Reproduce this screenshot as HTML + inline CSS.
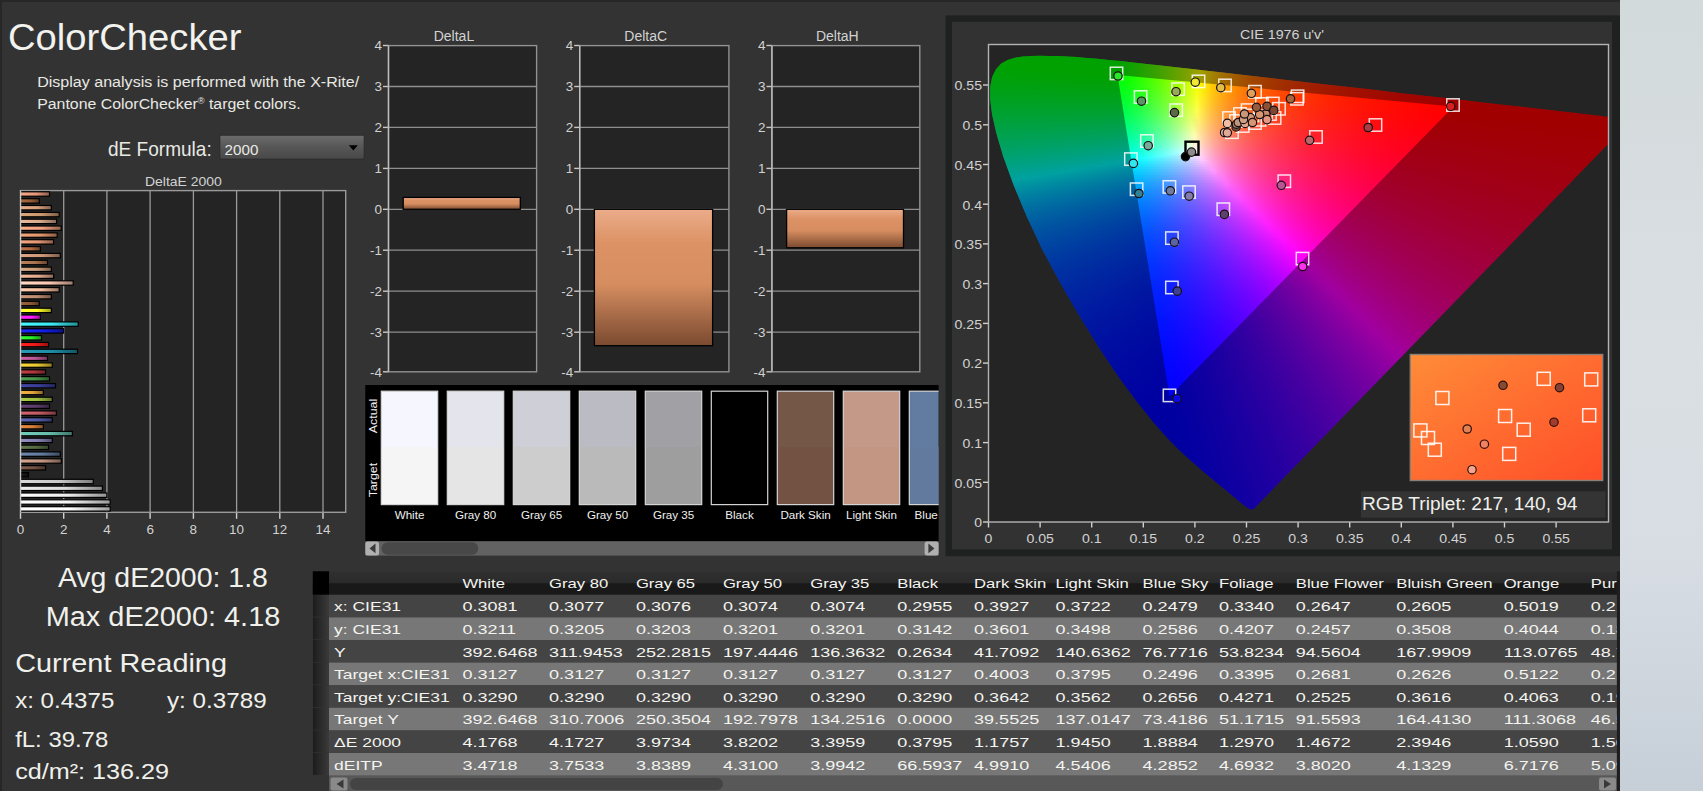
<!DOCTYPE html>
<html><head><meta charset="utf-8"><title>ColorChecker</title>
<style>
html,body{margin:0;padding:0;background:#333;overflow:hidden}
body{width:1703px;height:791px;position:relative;font-family:"Liberation Sans",sans-serif}
svg{position:absolute;left:0;top:0;font-family:"Liberation Sans",sans-serif}
#side{position:absolute;left:1620px;top:0;width:83px;height:791px;background:linear-gradient(180deg,#d3dadb,#dadfe3 45%,#d8dde4 70%,#c6cfd8)}
#topl{position:absolute;left:0;top:0;width:1620px;height:1.5px;background:#272727}#leftl{position:absolute;left:0;top:0;width:1.5px;height:791px;background:#272727}
#cie{position:absolute;left:988.5px;top:44.5px;width:620.0px;height:477.5px;clip-path:polygon(265.1px 464.4px,265.0px 464.4px,264.8px 464.4px,264.7px 464.5px,264.4px 464.5px,264.2px 464.5px,264.1px 464.7px,263.9px 464.9px,263.6px 464.9px,263.1px 464.9px,262.6px 464.8px,262.2px 464.8px,261.6px 464.7px,260.7px 464.3px,259.3px 463.5px,257.6px 462.3px,255.6px 460.8px,253.0px 458.8px,250.0px 456.3px,246.4px 453.3px,242.3px 449.8px,237.5px 445.8px,231.9px 441.2px,225.4px 435.8px,218.0px 429.7px,209.8px 422.8px,200.5px 414.6px,190.1px 404.9px,178.6px 393.2px,164.9px 377.7px,148.7px 357.5px,130.9px 333.4px,111.9px 305.2px,92.1px 273.4px,72.4px 239.7px,53.8px 205.2px,38.0px 171.6px,25.0px 140.3px,14.9px 112.5px,7.9px 89.1px,3.6px 69.9px,1.6px 54.4px,1.7px 42.2px,3.7px 32.3px,7.5px 24.7px,12.7px 19.1px,19.1px 15.4px,26.4px 13.2px,34.4px 12.0px,42.9px 11.5px,51.7px 11.3px,60.5px 11.4px,69.4px 11.6px,78.6px 12.0px,88.2px 12.6px,98.3px 13.4px,108.9px 14.3px,120.1px 15.4px,132.0px 16.6px,144.6px 17.9px,158.0px 19.4px,172.3px 21.0px,187.4px 22.7px,203.5px 24.5px,220.5px 26.5px,238.6px 28.5px,257.6px 30.7px,277.5px 33.0px,298.3px 35.4px,319.9px 37.9px,342.1px 40.4px,364.8px 43.0px,387.3px 45.6px,409.2px 48.2px,430.9px 50.7px,452.0px 53.1px,471.7px 55.3px,490.1px 57.5px,507.2px 59.4px,522.8px 61.2px,536.9px 62.8px,549.5px 64.3px,560.9px 65.6px,571.1px 66.8px,580.5px 67.8px,589.1px 68.8px,596.9px 69.7px,603.9px 70.5px,610.1px 71.3px,615.3px 71.9px,619.7px 72.4px,623.5px 72.8px,626.8px 73.2px,629.6px 73.5px,631.7px 73.8px,633.4px 73.9px,634.9px 74.1px,636.3px 74.3px,637.5px 74.4px,638.6px 74.5px,639.8px 74.7px,640.9px 74.8px,641.8px 74.9px,642.3px 75.0px,642.7px 75.0px,643.0px 75.1px,643.3px 75.1px);overflow:hidden}
#cie i{position:absolute;display:block;height:2.5px}
</style></head><body>
<div id="side"></div><div id="topl"></div><div id="leftl"></div>
<svg width="1703" height="791" viewBox="0 0 1703 791"><defs><linearGradient id="dd" x1="0" y1="0" x2="0" y2="1"><stop offset="0" stop-color="#6c6c6c"/><stop offset=".5" stop-color="#565656"/><stop offset="1" stop-color="#484848"/></linearGradient><linearGradient id="b0"><stop offset="0" stop-color="#f7a888"/><stop offset=".55" stop-color="#e4987a"/><stop offset="1" stop-color="#8d5e4c"/></linearGradient><linearGradient id="b1"><stop offset="0" stop-color="#a66c42"/><stop offset=".55" stop-color="#965f37"/><stop offset="1" stop-color="#5d3b22"/></linearGradient><linearGradient id="b2"><stop offset="0" stop-color="#eab08b"/><stop offset=".55" stop-color="#d7a07d"/><stop offset="1" stop-color="#85634e"/></linearGradient><linearGradient id="b3"><stop offset="0" stop-color="#daa67c"/><stop offset=".55" stop-color="#c8966e"/><stop offset="1" stop-color="#7c5d44"/></linearGradient><linearGradient id="b4"><stop offset="0" stop-color="#eaba9b"/><stop offset=".55" stop-color="#d7aa8c"/><stop offset="1" stop-color="#856957"/></linearGradient><linearGradient id="b5"><stop offset="0" stop-color="#ffb08b"/><stop offset=".55" stop-color="#f0a07d"/><stop offset="1" stop-color="#95634e"/></linearGradient><linearGradient id="b6"><stop offset="0" stop-color="#f4a67c"/><stop offset=".55" stop-color="#e1966e"/><stop offset="1" stop-color="#8c5d44"/></linearGradient><linearGradient id="b7"><stop offset="0" stop-color="#f4a681"/><stop offset=".55" stop-color="#e19673"/><stop offset="1" stop-color="#8c5d47"/></linearGradient><linearGradient id="b8"><stop offset="0" stop-color="#c0764c"/><stop offset=".55" stop-color="#af6941"/><stop offset="1" stop-color="#6c4128"/></linearGradient><linearGradient id="b9"><stop offset="0" stop-color="#dfa686"/><stop offset=".55" stop-color="#cd9678"/><stop offset="1" stop-color="#7f5d4a"/></linearGradient><linearGradient id="b10"><stop offset="0" stop-color="#ba815c"/><stop offset=".55" stop-color="#aa7350"/><stop offset="1" stop-color="#694732"/></linearGradient><linearGradient id="b11"><stop offset="0" stop-color="#daab86"/><stop offset=".55" stop-color="#c89b78"/><stop offset="1" stop-color="#7c604a"/></linearGradient><linearGradient id="b12"><stop offset="0" stop-color="#f4ba9b"/><stop offset=".55" stop-color="#e1aa8c"/><stop offset="1" stop-color="#8c6957"/></linearGradient><linearGradient id="b13"><stop offset="0" stop-color="#ffdac5"/><stop offset=".55" stop-color="#fac8b4"/><stop offset="1" stop-color="#9b7c70"/></linearGradient><linearGradient id="b14"><stop offset="0" stop-color="#ffd0b0"/><stop offset=".55" stop-color="#f5bea0"/><stop offset="1" stop-color="#987663"/></linearGradient><linearGradient id="b15"><stop offset="0" stop-color="#d09b7c"/><stop offset=".55" stop-color="#be8c6e"/><stop offset="1" stop-color="#765744"/></linearGradient><linearGradient id="b16"><stop offset="0" stop-color="#9b6642"/><stop offset=".55" stop-color="#8c5a37"/><stop offset="1" stop-color="#573822"/></linearGradient><linearGradient id="b17"><stop offset="0" stop-color="#ffff32"/><stop offset=".55" stop-color="#ffff28"/><stop offset="1" stop-color="#9e9e19"/></linearGradient><linearGradient id="b18"><stop offset="0" stop-color="#ff28ff"/><stop offset=".55" stop-color="#ff1eff"/><stop offset="1" stop-color="#9e139e"/></linearGradient><linearGradient id="b19"><stop offset="0" stop-color="#47faff"/><stop offset=".55" stop-color="#3ce6f0"/><stop offset="1" stop-color="#258f95"/></linearGradient><linearGradient id="b20"><stop offset="0" stop-color="#1d28fa"/><stop offset=".55" stop-color="#141ee6"/><stop offset="1" stop-color="#0c138f"/></linearGradient><linearGradient id="b21"><stop offset="0" stop-color="#32ff32"/><stop offset=".55" stop-color="#28f028"/><stop offset="1" stop-color="#199519"/></linearGradient><linearGradient id="b22"><stop offset="0" stop-color="#ff2222"/><stop offset=".55" stop-color="#f01919"/><stop offset="1" stop-color="#951010"/></linearGradient><linearGradient id="b23"><stop offset="0" stop-color="#289bb5"/><stop offset=".55" stop-color="#1e8ca5"/><stop offset="1" stop-color="#135766"/></linearGradient><linearGradient id="b24"><stop offset="0" stop-color="#cc62a4"/><stop offset=".55" stop-color="#bb5695"/><stop offset="1" stop-color="#74355c"/></linearGradient><linearGradient id="b25"><stop offset="0" stop-color="#fbd93c"/><stop offset=".55" stop-color="#e7c732"/><stop offset="1" stop-color="#8f7b1f"/></linearGradient><linearGradient id="b26"><stop offset="0" stop-color="#c04147"/><stop offset=".55" stop-color="#af363c"/><stop offset="1" stop-color="#6c2125"/></linearGradient><linearGradient id="b27"><stop offset="0" stop-color="#52a355"/><stop offset=".55" stop-color="#469449"/><stop offset="1" stop-color="#2b5c2d"/></linearGradient><linearGradient id="b28"><stop offset="0" stop-color="#4348a6"/><stop offset=".55" stop-color="#383d96"/><stop offset="1" stop-color="#23265d"/></linearGradient><linearGradient id="b29"><stop offset="0" stop-color="#f3b347"/><stop offset=".55" stop-color="#e0a33c"/><stop offset="1" stop-color="#8b6525"/></linearGradient><linearGradient id="b30"><stop offset="0" stop-color="#adcd4b"/><stop offset=".55" stop-color="#9dbc40"/><stop offset="1" stop-color="#617528"/></linearGradient><linearGradient id="b31"><stop offset="0" stop-color="#6b4779"/><stop offset=".55" stop-color="#5e3c6c"/><stop offset="1" stop-color="#3a2543"/></linearGradient><linearGradient id="b32"><stop offset="0" stop-color="#d36670"/><stop offset=".55" stop-color="#c15a63"/><stop offset="1" stop-color="#78383d"/></linearGradient><linearGradient id="b33"><stop offset="0" stop-color="#5c68b6"/><stop offset=".55" stop-color="#505ba6"/><stop offset="1" stop-color="#323867"/></linearGradient><linearGradient id="b34"><stop offset="0" stop-color="#e98c42"/><stop offset=".55" stop-color="#d67e37"/><stop offset="1" stop-color="#854e22"/></linearGradient><linearGradient id="b35"><stop offset="0" stop-color="#74ceba"/><stop offset=".55" stop-color="#67bdaa"/><stop offset="1" stop-color="#407569"/></linearGradient><linearGradient id="b36"><stop offset="0" stop-color="#948ec2"/><stop offset=".55" stop-color="#8580b1"/><stop offset="1" stop-color="#524f6e"/></linearGradient><linearGradient id="b37"><stop offset="0" stop-color="#63794e"/><stop offset=".55" stop-color="#576c43"/><stop offset="1" stop-color="#36432a"/></linearGradient><linearGradient id="b38"><stop offset="0" stop-color="#6f88ad"/><stop offset=".55" stop-color="#627a9d"/><stop offset="1" stop-color="#3d4c61"/></linearGradient><linearGradient id="b39"><stop offset="0" stop-color="#d4a690"/><stop offset=".55" stop-color="#c29682"/><stop offset="1" stop-color="#785d51"/></linearGradient><linearGradient id="b40"><stop offset="0" stop-color="#815e4f"/><stop offset=".55" stop-color="#735244"/><stop offset="1" stop-color="#47332a"/></linearGradient><linearGradient id="b41"><stop offset="0" stop-color="#1d1d1d"/><stop offset=".55" stop-color="#141414"/><stop offset="1" stop-color="#0c0c0c"/></linearGradient><linearGradient id="b42"><stop offset="0" stop-color="#dadada"/><stop offset=".55" stop-color="#c8c8c8"/><stop offset="1" stop-color="#7c7c7c"/></linearGradient><linearGradient id="b43"><stop offset="0" stop-color="#efefef"/><stop offset=".55" stop-color="#dcdcdc"/><stop offset="1" stop-color="#888888"/></linearGradient><linearGradient id="b44"><stop offset="0" stop-color="#ffffff"/><stop offset=".55" stop-color="#ebebeb"/><stop offset="1" stop-color="#929292"/></linearGradient><linearGradient id="b45"><stop offset="0" stop-color="#ffffff"/><stop offset=".55" stop-color="#f5f5f5"/><stop offset="1" stop-color="#989898"/></linearGradient><linearGradient id="b46"><stop offset="0" stop-color="#ffffff"/><stop offset=".55" stop-color="#ffffff"/><stop offset="1" stop-color="#9e9e9e"/></linearGradient><linearGradient id="sk" x1="0" y1="0" x2="0" y2="1"><stop offset="0" stop-color="#ebac8a"/><stop offset=".25" stop-color="#dc9264"/><stop offset=".55" stop-color="#d68d60"/><stop offset="1" stop-color="#7a4a30"/></linearGradient><linearGradient id="hd" x1="0" y1="0" x2="0" y2="1"><stop offset="0" stop-color="#303030"/><stop offset="1" stop-color="#2a2a2a"/></linearGradient><linearGradient id="rh"><stop offset="0" stop-color="#1c1c1c"/><stop offset="1" stop-color="#3a3a3a"/></linearGradient></defs>
<text x="8.0" y="49.7" font-size="36.6" textLength="233.5" lengthAdjust="spacingAndGlyphs" fill="#f2f2ee">ColorChecker</text>
<text x="37.2" y="86.7" font-size="15.5" textLength="322.0" lengthAdjust="spacingAndGlyphs" fill="#e9e9e4">Display analysis is performed with the X-Rite/</text>
<text x="37.2" y="108.7" font-size="15.5" textLength="263.5" lengthAdjust="spacingAndGlyphs" fill="#e9e9e4">Pantone ColorChecker<tspan font-size="9" dy="-5">®</tspan><tspan dy="5"> target colors.</tspan></text>
<text x="108.0" y="155.8" font-size="21" textLength="103.7" lengthAdjust="spacingAndGlyphs" fill="#e9e9e4">dE Formula:</text>
<rect x="219.8" y="135.2" width="144.4" height="24.0" fill="url(#dd)" stroke="#2a2a2a" stroke-width="1" rx="1.5"/>
<text x="224.6" y="154.7" font-size="14" textLength="33.8" lengthAdjust="spacingAndGlyphs" fill="#e9e9e4">2000</text>
<path d="M348.8 145.2h9l-4.5 5.2z" fill="#000"/>
<rect x="20.5" y="190.6" width="325.2" height="321.7" fill="#242424"/>
<text x="144.9" y="185.8" font-size="13.6" textLength="77.0" lengthAdjust="spacingAndGlyphs" fill="#d2d2d2">DeltaE 2000</text>
<line x1="20.5" y1="512.3" x2="20.5" y2="518.8" stroke="#d0d0d0" stroke-width="1.4"/>
<text x="16.8" y="533.8" font-size="13.4" textLength="7.5" lengthAdjust="spacingAndGlyphs" fill="#d2d2d2">0</text>
<line x1="63.7" y1="190.6" x2="63.7" y2="512.3" stroke="#9a9a9a" stroke-width="1.3"/>
<line x1="63.7" y1="512.3" x2="63.7" y2="518.8" stroke="#d0d0d0" stroke-width="1.4"/>
<text x="60.0" y="533.8" font-size="13.4" textLength="7.5" lengthAdjust="spacingAndGlyphs" fill="#d2d2d2">2</text>
<line x1="106.9" y1="190.6" x2="106.9" y2="512.3" stroke="#9a9a9a" stroke-width="1.3"/>
<line x1="106.9" y1="512.3" x2="106.9" y2="518.8" stroke="#d0d0d0" stroke-width="1.4"/>
<text x="103.2" y="533.8" font-size="13.4" textLength="7.5" lengthAdjust="spacingAndGlyphs" fill="#d2d2d2">4</text>
<line x1="150.1" y1="190.6" x2="150.1" y2="512.3" stroke="#9a9a9a" stroke-width="1.3"/>
<line x1="150.1" y1="512.3" x2="150.1" y2="518.8" stroke="#d0d0d0" stroke-width="1.4"/>
<text x="146.4" y="533.8" font-size="13.4" textLength="7.5" lengthAdjust="spacingAndGlyphs" fill="#d2d2d2">6</text>
<line x1="193.4" y1="190.6" x2="193.4" y2="512.3" stroke="#9a9a9a" stroke-width="1.3"/>
<line x1="193.4" y1="512.3" x2="193.4" y2="518.8" stroke="#d0d0d0" stroke-width="1.4"/>
<text x="189.6" y="533.8" font-size="13.4" textLength="7.5" lengthAdjust="spacingAndGlyphs" fill="#d2d2d2">8</text>
<line x1="236.6" y1="190.6" x2="236.6" y2="512.3" stroke="#9a9a9a" stroke-width="1.3"/>
<line x1="236.6" y1="512.3" x2="236.6" y2="518.8" stroke="#d0d0d0" stroke-width="1.4"/>
<text x="229.1" y="533.8" font-size="13.4" textLength="14.9" lengthAdjust="spacingAndGlyphs" fill="#d2d2d2">10</text>
<line x1="279.8" y1="190.6" x2="279.8" y2="512.3" stroke="#9a9a9a" stroke-width="1.3"/>
<line x1="279.8" y1="512.3" x2="279.8" y2="518.8" stroke="#d0d0d0" stroke-width="1.4"/>
<text x="272.3" y="533.8" font-size="13.4" textLength="14.9" lengthAdjust="spacingAndGlyphs" fill="#d2d2d2">12</text>
<line x1="323.0" y1="190.6" x2="323.0" y2="512.3" stroke="#9a9a9a" stroke-width="1.3"/>
<line x1="323.0" y1="512.3" x2="323.0" y2="518.8" stroke="#d0d0d0" stroke-width="1.4"/>
<text x="315.5" y="533.8" font-size="13.4" textLength="14.9" lengthAdjust="spacingAndGlyphs" fill="#d2d2d2">14</text>
<rect x="20.5" y="190.6" width="325.2" height="321.69999999999993" fill="none" stroke="#9a9a9a" stroke-width="1.4"/>
<rect x="19.5" y="191.8" width="30.0" height="4.4" fill="url(#b0)" stroke="#000" stroke-width="1.2"/>
<rect x="19.5" y="198.7" width="19.8" height="4.4" fill="url(#b1)" stroke="#000" stroke-width="1.2"/>
<rect x="19.5" y="205.5" width="31.9" height="4.4" fill="url(#b2)" stroke="#000" stroke-width="1.2"/>
<rect x="19.5" y="212.4" width="39.7" height="4.4" fill="url(#b3)" stroke="#000" stroke-width="1.2"/>
<rect x="19.5" y="219.2" width="37.1" height="4.4" fill="url(#b4)" stroke="#000" stroke-width="1.2"/>
<rect x="19.5" y="226.0" width="41.6" height="4.4" fill="url(#b5)" stroke="#000" stroke-width="1.2"/>
<rect x="19.5" y="232.9" width="37.7" height="4.4" fill="url(#b6)" stroke="#000" stroke-width="1.2"/>
<rect x="19.5" y="239.7" width="34.1" height="4.4" fill="url(#b7)" stroke="#000" stroke-width="1.2"/>
<rect x="19.5" y="246.6" width="20.9" height="4.4" fill="url(#b8)" stroke="#000" stroke-width="1.2"/>
<rect x="19.5" y="253.4" width="40.8" height="4.4" fill="url(#b9)" stroke="#000" stroke-width="1.2"/>
<rect x="19.5" y="260.3" width="28.0" height="4.4" fill="url(#b10)" stroke="#000" stroke-width="1.2"/>
<rect x="19.5" y="267.1" width="31.9" height="4.4" fill="url(#b11)" stroke="#000" stroke-width="1.2"/>
<rect x="19.5" y="274.0" width="34.1" height="4.4" fill="url(#b12)" stroke="#000" stroke-width="1.2"/>
<rect x="19.5" y="280.8" width="53.7" height="4.4" fill="url(#b13)" stroke="#000" stroke-width="1.2"/>
<rect x="19.5" y="287.6" width="39.7" height="4.4" fill="url(#b14)" stroke="#000" stroke-width="1.2"/>
<rect x="19.5" y="294.5" width="31.9" height="4.4" fill="url(#b15)" stroke="#000" stroke-width="1.2"/>
<rect x="19.5" y="301.3" width="19.8" height="4.4" fill="url(#b16)" stroke="#000" stroke-width="1.2"/>
<rect x="19.5" y="308.2" width="31.9" height="4.4" fill="url(#b17)" stroke="#000" stroke-width="1.2"/>
<rect x="19.5" y="315.0" width="20.9" height="4.4" fill="url(#b18)" stroke="#000" stroke-width="1.2"/>
<rect x="19.5" y="321.9" width="58.7" height="4.4" fill="url(#b19)" stroke="#000" stroke-width="1.2"/>
<rect x="19.5" y="328.7" width="44.0" height="4.4" fill="url(#b20)" stroke="#000" stroke-width="1.2"/>
<rect x="19.5" y="335.6" width="22.0" height="4.4" fill="url(#b21)" stroke="#000" stroke-width="1.2"/>
<rect x="19.5" y="342.4" width="29.1" height="4.4" fill="url(#b22)" stroke="#000" stroke-width="1.2"/>
<rect x="19.5" y="349.2" width="58.0" height="4.4" fill="url(#b23)" stroke="#000" stroke-width="1.2"/>
<rect x="19.5" y="356.1" width="28.0" height="4.4" fill="url(#b24)" stroke="#000" stroke-width="1.2"/>
<rect x="19.5" y="362.9" width="32.8" height="4.4" fill="url(#b25)" stroke="#000" stroke-width="1.2"/>
<rect x="19.5" y="369.8" width="26.1" height="4.4" fill="url(#b26)" stroke="#000" stroke-width="1.2"/>
<rect x="19.5" y="376.6" width="30.0" height="4.4" fill="url(#b27)" stroke="#000" stroke-width="1.2"/>
<rect x="19.5" y="383.5" width="36.0" height="4.4" fill="url(#b28)" stroke="#000" stroke-width="1.2"/>
<rect x="19.5" y="390.3" width="23.9" height="4.4" fill="url(#b29)" stroke="#000" stroke-width="1.2"/>
<rect x="19.5" y="397.2" width="32.8" height="4.4" fill="url(#b30)" stroke="#000" stroke-width="1.2"/>
<rect x="19.5" y="404.0" width="30.0" height="4.4" fill="url(#b31)" stroke="#000" stroke-width="1.2"/>
<rect x="19.5" y="410.9" width="36.9" height="4.4" fill="url(#b32)" stroke="#000" stroke-width="1.2"/>
<rect x="19.5" y="417.7" width="32.8" height="4.4" fill="url(#b33)" stroke="#000" stroke-width="1.2"/>
<rect x="19.5" y="424.5" width="23.9" height="4.4" fill="url(#b34)" stroke="#000" stroke-width="1.2"/>
<rect x="19.5" y="431.4" width="52.9" height="4.4" fill="url(#b35)" stroke="#000" stroke-width="1.2"/>
<rect x="19.5" y="438.2" width="32.8" height="4.4" fill="url(#b36)" stroke="#000" stroke-width="1.2"/>
<rect x="19.5" y="445.1" width="29.1" height="4.4" fill="url(#b37)" stroke="#000" stroke-width="1.2"/>
<rect x="19.5" y="451.9" width="40.8" height="4.4" fill="url(#b38)" stroke="#000" stroke-width="1.2"/>
<rect x="19.5" y="458.8" width="41.8" height="4.4" fill="url(#b39)" stroke="#000" stroke-width="1.2"/>
<rect x="19.5" y="465.6" width="26.1" height="4.4" fill="url(#b40)" stroke="#000" stroke-width="1.2"/>
<rect x="19.5" y="472.5" width="9.0" height="4.4" fill="url(#b41)" stroke="#000" stroke-width="1.2"/>
<rect x="19.5" y="479.3" width="73.8" height="4.4" fill="url(#b42)" stroke="#000" stroke-width="1.2"/>
<rect x="19.5" y="486.1" width="82.9" height="4.4" fill="url(#b43)" stroke="#000" stroke-width="1.2"/>
<rect x="19.5" y="493.0" width="87.4" height="4.4" fill="url(#b44)" stroke="#000" stroke-width="1.2"/>
<rect x="19.5" y="499.8" width="90.7" height="4.4" fill="url(#b45)" stroke="#000" stroke-width="1.2"/>
<rect x="19.5" y="506.7" width="90.7" height="4.4" fill="url(#b46)" stroke="#000" stroke-width="1.2"/>
<rect x="17.5" y="190.6" width="2.3" height="321.7" fill="#333"/>
<line x1="20.5" y1="190.6" x2="20.5" y2="512.3" stroke="#c8c8c8" stroke-width="1.4"/>
<rect x="388.5" y="45.6" width="148.1" height="326.2" fill="#242424"/>
<line x1="383.0" y1="371.8" x2="388.5" y2="371.8" stroke="#c8c8c8" stroke-width="1.4"/>
<text x="370.1" y="376.7" font-size="13.4" textLength="11.9" lengthAdjust="spacingAndGlyphs" fill="#d2d2d2">-4</text>
<line x1="388.5" y1="332.2" x2="536.6" y2="332.2" stroke="#8e8e8e" stroke-width="1.3"/>
<line x1="383.0" y1="332.2" x2="388.5" y2="332.2" stroke="#c8c8c8" stroke-width="1.4"/>
<text x="370.1" y="337.1" font-size="13.4" textLength="11.9" lengthAdjust="spacingAndGlyphs" fill="#d2d2d2">-3</text>
<line x1="388.5" y1="291.2" x2="536.6" y2="291.2" stroke="#8e8e8e" stroke-width="1.3"/>
<line x1="383.0" y1="291.2" x2="388.5" y2="291.2" stroke="#c8c8c8" stroke-width="1.4"/>
<text x="370.1" y="296.1" font-size="13.4" textLength="11.9" lengthAdjust="spacingAndGlyphs" fill="#d2d2d2">-2</text>
<line x1="388.5" y1="250.2" x2="536.6" y2="250.2" stroke="#8e8e8e" stroke-width="1.3"/>
<line x1="383.0" y1="250.2" x2="388.5" y2="250.2" stroke="#c8c8c8" stroke-width="1.4"/>
<text x="370.1" y="255.2" font-size="13.4" textLength="11.9" lengthAdjust="spacingAndGlyphs" fill="#d2d2d2">-1</text>
<line x1="388.5" y1="209.3" x2="536.6" y2="209.3" stroke="#8e8e8e" stroke-width="1.3"/>
<line x1="383.0" y1="209.3" x2="388.5" y2="209.3" stroke="#c8c8c8" stroke-width="1.4"/>
<text x="374.5" y="214.2" font-size="13.4" textLength="7.5" lengthAdjust="spacingAndGlyphs" fill="#d2d2d2">0</text>
<line x1="388.5" y1="168.4" x2="536.6" y2="168.4" stroke="#8e8e8e" stroke-width="1.3"/>
<line x1="383.0" y1="168.4" x2="388.5" y2="168.4" stroke="#c8c8c8" stroke-width="1.4"/>
<text x="374.5" y="173.3" font-size="13.4" textLength="7.5" lengthAdjust="spacingAndGlyphs" fill="#d2d2d2">1</text>
<line x1="388.5" y1="127.4" x2="536.6" y2="127.4" stroke="#8e8e8e" stroke-width="1.3"/>
<line x1="383.0" y1="127.4" x2="388.5" y2="127.4" stroke="#c8c8c8" stroke-width="1.4"/>
<text x="374.5" y="132.3" font-size="13.4" textLength="7.5" lengthAdjust="spacingAndGlyphs" fill="#d2d2d2">2</text>
<line x1="388.5" y1="86.5" x2="536.6" y2="86.5" stroke="#8e8e8e" stroke-width="1.3"/>
<line x1="383.0" y1="86.5" x2="388.5" y2="86.5" stroke="#c8c8c8" stroke-width="1.4"/>
<text x="374.5" y="91.4" font-size="13.4" textLength="7.5" lengthAdjust="spacingAndGlyphs" fill="#d2d2d2">3</text>
<line x1="383.0" y1="45.5" x2="388.5" y2="45.5" stroke="#c8c8c8" stroke-width="1.4"/>
<text x="374.5" y="50.4" font-size="13.4" textLength="7.5" lengthAdjust="spacingAndGlyphs" fill="#d2d2d2">4</text>
<rect x="388.5" y="45.6" width="148.1" height="326.2" fill="none" stroke="#929292" stroke-width="1.4"/>
<line x1="388.5" y1="45.6" x2="388.5" y2="371.8" stroke="#bdbdbd" stroke-width="1.4"/>
<text x="433.7" y="41.3" font-size="14" textLength="40.5" lengthAdjust="spacingAndGlyphs" fill="#d2d2d2">DeltaL</text>
<rect x="403.2" y="197.4" width="117.1" height="11.9" fill="url(#sk)" stroke="#000" stroke-width="1.3"/>
<rect x="579.7" y="45.6" width="149.2" height="326.2" fill="#242424"/>
<line x1="574.2" y1="371.8" x2="579.7" y2="371.8" stroke="#c8c8c8" stroke-width="1.4"/>
<text x="561.3" y="376.7" font-size="13.4" textLength="11.9" lengthAdjust="spacingAndGlyphs" fill="#d2d2d2">-4</text>
<line x1="579.7" y1="332.2" x2="728.9" y2="332.2" stroke="#8e8e8e" stroke-width="1.3"/>
<line x1="574.2" y1="332.2" x2="579.7" y2="332.2" stroke="#c8c8c8" stroke-width="1.4"/>
<text x="561.3" y="337.1" font-size="13.4" textLength="11.9" lengthAdjust="spacingAndGlyphs" fill="#d2d2d2">-3</text>
<line x1="579.7" y1="291.2" x2="728.9" y2="291.2" stroke="#8e8e8e" stroke-width="1.3"/>
<line x1="574.2" y1="291.2" x2="579.7" y2="291.2" stroke="#c8c8c8" stroke-width="1.4"/>
<text x="561.3" y="296.1" font-size="13.4" textLength="11.9" lengthAdjust="spacingAndGlyphs" fill="#d2d2d2">-2</text>
<line x1="579.7" y1="250.2" x2="728.9" y2="250.2" stroke="#8e8e8e" stroke-width="1.3"/>
<line x1="574.2" y1="250.2" x2="579.7" y2="250.2" stroke="#c8c8c8" stroke-width="1.4"/>
<text x="561.3" y="255.2" font-size="13.4" textLength="11.9" lengthAdjust="spacingAndGlyphs" fill="#d2d2d2">-1</text>
<line x1="579.7" y1="209.3" x2="728.9" y2="209.3" stroke="#8e8e8e" stroke-width="1.3"/>
<line x1="574.2" y1="209.3" x2="579.7" y2="209.3" stroke="#c8c8c8" stroke-width="1.4"/>
<text x="565.7" y="214.2" font-size="13.4" textLength="7.5" lengthAdjust="spacingAndGlyphs" fill="#d2d2d2">0</text>
<line x1="579.7" y1="168.4" x2="728.9" y2="168.4" stroke="#8e8e8e" stroke-width="1.3"/>
<line x1="574.2" y1="168.4" x2="579.7" y2="168.4" stroke="#c8c8c8" stroke-width="1.4"/>
<text x="565.7" y="173.3" font-size="13.4" textLength="7.5" lengthAdjust="spacingAndGlyphs" fill="#d2d2d2">1</text>
<line x1="579.7" y1="127.4" x2="728.9" y2="127.4" stroke="#8e8e8e" stroke-width="1.3"/>
<line x1="574.2" y1="127.4" x2="579.7" y2="127.4" stroke="#c8c8c8" stroke-width="1.4"/>
<text x="565.7" y="132.3" font-size="13.4" textLength="7.5" lengthAdjust="spacingAndGlyphs" fill="#d2d2d2">2</text>
<line x1="579.7" y1="86.5" x2="728.9" y2="86.5" stroke="#8e8e8e" stroke-width="1.3"/>
<line x1="574.2" y1="86.5" x2="579.7" y2="86.5" stroke="#c8c8c8" stroke-width="1.4"/>
<text x="565.7" y="91.4" font-size="13.4" textLength="7.5" lengthAdjust="spacingAndGlyphs" fill="#d2d2d2">3</text>
<line x1="574.2" y1="45.5" x2="579.7" y2="45.5" stroke="#c8c8c8" stroke-width="1.4"/>
<text x="565.7" y="50.4" font-size="13.4" textLength="7.5" lengthAdjust="spacingAndGlyphs" fill="#d2d2d2">4</text>
<rect x="579.7" y="45.6" width="149.2" height="326.2" fill="none" stroke="#929292" stroke-width="1.4"/>
<line x1="579.7" y1="45.6" x2="579.7" y2="371.8" stroke="#bdbdbd" stroke-width="1.4"/>
<text x="624.3" y="41.3" font-size="14" textLength="42.8" lengthAdjust="spacingAndGlyphs" fill="#d2d2d2">DeltaC</text>
<rect x="594.4" y="209.3" width="118.2" height="136.4" fill="url(#sk)" stroke="#000" stroke-width="1.3"/>
<rect x="771.9" y="45.6" width="147.9" height="326.2" fill="#242424"/>
<line x1="766.4" y1="371.8" x2="771.9" y2="371.8" stroke="#c8c8c8" stroke-width="1.4"/>
<text x="753.5" y="376.7" font-size="13.4" textLength="11.9" lengthAdjust="spacingAndGlyphs" fill="#d2d2d2">-4</text>
<line x1="771.9" y1="332.2" x2="919.8" y2="332.2" stroke="#8e8e8e" stroke-width="1.3"/>
<line x1="766.4" y1="332.2" x2="771.9" y2="332.2" stroke="#c8c8c8" stroke-width="1.4"/>
<text x="753.5" y="337.1" font-size="13.4" textLength="11.9" lengthAdjust="spacingAndGlyphs" fill="#d2d2d2">-3</text>
<line x1="771.9" y1="291.2" x2="919.8" y2="291.2" stroke="#8e8e8e" stroke-width="1.3"/>
<line x1="766.4" y1="291.2" x2="771.9" y2="291.2" stroke="#c8c8c8" stroke-width="1.4"/>
<text x="753.5" y="296.1" font-size="13.4" textLength="11.9" lengthAdjust="spacingAndGlyphs" fill="#d2d2d2">-2</text>
<line x1="771.9" y1="250.2" x2="919.8" y2="250.2" stroke="#8e8e8e" stroke-width="1.3"/>
<line x1="766.4" y1="250.2" x2="771.9" y2="250.2" stroke="#c8c8c8" stroke-width="1.4"/>
<text x="753.5" y="255.2" font-size="13.4" textLength="11.9" lengthAdjust="spacingAndGlyphs" fill="#d2d2d2">-1</text>
<line x1="771.9" y1="209.3" x2="919.8" y2="209.3" stroke="#8e8e8e" stroke-width="1.3"/>
<line x1="766.4" y1="209.3" x2="771.9" y2="209.3" stroke="#c8c8c8" stroke-width="1.4"/>
<text x="757.9" y="214.2" font-size="13.4" textLength="7.5" lengthAdjust="spacingAndGlyphs" fill="#d2d2d2">0</text>
<line x1="771.9" y1="168.4" x2="919.8" y2="168.4" stroke="#8e8e8e" stroke-width="1.3"/>
<line x1="766.4" y1="168.4" x2="771.9" y2="168.4" stroke="#c8c8c8" stroke-width="1.4"/>
<text x="757.9" y="173.3" font-size="13.4" textLength="7.5" lengthAdjust="spacingAndGlyphs" fill="#d2d2d2">1</text>
<line x1="771.9" y1="127.4" x2="919.8" y2="127.4" stroke="#8e8e8e" stroke-width="1.3"/>
<line x1="766.4" y1="127.4" x2="771.9" y2="127.4" stroke="#c8c8c8" stroke-width="1.4"/>
<text x="757.9" y="132.3" font-size="13.4" textLength="7.5" lengthAdjust="spacingAndGlyphs" fill="#d2d2d2">2</text>
<line x1="771.9" y1="86.5" x2="919.8" y2="86.5" stroke="#8e8e8e" stroke-width="1.3"/>
<line x1="766.4" y1="86.5" x2="771.9" y2="86.5" stroke="#c8c8c8" stroke-width="1.4"/>
<text x="757.9" y="91.4" font-size="13.4" textLength="7.5" lengthAdjust="spacingAndGlyphs" fill="#d2d2d2">3</text>
<line x1="766.4" y1="45.5" x2="771.9" y2="45.5" stroke="#c8c8c8" stroke-width="1.4"/>
<text x="757.9" y="50.4" font-size="13.4" textLength="7.5" lengthAdjust="spacingAndGlyphs" fill="#d2d2d2">4</text>
<rect x="771.9" y="45.6" width="147.9" height="326.2" fill="none" stroke="#929292" stroke-width="1.4"/>
<line x1="771.9" y1="45.6" x2="771.9" y2="371.8" stroke="#bdbdbd" stroke-width="1.4"/>
<text x="815.9" y="41.3" font-size="14" textLength="42.8" lengthAdjust="spacingAndGlyphs" fill="#d2d2d2">DeltaH</text>
<rect x="786.6" y="209.3" width="116.9" height="38.5" fill="url(#sk)" stroke="#000" stroke-width="1.3"/>
<rect x="365.3" y="385.0" width="573.3" height="156.5" fill="#000"/>
<rect x="365.3" y="541.2" width="573.3" height="14.4" fill="#626262"/>
<rect x="365.3" y="541.4" width="13.8" height="14.2" fill="#b0b0b0" rx="2.5"/>
<path d="M375.5 543.6v9.6l-6-4.8z" fill="#3a3a3a"/>
<rect x="924.6" y="541.4" width="14.0" height="14.2" fill="#b0b0b0" rx="2.5"/>
<path d="M928.4 543.6v9.6l6-4.8z" fill="#3a3a3a"/>
<rect x="381.6" y="542.3" width="96.6" height="12.4" fill="#484848" rx="6"/>
<clipPath id="pc"><rect x="365.3" y="385" width="573.3" height="156"/></clipPath><g clip-path="url(#pc)">
<rect x="381.3" y="391.2" width="56.4" height="113.4" fill="#f6f6fe"/>
<rect x="381.3" y="447.0" width="56.4" height="57.6" fill="#f5f5f5"/>
<rect x="381.3" y="391.2" width="56.4" height="113.4" fill="none" stroke="#d4d4d4" stroke-width="1.2"/>
<text x="394.7" y="519.0" font-size="11.6" textLength="29.7" lengthAdjust="spacingAndGlyphs" fill="#f0f0f0">White</text>
<rect x="447.3" y="391.2" width="56.4" height="113.4" fill="#e4e4ec"/>
<rect x="447.3" y="447.0" width="56.4" height="57.6" fill="#e5e5e5"/>
<rect x="447.3" y="391.2" width="56.4" height="113.4" fill="none" stroke="#d4d4d4" stroke-width="1.2"/>
<text x="454.9" y="519.0" font-size="11.6" textLength="41.3" lengthAdjust="spacingAndGlyphs" fill="#f0f0f0">Gray 80</text>
<rect x="513.3" y="391.2" width="56.4" height="113.4" fill="#cfcfd7"/>
<rect x="513.3" y="447.0" width="56.4" height="57.6" fill="#cdcdcd"/>
<rect x="513.3" y="391.2" width="56.4" height="113.4" fill="none" stroke="#d4d4d4" stroke-width="1.2"/>
<text x="520.9" y="519.0" font-size="11.6" textLength="41.3" lengthAdjust="spacingAndGlyphs" fill="#f0f0f0">Gray 65</text>
<rect x="579.3" y="391.2" width="56.4" height="113.4" fill="#bbbbc3"/>
<rect x="579.3" y="447.0" width="56.4" height="57.6" fill="#bababa"/>
<rect x="579.3" y="391.2" width="56.4" height="113.4" fill="none" stroke="#d4d4d4" stroke-width="1.2"/>
<text x="586.9" y="519.0" font-size="11.6" textLength="41.3" lengthAdjust="spacingAndGlyphs" fill="#f0f0f0">Gray 50</text>
<rect x="645.3" y="391.2" width="56.4" height="113.4" fill="#a0a0a5"/>
<rect x="645.3" y="447.0" width="56.4" height="57.6" fill="#9e9e9e"/>
<rect x="645.3" y="391.2" width="56.4" height="113.4" fill="none" stroke="#d4d4d4" stroke-width="1.2"/>
<text x="652.9" y="519.0" font-size="11.6" textLength="41.3" lengthAdjust="spacingAndGlyphs" fill="#f0f0f0">Gray 35</text>
<rect x="711.3" y="391.2" width="56.4" height="113.4" fill="#000000"/>
<rect x="711.3" y="447.0" width="56.4" height="57.6" fill="#000000"/>
<rect x="711.3" y="391.2" width="56.4" height="113.4" fill="none" stroke="#d4d4d4" stroke-width="1.2"/>
<text x="725.3" y="519.0" font-size="11.6" textLength="28.4" lengthAdjust="spacingAndGlyphs" fill="#f0f0f0">Black</text>
<rect x="777.3" y="391.2" width="56.4" height="113.4" fill="#755748"/>
<rect x="777.3" y="447.0" width="56.4" height="57.6" fill="#735244"/>
<rect x="777.3" y="391.2" width="56.4" height="113.4" fill="none" stroke="#d4d4d4" stroke-width="1.2"/>
<text x="780.4" y="519.0" font-size="11.6" textLength="50.3" lengthAdjust="spacingAndGlyphs" fill="#f0f0f0">Dark Skin</text>
<rect x="843.3" y="391.2" width="56.4" height="113.4" fill="#c49987"/>
<rect x="843.3" y="447.0" width="56.4" height="57.6" fill="#c29682"/>
<rect x="843.3" y="391.2" width="56.4" height="113.4" fill="none" stroke="#d4d4d4" stroke-width="1.2"/>
<text x="846.0" y="519.0" font-size="11.6" textLength="50.9" lengthAdjust="spacingAndGlyphs" fill="#f0f0f0">Light Skin</text>
<rect x="909.3" y="391.2" width="56.4" height="113.4" fill="#617ca0"/>
<rect x="909.3" y="447.0" width="56.4" height="57.6" fill="#627a9d"/>
<rect x="909.3" y="391.2" width="56.4" height="113.4" fill="none" stroke="#d4d4d4" stroke-width="1.2"/>
<text x="914.6" y="519.0" font-size="11.6" textLength="45.8" lengthAdjust="spacingAndGlyphs" fill="#f0f0f0">Blue Sky</text>
</g>
<g transform="translate(376.8,416) rotate(-90)"><text x="-17.3" y="0.0" font-size="11.5" textLength="34.5" lengthAdjust="spacingAndGlyphs" fill="#f0f0f0">Actual</text></g>
<g transform="translate(376.8,480) rotate(-90)"><text x="-17.3" y="0.0" font-size="11.5" textLength="34.5" lengthAdjust="spacingAndGlyphs" fill="#f0f0f0">Target</text></g>
<text x="57.9" y="586.6" font-size="27" textLength="210.0" lengthAdjust="spacingAndGlyphs" fill="#f0f0ec">Avg dE2000: 1.8</text>
<text x="45.7" y="626.2" font-size="27" textLength="234.6" lengthAdjust="spacingAndGlyphs" fill="#f0f0ec">Max dE2000: 4.18</text>
<text x="15.2" y="671.9" font-size="26" textLength="211.8" lengthAdjust="spacingAndGlyphs" fill="#f0f0ec">Current Reading</text>
<text x="15.2" y="707.5" font-size="22" textLength="99.1" lengthAdjust="spacingAndGlyphs" fill="#f0f0ec">x: 0.4375</text>
<text x="167.0" y="707.5" font-size="22" textLength="99.6" lengthAdjust="spacingAndGlyphs" fill="#f0f0ec">y: 0.3789</text>
<text x="15.2" y="746.5" font-size="22" textLength="93.0" lengthAdjust="spacingAndGlyphs" fill="#f0f0ec">fL: 39.78</text>
<text x="15.2" y="779.1" font-size="22" textLength="153.9" lengthAdjust="spacingAndGlyphs" fill="#f0f0ec">cd/m²: 136.29</text>
<rect x="312.8" y="571.3" width="1304.1" height="11.9" fill="url(#hd)"/>
<rect x="312.8" y="583.2" width="1304.1" height="11.6" fill="#191919"/>
<rect x="312.8" y="571.3" width="16.2" height="23.5" fill="#000"/>
<rect x="1616.9" y="571.3" width="3.0" height="220.0" fill="#1e1e1e"/>
<clipPath id="tc"><rect x="312.8" y="571.3" width="1304.1000000000001" height="220"/></clipPath><g clip-path="url(#tc)">
<text x="462.4" y="588.4" font-size="13.0" textLength="42.5" lengthAdjust="spacingAndGlyphs" fill="#f4f4f0">White</text>
<text x="549.1" y="588.4" font-size="13.0" textLength="59.2" lengthAdjust="spacingAndGlyphs" fill="#f4f4f0">Gray 80</text>
<text x="635.9" y="588.4" font-size="13.0" textLength="59.2" lengthAdjust="spacingAndGlyphs" fill="#f4f4f0">Gray 65</text>
<text x="722.9" y="588.4" font-size="13.0" textLength="59.2" lengthAdjust="spacingAndGlyphs" fill="#f4f4f0">Gray 50</text>
<text x="810.2" y="588.4" font-size="13.0" textLength="59.2" lengthAdjust="spacingAndGlyphs" fill="#f4f4f0">Gray 35</text>
<text x="897.3" y="588.4" font-size="13.0" textLength="40.7" lengthAdjust="spacingAndGlyphs" fill="#f4f4f0">Black</text>
<text x="974.1" y="588.4" font-size="13.0" textLength="72.1" lengthAdjust="spacingAndGlyphs" fill="#f4f4f0">Dark Skin</text>
<text x="1055.6" y="588.4" font-size="13.0" textLength="73.1" lengthAdjust="spacingAndGlyphs" fill="#f4f4f0">Light Skin</text>
<text x="1142.6" y="588.4" font-size="13.0" textLength="65.7" lengthAdjust="spacingAndGlyphs" fill="#f4f4f0">Blue Sky</text>
<text x="1219.0" y="588.4" font-size="13.0" textLength="54.6" lengthAdjust="spacingAndGlyphs" fill="#f4f4f0">Foliage</text>
<text x="1295.8" y="588.4" font-size="13.0" textLength="87.9" lengthAdjust="spacingAndGlyphs" fill="#f4f4f0">Blue Flower</text>
<text x="1396.3" y="588.4" font-size="13.0" textLength="96.2" lengthAdjust="spacingAndGlyphs" fill="#f4f4f0">Bluish Green</text>
<text x="1503.7" y="588.4" font-size="13.0" textLength="55.5" lengthAdjust="spacingAndGlyphs" fill="#f4f4f0">Orange</text>
<text x="1590.8" y="588.4" font-size="13.0" textLength="98.0" lengthAdjust="spacingAndGlyphs" fill="#f4f4f0">Purplish Blue</text>
<rect x="329.0" y="594.8" width="1287.9" height="22.8" fill="#444444"/>
<rect x="312.8" y="594.8" width="16.2" height="22.0" fill="url(#rh)"/>
<text x="334.0" y="611.3" font-size="13.0" textLength="67.1" lengthAdjust="spacingAndGlyphs" fill="#f4f4f0">x: CIE31</text>
<text x="462.4" y="611.3" font-size="13.0" textLength="55.1" lengthAdjust="spacingAndGlyphs" fill="#f4f4f0">0.3081</text>
<text x="549.1" y="611.3" font-size="13.0" textLength="55.1" lengthAdjust="spacingAndGlyphs" fill="#f4f4f0">0.3077</text>
<text x="635.9" y="611.3" font-size="13.0" textLength="55.1" lengthAdjust="spacingAndGlyphs" fill="#f4f4f0">0.3076</text>
<text x="722.9" y="611.3" font-size="13.0" textLength="55.1" lengthAdjust="spacingAndGlyphs" fill="#f4f4f0">0.3074</text>
<text x="810.2" y="611.3" font-size="13.0" textLength="55.1" lengthAdjust="spacingAndGlyphs" fill="#f4f4f0">0.3074</text>
<text x="897.3" y="611.3" font-size="13.0" textLength="55.1" lengthAdjust="spacingAndGlyphs" fill="#f4f4f0">0.2955</text>
<text x="974.1" y="611.3" font-size="13.0" textLength="55.1" lengthAdjust="spacingAndGlyphs" fill="#f4f4f0">0.3927</text>
<text x="1055.6" y="611.3" font-size="13.0" textLength="55.1" lengthAdjust="spacingAndGlyphs" fill="#f4f4f0">0.3722</text>
<text x="1142.6" y="611.3" font-size="13.0" textLength="55.1" lengthAdjust="spacingAndGlyphs" fill="#f4f4f0">0.2479</text>
<text x="1219.0" y="611.3" font-size="13.0" textLength="55.1" lengthAdjust="spacingAndGlyphs" fill="#f4f4f0">0.3340</text>
<text x="1295.8" y="611.3" font-size="13.0" textLength="55.1" lengthAdjust="spacingAndGlyphs" fill="#f4f4f0">0.2647</text>
<text x="1396.3" y="611.3" font-size="13.0" textLength="55.1" lengthAdjust="spacingAndGlyphs" fill="#f4f4f0">0.2605</text>
<text x="1503.7" y="611.3" font-size="13.0" textLength="55.1" lengthAdjust="spacingAndGlyphs" fill="#f4f4f0">0.5019</text>
<text x="1590.8" y="611.3" font-size="13.0" textLength="53.7" lengthAdjust="spacingAndGlyphs" fill="#f4f4f0">0.2112</text>
<rect x="329.0" y="617.4" width="1287.9" height="22.8" fill="#777777"/>
<rect x="312.8" y="617.4" width="16.2" height="22.0" fill="url(#rh)"/>
<text x="334.0" y="633.9" font-size="13.0" textLength="67.1" lengthAdjust="spacingAndGlyphs" fill="#f4f4f0">y: CIE31</text>
<text x="462.4" y="633.9" font-size="13.0" textLength="53.7" lengthAdjust="spacingAndGlyphs" fill="#f4f4f0">0.3211</text>
<text x="549.1" y="633.9" font-size="13.0" textLength="55.1" lengthAdjust="spacingAndGlyphs" fill="#f4f4f0">0.3205</text>
<text x="635.9" y="633.9" font-size="13.0" textLength="55.1" lengthAdjust="spacingAndGlyphs" fill="#f4f4f0">0.3203</text>
<text x="722.9" y="633.9" font-size="13.0" textLength="55.1" lengthAdjust="spacingAndGlyphs" fill="#f4f4f0">0.3201</text>
<text x="810.2" y="633.9" font-size="13.0" textLength="55.1" lengthAdjust="spacingAndGlyphs" fill="#f4f4f0">0.3201</text>
<text x="897.3" y="633.9" font-size="13.0" textLength="55.1" lengthAdjust="spacingAndGlyphs" fill="#f4f4f0">0.3142</text>
<text x="974.1" y="633.9" font-size="13.0" textLength="55.1" lengthAdjust="spacingAndGlyphs" fill="#f4f4f0">0.3601</text>
<text x="1055.6" y="633.9" font-size="13.0" textLength="55.1" lengthAdjust="spacingAndGlyphs" fill="#f4f4f0">0.3498</text>
<text x="1142.6" y="633.9" font-size="13.0" textLength="55.1" lengthAdjust="spacingAndGlyphs" fill="#f4f4f0">0.2586</text>
<text x="1219.0" y="633.9" font-size="13.0" textLength="55.1" lengthAdjust="spacingAndGlyphs" fill="#f4f4f0">0.4207</text>
<text x="1295.8" y="633.9" font-size="13.0" textLength="55.1" lengthAdjust="spacingAndGlyphs" fill="#f4f4f0">0.2457</text>
<text x="1396.3" y="633.9" font-size="13.0" textLength="55.1" lengthAdjust="spacingAndGlyphs" fill="#f4f4f0">0.3508</text>
<text x="1503.7" y="633.9" font-size="13.0" textLength="55.1" lengthAdjust="spacingAndGlyphs" fill="#f4f4f0">0.4044</text>
<text x="1590.8" y="633.9" font-size="13.0" textLength="55.1" lengthAdjust="spacingAndGlyphs" fill="#f4f4f0">0.1846</text>
<rect x="329.0" y="640.0" width="1287.9" height="22.8" fill="#444444"/>
<rect x="312.8" y="640.0" width="16.2" height="22.0" fill="url(#rh)"/>
<text x="334.0" y="656.5" font-size="13.0" textLength="11.7" lengthAdjust="spacingAndGlyphs" fill="#f4f4f0">Y</text>
<text x="462.4" y="656.5" font-size="13.0" textLength="75.1" lengthAdjust="spacingAndGlyphs" fill="#f4f4f0">392.6468</text>
<text x="549.1" y="656.5" font-size="13.0" textLength="73.8" lengthAdjust="spacingAndGlyphs" fill="#f4f4f0">311.9453</text>
<text x="635.9" y="656.5" font-size="13.0" textLength="75.1" lengthAdjust="spacingAndGlyphs" fill="#f4f4f0">252.2815</text>
<text x="722.9" y="656.5" font-size="13.0" textLength="75.1" lengthAdjust="spacingAndGlyphs" fill="#f4f4f0">197.4446</text>
<text x="810.2" y="656.5" font-size="13.0" textLength="75.1" lengthAdjust="spacingAndGlyphs" fill="#f4f4f0">136.3632</text>
<text x="897.3" y="656.5" font-size="13.0" textLength="55.1" lengthAdjust="spacingAndGlyphs" fill="#f4f4f0">0.2634</text>
<text x="974.1" y="656.5" font-size="13.0" textLength="65.1" lengthAdjust="spacingAndGlyphs" fill="#f4f4f0">41.7092</text>
<text x="1055.6" y="656.5" font-size="13.0" textLength="75.1" lengthAdjust="spacingAndGlyphs" fill="#f4f4f0">140.6362</text>
<text x="1142.6" y="656.5" font-size="13.0" textLength="65.1" lengthAdjust="spacingAndGlyphs" fill="#f4f4f0">76.7716</text>
<text x="1219.0" y="656.5" font-size="13.0" textLength="65.1" lengthAdjust="spacingAndGlyphs" fill="#f4f4f0">53.8234</text>
<text x="1295.8" y="656.5" font-size="13.0" textLength="65.1" lengthAdjust="spacingAndGlyphs" fill="#f4f4f0">94.5604</text>
<text x="1396.3" y="656.5" font-size="13.0" textLength="75.1" lengthAdjust="spacingAndGlyphs" fill="#f4f4f0">167.9909</text>
<text x="1503.7" y="656.5" font-size="13.0" textLength="73.8" lengthAdjust="spacingAndGlyphs" fill="#f4f4f0">113.0765</text>
<text x="1590.8" y="656.5" font-size="13.0" textLength="65.1" lengthAdjust="spacingAndGlyphs" fill="#f4f4f0">48.7215</text>
<rect x="329.0" y="662.6" width="1287.9" height="22.8" fill="#777777"/>
<rect x="312.8" y="662.6" width="16.2" height="22.0" fill="url(#rh)"/>
<text x="334.0" y="679.1" font-size="13.0" textLength="115.7" lengthAdjust="spacingAndGlyphs" fill="#f4f4f0">Target x:CIE31</text>
<text x="462.4" y="679.1" font-size="13.0" textLength="55.1" lengthAdjust="spacingAndGlyphs" fill="#f4f4f0">0.3127</text>
<text x="549.1" y="679.1" font-size="13.0" textLength="55.1" lengthAdjust="spacingAndGlyphs" fill="#f4f4f0">0.3127</text>
<text x="635.9" y="679.1" font-size="13.0" textLength="55.1" lengthAdjust="spacingAndGlyphs" fill="#f4f4f0">0.3127</text>
<text x="722.9" y="679.1" font-size="13.0" textLength="55.1" lengthAdjust="spacingAndGlyphs" fill="#f4f4f0">0.3127</text>
<text x="810.2" y="679.1" font-size="13.0" textLength="55.1" lengthAdjust="spacingAndGlyphs" fill="#f4f4f0">0.3127</text>
<text x="897.3" y="679.1" font-size="13.0" textLength="55.1" lengthAdjust="spacingAndGlyphs" fill="#f4f4f0">0.3127</text>
<text x="974.1" y="679.1" font-size="13.0" textLength="55.1" lengthAdjust="spacingAndGlyphs" fill="#f4f4f0">0.4003</text>
<text x="1055.6" y="679.1" font-size="13.0" textLength="55.1" lengthAdjust="spacingAndGlyphs" fill="#f4f4f0">0.3795</text>
<text x="1142.6" y="679.1" font-size="13.0" textLength="55.1" lengthAdjust="spacingAndGlyphs" fill="#f4f4f0">0.2496</text>
<text x="1219.0" y="679.1" font-size="13.0" textLength="55.1" lengthAdjust="spacingAndGlyphs" fill="#f4f4f0">0.3395</text>
<text x="1295.8" y="679.1" font-size="13.0" textLength="55.1" lengthAdjust="spacingAndGlyphs" fill="#f4f4f0">0.2681</text>
<text x="1396.3" y="679.1" font-size="13.0" textLength="55.1" lengthAdjust="spacingAndGlyphs" fill="#f4f4f0">0.2626</text>
<text x="1503.7" y="679.1" font-size="13.0" textLength="55.1" lengthAdjust="spacingAndGlyphs" fill="#f4f4f0">0.5122</text>
<text x="1590.8" y="679.1" font-size="13.0" textLength="55.1" lengthAdjust="spacingAndGlyphs" fill="#f4f4f0">0.2138</text>
<rect x="329.0" y="685.2" width="1287.9" height="22.8" fill="#444444"/>
<rect x="312.8" y="685.2" width="16.2" height="22.0" fill="url(#rh)"/>
<text x="334.0" y="701.7" font-size="13.0" textLength="115.7" lengthAdjust="spacingAndGlyphs" fill="#f4f4f0">Target y:CIE31</text>
<text x="462.4" y="701.7" font-size="13.0" textLength="55.1" lengthAdjust="spacingAndGlyphs" fill="#f4f4f0">0.3290</text>
<text x="549.1" y="701.7" font-size="13.0" textLength="55.1" lengthAdjust="spacingAndGlyphs" fill="#f4f4f0">0.3290</text>
<text x="635.9" y="701.7" font-size="13.0" textLength="55.1" lengthAdjust="spacingAndGlyphs" fill="#f4f4f0">0.3290</text>
<text x="722.9" y="701.7" font-size="13.0" textLength="55.1" lengthAdjust="spacingAndGlyphs" fill="#f4f4f0">0.3290</text>
<text x="810.2" y="701.7" font-size="13.0" textLength="55.1" lengthAdjust="spacingAndGlyphs" fill="#f4f4f0">0.3290</text>
<text x="897.3" y="701.7" font-size="13.0" textLength="55.1" lengthAdjust="spacingAndGlyphs" fill="#f4f4f0">0.3290</text>
<text x="974.1" y="701.7" font-size="13.0" textLength="55.1" lengthAdjust="spacingAndGlyphs" fill="#f4f4f0">0.3642</text>
<text x="1055.6" y="701.7" font-size="13.0" textLength="55.1" lengthAdjust="spacingAndGlyphs" fill="#f4f4f0">0.3562</text>
<text x="1142.6" y="701.7" font-size="13.0" textLength="55.1" lengthAdjust="spacingAndGlyphs" fill="#f4f4f0">0.2656</text>
<text x="1219.0" y="701.7" font-size="13.0" textLength="55.1" lengthAdjust="spacingAndGlyphs" fill="#f4f4f0">0.4271</text>
<text x="1295.8" y="701.7" font-size="13.0" textLength="55.1" lengthAdjust="spacingAndGlyphs" fill="#f4f4f0">0.2525</text>
<text x="1396.3" y="701.7" font-size="13.0" textLength="55.1" lengthAdjust="spacingAndGlyphs" fill="#f4f4f0">0.3616</text>
<text x="1503.7" y="701.7" font-size="13.0" textLength="55.1" lengthAdjust="spacingAndGlyphs" fill="#f4f4f0">0.4063</text>
<text x="1590.8" y="701.7" font-size="13.0" textLength="55.1" lengthAdjust="spacingAndGlyphs" fill="#f4f4f0">0.1904</text>
<rect x="329.0" y="707.8" width="1287.9" height="22.8" fill="#777777"/>
<rect x="312.8" y="707.8" width="16.2" height="22.0" fill="url(#rh)"/>
<text x="334.0" y="724.3" font-size="13.0" textLength="64.8" lengthAdjust="spacingAndGlyphs" fill="#f4f4f0">Target Y</text>
<text x="462.4" y="724.3" font-size="13.0" textLength="75.1" lengthAdjust="spacingAndGlyphs" fill="#f4f4f0">392.6468</text>
<text x="549.1" y="724.3" font-size="13.0" textLength="75.1" lengthAdjust="spacingAndGlyphs" fill="#f4f4f0">310.7006</text>
<text x="635.9" y="724.3" font-size="13.0" textLength="75.1" lengthAdjust="spacingAndGlyphs" fill="#f4f4f0">250.3504</text>
<text x="722.9" y="724.3" font-size="13.0" textLength="75.1" lengthAdjust="spacingAndGlyphs" fill="#f4f4f0">192.7978</text>
<text x="810.2" y="724.3" font-size="13.0" textLength="75.1" lengthAdjust="spacingAndGlyphs" fill="#f4f4f0">134.2516</text>
<text x="897.3" y="724.3" font-size="13.0" textLength="55.1" lengthAdjust="spacingAndGlyphs" fill="#f4f4f0">0.0000</text>
<text x="974.1" y="724.3" font-size="13.0" textLength="65.1" lengthAdjust="spacingAndGlyphs" fill="#f4f4f0">39.5525</text>
<text x="1055.6" y="724.3" font-size="13.0" textLength="75.1" lengthAdjust="spacingAndGlyphs" fill="#f4f4f0">137.0147</text>
<text x="1142.6" y="724.3" font-size="13.0" textLength="65.1" lengthAdjust="spacingAndGlyphs" fill="#f4f4f0">73.4186</text>
<text x="1219.0" y="724.3" font-size="13.0" textLength="65.1" lengthAdjust="spacingAndGlyphs" fill="#f4f4f0">51.1715</text>
<text x="1295.8" y="724.3" font-size="13.0" textLength="65.1" lengthAdjust="spacingAndGlyphs" fill="#f4f4f0">91.5593</text>
<text x="1396.3" y="724.3" font-size="13.0" textLength="75.1" lengthAdjust="spacingAndGlyphs" fill="#f4f4f0">164.4130</text>
<text x="1503.7" y="724.3" font-size="13.0" textLength="72.4" lengthAdjust="spacingAndGlyphs" fill="#f4f4f0">111.3068</text>
<text x="1590.8" y="724.3" font-size="13.0" textLength="65.1" lengthAdjust="spacingAndGlyphs" fill="#f4f4f0">46.5120</text>
<rect x="329.0" y="730.4" width="1287.9" height="22.8" fill="#444444"/>
<rect x="312.8" y="730.4" width="16.2" height="22.0" fill="url(#rh)"/>
<text x="334.0" y="746.9" font-size="13.0" textLength="67.1" lengthAdjust="spacingAndGlyphs" fill="#f4f4f0">ΔE 2000</text>
<text x="462.4" y="746.9" font-size="13.0" textLength="55.1" lengthAdjust="spacingAndGlyphs" fill="#f4f4f0">4.1768</text>
<text x="549.1" y="746.9" font-size="13.0" textLength="55.1" lengthAdjust="spacingAndGlyphs" fill="#f4f4f0">4.1727</text>
<text x="635.9" y="746.9" font-size="13.0" textLength="55.1" lengthAdjust="spacingAndGlyphs" fill="#f4f4f0">3.9734</text>
<text x="722.9" y="746.9" font-size="13.0" textLength="55.1" lengthAdjust="spacingAndGlyphs" fill="#f4f4f0">3.8202</text>
<text x="810.2" y="746.9" font-size="13.0" textLength="55.1" lengthAdjust="spacingAndGlyphs" fill="#f4f4f0">3.3959</text>
<text x="897.3" y="746.9" font-size="13.0" textLength="55.1" lengthAdjust="spacingAndGlyphs" fill="#f4f4f0">0.3795</text>
<text x="974.1" y="746.9" font-size="13.0" textLength="55.1" lengthAdjust="spacingAndGlyphs" fill="#f4f4f0">1.1757</text>
<text x="1055.6" y="746.9" font-size="13.0" textLength="55.1" lengthAdjust="spacingAndGlyphs" fill="#f4f4f0">1.9450</text>
<text x="1142.6" y="746.9" font-size="13.0" textLength="55.1" lengthAdjust="spacingAndGlyphs" fill="#f4f4f0">1.8884</text>
<text x="1219.0" y="746.9" font-size="13.0" textLength="55.1" lengthAdjust="spacingAndGlyphs" fill="#f4f4f0">1.2970</text>
<text x="1295.8" y="746.9" font-size="13.0" textLength="55.1" lengthAdjust="spacingAndGlyphs" fill="#f4f4f0">1.4672</text>
<text x="1396.3" y="746.9" font-size="13.0" textLength="55.1" lengthAdjust="spacingAndGlyphs" fill="#f4f4f0">2.3946</text>
<text x="1503.7" y="746.9" font-size="13.0" textLength="55.1" lengthAdjust="spacingAndGlyphs" fill="#f4f4f0">1.0590</text>
<text x="1590.8" y="746.9" font-size="13.0" textLength="55.1" lengthAdjust="spacingAndGlyphs" fill="#f4f4f0">1.5012</text>
<rect x="329.0" y="753.0" width="1287.9" height="22.8" fill="#777777"/>
<rect x="312.8" y="753.0" width="16.2" height="22.0" fill="url(#rh)"/>
<text x="334.0" y="769.5" font-size="13.0" textLength="48.6" lengthAdjust="spacingAndGlyphs" fill="#f4f4f0">dEITP</text>
<text x="462.4" y="769.5" font-size="13.0" textLength="55.1" lengthAdjust="spacingAndGlyphs" fill="#f4f4f0">3.4718</text>
<text x="549.1" y="769.5" font-size="13.0" textLength="55.1" lengthAdjust="spacingAndGlyphs" fill="#f4f4f0">3.7533</text>
<text x="635.9" y="769.5" font-size="13.0" textLength="55.1" lengthAdjust="spacingAndGlyphs" fill="#f4f4f0">3.8389</text>
<text x="722.9" y="769.5" font-size="13.0" textLength="55.1" lengthAdjust="spacingAndGlyphs" fill="#f4f4f0">4.3100</text>
<text x="810.2" y="769.5" font-size="13.0" textLength="55.1" lengthAdjust="spacingAndGlyphs" fill="#f4f4f0">3.9942</text>
<text x="897.3" y="769.5" font-size="13.0" textLength="65.1" lengthAdjust="spacingAndGlyphs" fill="#f4f4f0">66.5937</text>
<text x="974.1" y="769.5" font-size="13.0" textLength="55.1" lengthAdjust="spacingAndGlyphs" fill="#f4f4f0">4.9910</text>
<text x="1055.6" y="769.5" font-size="13.0" textLength="55.1" lengthAdjust="spacingAndGlyphs" fill="#f4f4f0">4.5406</text>
<text x="1142.6" y="769.5" font-size="13.0" textLength="55.1" lengthAdjust="spacingAndGlyphs" fill="#f4f4f0">4.2852</text>
<text x="1219.0" y="769.5" font-size="13.0" textLength="55.1" lengthAdjust="spacingAndGlyphs" fill="#f4f4f0">4.6932</text>
<text x="1295.8" y="769.5" font-size="13.0" textLength="55.1" lengthAdjust="spacingAndGlyphs" fill="#f4f4f0">3.8020</text>
<text x="1396.3" y="769.5" font-size="13.0" textLength="55.1" lengthAdjust="spacingAndGlyphs" fill="#f4f4f0">4.1329</text>
<text x="1503.7" y="769.5" font-size="13.0" textLength="55.1" lengthAdjust="spacingAndGlyphs" fill="#f4f4f0">6.7176</text>
<text x="1590.8" y="769.5" font-size="13.0" textLength="55.1" lengthAdjust="spacingAndGlyphs" fill="#f4f4f0">5.0934</text>
</g>
<rect x="329.0" y="775.6" width="1287.9" height="15.4" fill="#585858"/>
<rect x="330.5" y="777.6" width="17.0" height="13.0" fill="#8a8a8a" rx="2"/>
<path d="M343.5 779.6v9l-7-4.5z" fill="#3a3a3a"/>
<rect x="1599.0" y="777.6" width="17.0" height="13.0" fill="#8a8a8a" rx="2"/>
<path d="M1604 779.6v9l7-4.5z" fill="#3a3a3a"/>
<rect x="350.0" y="778.1" width="373.0" height="12.0" fill="#444444" rx="6"/>
<rect x="945.5" y="15.4" width="674.5" height="540.8" fill="#1f2020"/>
<rect x="952.0" y="21.8" width="660.0" height="527.5" fill="#323232"/>
<rect x="988.5" y="44.5" width="620.0" height="477.5" fill="#242424"/>
<text x="1240.0" y="39.2" font-size="13.2" textLength="83.9" lengthAdjust="spacingAndGlyphs" fill="#d2d2d2">CIE 1976 u'v'</text>
</svg>
<div id="cie"><i style="left:26px;top:10.0px;width:67px;background:linear-gradient(90deg,#00ff00 0px,#00ff00 8px,#00ff00 16px,#00ff00 24px,#00ff00 32px,#00ff00 40px,#00ff00 48px,#00ff00 56px,#00ff00 64px,#00ff00 67px)"></i><i style="left:18px;top:12.0px;width:98px;background:linear-gradient(90deg,#00ff00 0px,#00ff00 8px,#00ff00 16px,#00ff00 24px,#00ff00 32px,#00ff00 40px,#00ff00 48px,#00ff00 56px,#00ff00 64px,#00ff00 72px,#00ff00 80px,#00ff00 88px,#00ff00 96px,#00ff00 98px)"></i><i style="left:14px;top:14.0px;width:122px;background:linear-gradient(90deg,#00ff00 0px,#00ff00 8px,#00ff00 16px,#00ff00 24px,#00ff00 32px,#00ff00 40px,#00ff00 48px,#00ff00 56px,#00ff00 64px,#00ff00 72px,#00ff00 80px,#00ff00 88px,#00ff00 96px,#00ff00 104px,#00ff00 112px,#0cff00 120px,#10ff00 122px)"></i><i style="left:11px;top:16.0px;width:144px;background:linear-gradient(90deg,#00ff00 0px,#00ff00 8px,#00ff00 16px,#00ff00 24px,#00ff00 32px,#00ff00 40px,#00ff00 48px,#00ff00 56px,#00ff00 64px,#00ff00 72px,#00ff00 80px,#00ff00 88px,#00ff00 96px,#00ff00 104px,#00ff00 112px,#06ff00 120px,#15ff00 128px,#27ff00 136px,#3aff00 144px)"></i><i style="left:8px;top:18.0px;width:165px;background:linear-gradient(90deg,#00ff00 0px,#00ff00 8px,#00ff00 16px,#00ff00 24px,#00ff00 32px,#00ff00 40px,#00ff00 48px,#00ff00 56px,#00ff00 64px,#00ff00 72px,#00ff00 80px,#00ff00 88px,#00ff00 96px,#00ff00 104px,#00ff00 112px,#01ff00 120px,#0fff00 128px,#1fff00 136px,#32ff00 144px,#47ff00 152px,#5dff00 160px,#6cff00 165px)"></i><i style="left:6px;top:20.0px;width:185px;background:linear-gradient(90deg,#00ff02 0px,#00ff01 8px,#00ff00 16px,#00ff00 24px,#00ff00 32px,#00ff00 40px,#00ff00 48px,#00ff00 56px,#00ff00 64px,#00ff00 72px,#00ff00 80px,#00ff00 88px,#00ff00 96px,#00ff00 104px,#00ff00 112px,#00ff00 120px,#0aff00 128px,#1aff00 136px,#2dff00 144px,#41ff00 152px,#57ff00 160px,#6fff00 168px,#8aff00 176px,#a6ff00 184px,#a9ff00 185px)"></i><i style="left:5px;top:22.0px;width:204px;background:linear-gradient(90deg,#00ff04 0px,#00ff03 8px,#00ff02 16px,#00ff02 24px,#00ff01 32px,#00ff00 40px,#00ff00 48px,#00ff00 56px,#00ff00 64px,#00ff00 72px,#00ff00 80px,#00ff00 88px,#00ff00 96px,#00ff00 104px,#00ff00 112px,#00ff00 120px,#08ff00 128px,#18ff00 136px,#2aff00 144px,#3eff00 152px,#54ff00 160px,#6cff00 168px,#86ff00 176px,#a2ff00 184px,#c0ff00 192px,#e1ff00 200px,#f2ff00 204px)"></i><i style="left:4px;top:24.0px;width:222px;background:linear-gradient(90deg,#00ff06 0px,#00ff05 8px,#00ff05 16px,#00ff04 24px,#00ff03 32px,#00ff02 40px,#00ff02 48px,#00ff01 56px,#00ff00 64px,#00ff00 72px,#00ff00 80px,#00ff00 88px,#00ff00 96px,#00ff00 104px,#00ff00 112px,#00ff00 120px,#06ff00 128px,#15ff00 136px,#27ff00 144px,#3bff00 152px,#51ff00 160px,#69ff00 168px,#83ff00 176px,#9fff00 184px,#bdff00 192px,#ddff00 200px,#fffe00 208px,#ffdd00 216px,#ffc900 222px)"></i><i style="left:3px;top:26.0px;width:240px;background:linear-gradient(90deg,#00ff09 0px,#00ff08 8px,#00ff07 16px,#00ff06 24px,#00ff06 32px,#00ff05 40px,#00ff04 48px,#00ff03 56px,#00ff02 64px,#00ff01 72px,#00ff01 80px,#00ff00 88px,#00ff00 96px,#00ff00 104px,#00ff00 112px,#00ff00 120px,#04ff00 128px,#12ff00 136px,#24ff00 144px,#38ff00 152px,#4eff00 160px,#66ff00 168px,#7fff00 176px,#9bff00 184px,#b9ff00 192px,#daff00 200px,#fdff00 208px,#ffe000 216px,#ffc500 224px,#ffae00 232px,#ff9a00 240px)"></i><i style="left:2px;top:28.0px;width:259px;background:linear-gradient(90deg,#00ff0b 0px,#00ff0b 8px,#00ff0a 16px,#00ff09 24px,#00ff08 32px,#00ff07 40px,#00ff07 48px,#00ff06 56px,#00ff05 64px,#00ff04 72px,#00ff03 80px,#00ff02 88px,#00ff01 96px,#00ff01 104px,#00ff00 112px,#00ff00 120px,#02ff00 128px,#10ff00 136px,#21ff00 144px,#35ff00 152px,#4bff00 160px,#62ff00 168px,#7cff00 176px,#98ff00 184px,#b6ff00 192px,#d6ff00 200px,#f9ff00 208px,#ffe300 216px,#ffc700 224px,#ffaf00 232px,#ff9c00 240px,#ff8b00 248px,#ff7c00 256px,#ff7700 259px)"></i><i style="left:1px;top:30.0px;width:277px;background:linear-gradient(90deg,#00ff0e 0px,#00ff0d 8px,#00ff0d 16px,#00ff0c 24px,#00ff0b 32px,#00ff0a 40px,#00ff09 48px,#00ff09 56px,#00ff08 64px,#00ff07 72px,#00ff06 80px,#00ff05 88px,#00ff04 96px,#00ff03 104px,#00ff02 112px,#00ff01 120px,#00ff00 128px,#0dff00 136px,#1eff00 144px,#32ff00 152px,#47ff00 160px,#5fff00 168px,#79ff00 176px,#94ff00 184px,#b2ff00 192px,#d2ff00 200px,#f5ff00 208px,#ffe600 216px,#ffc900 224px,#ffb100 232px,#ff9d00 240px,#ff8c00 248px,#ff7d00 256px,#ff7000 264px,#ff6500 272px,#ff5e00 277px)"></i><i style="left:1px;top:32.0px;width:295px;background:linear-gradient(90deg,#00ff11 0px,#00ff10 8px,#00ff0f 16px,#00ff0f 24px,#00ff0e 32px,#00ff0d 40px,#00ff0c 48px,#00ff0b 56px,#00ff0b 64px,#00ff0a 72px,#00ff09 80px,#00ff08 88px,#00ff07 96px,#00ff06 104px,#00ff05 112px,#00ff04 120px,#00ff03 128px,#0dff02 136px,#1eff01 144px,#31ff00 152px,#47ff00 160px,#5fff00 168px,#78ff00 176px,#94ff00 184px,#b2ff00 192px,#d3ff00 200px,#f6ff00 208px,#ffe500 216px,#ffc800 224px,#ffb000 232px,#ff9c00 240px,#ff8b00 248px,#ff7c00 256px,#ff6f00 264px,#ff6400 272px,#ff5a00 280px,#ff5100 288px,#ff4a00 295px)"></i><i style="left:0px;top:34.0px;width:313px;background:linear-gradient(90deg,#00ff14 0px,#00ff13 8px,#00ff12 16px,#00ff12 24px,#00ff11 32px,#00ff10 40px,#00ff0f 48px,#00ff0f 56px,#00ff0e 64px,#00ff0d 72px,#00ff0c 80px,#00ff0b 88px,#00ff0a 96px,#00ff09 104px,#00ff08 112px,#00ff07 120px,#00ff06 128px,#0aff05 136px,#1bff04 144px,#2eff03 152px,#44ff02 160px,#5bff01 168px,#75ff00 176px,#91ff00 184px,#afff00 192px,#cfff00 200px,#f2ff00 208px,#ffe800 216px,#ffcb00 224px,#ffb200 232px,#ff9e00 240px,#ff8c00 248px,#ff7d00 256px,#ff7000 264px,#ff6500 272px,#ff5b00 280px,#ff5200 288px,#ff4a00 296px,#ff4200 304px,#ff3c00 312px,#ff3b00 313px)"></i><i style="left:0px;top:36.0px;width:330px;background:linear-gradient(90deg,#00ff17 0px,#00ff16 8px,#00ff15 16px,#00ff15 24px,#00ff14 32px,#00ff13 40px,#00ff12 48px,#00ff12 56px,#00ff11 64px,#00ff10 72px,#00ff0f 80px,#00ff0e 88px,#00ff0e 96px,#00ff0d 104px,#00ff0c 112px,#00ff0b 120px,#00ff0a 128px,#0aff09 136px,#1bff08 144px,#2eff06 152px,#44ff05 160px,#5bff04 168px,#75ff03 176px,#91ff02 184px,#afff01 192px,#d0ff00 200px,#f3ff00 208px,#ffe700 216px,#ffca00 224px,#ffb100 232px,#ff9d00 240px,#ff8b00 248px,#ff7c00 256px,#ff6f00 264px,#ff6400 272px,#ff5a00 280px,#ff5100 288px,#ff4900 296px,#ff4200 304px,#ff3b00 312px,#ff3600 320px,#ff3000 328px,#ff2f00 330px)"></i><i style="left:0px;top:38.0px;width:348px;background:linear-gradient(90deg,#00ff1a 0px,#00ff19 8px,#00ff18 16px,#00ff18 24px,#00ff17 32px,#00ff16 40px,#00ff16 48px,#00ff15 56px,#00ff14 64px,#00ff13 72px,#00ff13 80px,#00ff12 88px,#00ff11 96px,#00ff10 104px,#00ff0f 112px,#00ff0e 120px,#00ff0d 128px,#09ff0c 136px,#1aff0b 144px,#2dff0a 152px,#43ff09 160px,#5bff08 168px,#75ff07 176px,#91ff05 184px,#afff04 192px,#d0ff03 200px,#f4ff02 208px,#ffe600 216px,#ffc900 224px,#ffb000 232px,#ff9c00 240px,#ff8a00 248px,#ff7b00 256px,#ff6e00 264px,#ff6300 272px,#ff5900 280px,#ff5000 288px,#ff4800 296px,#ff4100 304px,#ff3b00 312px,#ff3500 320px,#ff3000 328px,#ff2b00 336px,#ff2700 344px,#ff2500 348px)"></i><i style="left:0px;top:40.0px;width:365px;background:linear-gradient(90deg,#00ff1d 0px,#00ff1c 8px,#00ff1b 16px,#00ff1b 24px,#00ff1a 32px,#00ff1a 40px,#00ff19 48px,#00ff18 56px,#00ff18 64px,#00ff17 72px,#00ff16 80px,#00ff15 88px,#00ff14 96px,#00ff14 104px,#00ff13 112px,#00ff12 120px,#00ff11 128px,#09ff10 136px,#19ff0f 144px,#2dff0e 152px,#43ff0d 160px,#5bff0c 168px,#75ff0b 176px,#91ff09 184px,#b0ff08 192px,#d1ff07 200px,#f5ff05 208px,#ffe604 216px,#ffc802 224px,#ffb001 232px,#ff9b00 240px,#ff8a00 248px,#ff7b00 256px,#ff6e00 264px,#ff6200 272px,#ff5800 280px,#ff4f00 288px,#ff4800 296px,#ff4100 304px,#ff3a00 312px,#ff3400 320px,#ff2f00 328px,#ff2a00 336px,#ff2600 344px,#ff2200 352px,#ff1f00 360px,#ff1c00 365px)"></i><i style="left:0px;top:42.0px;width:382px;background:linear-gradient(90deg,#00ff20 0px,#00ff1f 8px,#00ff1f 16px,#00ff1e 24px,#00ff1e 32px,#00ff1d 40px,#00ff1c 48px,#00ff1c 56px,#00ff1b 64px,#00ff1a 72px,#00ff1a 80px,#00ff19 88px,#00ff18 96px,#00ff17 104px,#00ff17 112px,#00ff16 120px,#00ff15 128px,#08ff14 136px,#19ff13 144px,#2dff12 152px,#42ff11 160px,#5aff10 168px,#75ff0f 176px,#91ff0e 184px,#b0ff0c 192px,#d1ff0b 200px,#f5ff0a 208px,#ffe508 216px,#ffc705 224px,#ffaf04 232px,#ff9a02 240px,#ff8901 248px,#ff7a00 256px,#ff6d00 264px,#ff6200 272px,#ff5800 280px,#ff4f00 288px,#ff4700 296px,#ff4000 304px,#ff3a00 312px,#ff3400 320px,#ff2f00 328px,#ff2a00 336px,#ff2600 344px,#ff2200 352px,#ff1e00 360px,#ff1b00 368px,#ff1800 376px,#ff1600 382px)"></i><i style="left:0px;top:44.0px;width:400px;background:linear-gradient(90deg,#00ff23 0px,#00ff22 8px,#00ff22 16px,#00ff21 24px,#00ff21 32px,#00ff20 40px,#00ff20 48px,#00ff1f 56px,#00ff1f 64px,#00ff1e 72px,#00ff1d 80px,#00ff1d 88px,#00ff1c 96px,#00ff1b 104px,#00ff1a 112px,#00ff1a 120px,#00ff19 128px,#08ff18 136px,#18ff17 144px,#2cff16 152px,#42ff15 160px,#5aff14 168px,#75ff13 176px,#91ff12 184px,#b0ff11 192px,#d2ff10 200px,#f6ff0e 208px,#ffe40c 216px,#ffc609 224px,#ffae07 232px,#ff9905 240px,#ff8804 248px,#ff7903 256px,#ff6c02 264px,#ff6101 272px,#ff5700 280px,#ff4e00 288px,#ff4600 296px,#ff3f00 304px,#ff3900 312px,#ff3300 320px,#ff2e00 328px,#ff2900 336px,#ff2500 344px,#ff2100 352px,#ff1e00 360px,#ff1a00 368px,#ff1700 376px,#ff1500 384px,#ff1200 392px,#ff1000 400px)"></i><i style="left:0px;top:46.0px;width:417px;background:linear-gradient(90deg,#00ff26 0px,#00ff26 8px,#00ff25 16px,#00ff25 24px,#00ff24 32px,#00ff24 40px,#00ff23 48px,#00ff23 56px,#00ff22 64px,#00ff22 72px,#00ff21 80px,#00ff20 88px,#00ff20 96px,#00ff1f 104px,#00ff1e 112px,#00ff1e 120px,#00ff1d 128px,#07ff1c 136px,#18ff1b 144px,#2cff1b 152px,#42ff1a 160px,#5aff19 168px,#74ff18 176px,#91ff17 184px,#b1ff16 192px,#d2ff15 200px,#f7ff13 208px,#ffe310 216px,#ffc50d 224px,#ffad0b 232px,#ff9808 240px,#ff8707 248px,#ff7805 256px,#ff6b04 264px,#ff6003 272px,#ff5602 280px,#ff4d01 288px,#ff4500 296px,#ff3f00 304px,#ff3800 312px,#ff3300 320px,#ff2d00 328px,#ff2900 336px,#ff2500 344px,#ff2100 352px,#ff1d00 360px,#ff1a00 368px,#ff1700 376px,#ff1400 384px,#ff1200 392px,#ff0f00 400px,#ff0d00 408px,#ff0b00 416px,#ff0b00 417px)"></i><i style="left:0px;top:48.0px;width:435px;background:linear-gradient(90deg,#00ff29 0px,#00ff29 8px,#00ff29 16px,#00ff28 24px,#00ff28 32px,#00ff27 40px,#00ff27 48px,#00ff26 56px,#00ff26 64px,#00ff25 72px,#00ff25 80px,#00ff24 88px,#00ff24 96px,#00ff23 104px,#00ff23 112px,#00ff22 120px,#00ff21 128px,#06ff21 136px,#17ff20 144px,#2bff1f 152px,#41ff1e 160px,#5aff1e 168px,#74ff1d 176px,#91ff1c 184px,#b1ff1b 192px,#d3ff1a 200px,#f8ff19 208px,#ffe215 216px,#ffc411 224px,#ffac0e 232px,#ff970c 240px,#ff860a 248px,#ff7708 256px,#ff6a06 264px,#ff5f05 272px,#ff5504 280px,#ff4d03 288px,#ff4502 296px,#ff3e01 304px,#ff3801 312px,#ff3200 320px,#ff2d00 328px,#ff2800 336px,#ff2400 344px,#ff2000 352px,#ff1d00 360px,#ff1900 368px,#ff1600 376px,#ff1400 384px,#ff1100 392px,#ff0f00 400px,#ff0d00 408px,#ff0b00 416px,#ff0900 424px,#ff0700 432px,#ff0600 435px)"></i><i style="left:0px;top:50.0px;width:452px;background:linear-gradient(90deg,#00ff2d 0px,#00ff2c 8px,#00ff2c 16px,#00ff2c 24px,#00ff2b 32px,#00ff2b 40px,#00ff2b 48px,#00ff2a 56px,#00ff2a 64px,#00ff29 72px,#00ff29 80px,#00ff28 88px,#00ff28 96px,#00ff27 104px,#00ff27 112px,#00ff26 120px,#00ff26 128px,#06ff25 136px,#17ff25 144px,#2bff24 152px,#41ff23 160px,#59ff22 168px,#74ff22 176px,#91ff21 184px,#b1ff20 192px,#d4ff1f 200px,#f9ff1e 208px,#ffe11a 216px,#ffc316 224px,#ffab12 232px,#ff970f 240px,#ff850d 248px,#ff760b 256px,#ff6a09 264px,#ff5e08 272px,#ff5506 280px,#ff4c05 288px,#ff4404 296px,#ff3d03 304px,#ff3702 312px,#ff3102 320px,#ff2c01 328px,#ff2801 336px,#ff2300 344px,#ff2000 352px,#ff1c00 360px,#ff1900 368px,#ff1600 376px,#ff1300 384px,#ff1100 392px,#ff0e00 400px,#ff0c00 408px,#ff0a00 416px,#ff0800 424px,#ff0700 432px,#ff0500 440px,#ff0400 448px,#ff0300 452px)"></i><i style="left:0px;top:52.0px;width:469px;background:linear-gradient(90deg,#00ff30 0px,#00ff30 8px,#00ff30 16px,#00ff2f 24px,#00ff2f 32px,#00ff2f 40px,#00ff2e 48px,#00ff2e 56px,#00ff2e 64px,#00ff2d 72px,#00ff2d 80px,#00ff2d 88px,#00ff2c 96px,#00ff2c 104px,#00ff2b 112px,#00ff2b 120px,#00ff2a 128px,#05ff2a 136px,#16ff29 144px,#2aff29 152px,#40ff28 160px,#59ff28 168px,#74ff27 176px,#91ff26 184px,#b1ff25 192px,#d4ff25 200px,#faff24 208px,#ffe01f 216px,#ffc21a 224px,#ffaa16 232px,#ff9613 240px,#ff8410 248px,#ff760e 256px,#ff690c 264px,#ff5e0a 272px,#ff5409 280px,#ff4b07 288px,#ff4306 296px,#ff3d05 304px,#ff3604 312px,#ff3103 320px,#ff2c03 328px,#ff2702 336px,#ff2301 344px,#ff1f01 352px,#ff1c00 360px,#ff1800 368px,#ff1500 376px,#ff1300 384px,#ff1000 392px,#ff0e00 400px,#ff0c00 408px,#ff0a00 416px,#ff0800 424px,#ff0600 432px,#ff0500 440px,#ff0300 448px,#ff0200 456px,#ff0100 464px,#ff0000 469px)"></i><i style="left:0px;top:54.0px;width:487px;background:linear-gradient(90deg,#00ff34 0px,#00ff33 8px,#00ff33 16px,#00ff33 24px,#00ff33 32px,#00ff32 40px,#00ff32 48px,#00ff32 56px,#00ff32 64px,#00ff31 72px,#00ff31 80px,#00ff31 88px,#00ff30 96px,#00ff30 104px,#00ff30 112px,#00ff2f 120px,#00ff2f 128px,#05ff2f 136px,#16ff2e 144px,#29ff2e 152px,#40ff2d 160px,#59ff2d 168px,#74ff2c 176px,#92ff2c 184px,#b2ff2b 192px,#d5ff2a 200px,#fbff2a 208px,#ffdf24 216px,#ffc11f 224px,#ffa91a 232px,#ff9517 240px,#ff8314 248px,#ff7511 256px,#ff680f 264px,#ff5d0d 272px,#ff530b 280px,#ff4a09 288px,#ff4308 296px,#ff3c07 304px,#ff3606 312px,#ff3005 320px,#ff2b04 328px,#ff2703 336px,#ff2203 344px,#ff1f02 352px,#ff1b01 360px,#ff1801 368px,#ff1501 376px,#ff1200 384px,#ff1000 392px,#ff0e00 400px,#ff0b00 408px,#ff0900 416px,#ff0800 424px,#ff0600 432px,#ff0500 440px,#ff0300 448px,#ff0200 456px,#ff0100 464px,#ff0000 472px,#ff0000 480px,#ff0000 487px)"></i><i style="left:0px;top:56.0px;width:504px;background:linear-gradient(90deg,#00ff37 0px,#00ff37 8px,#00ff37 16px,#00ff37 24px,#00ff36 32px,#00ff36 40px,#00ff36 48px,#00ff36 56px,#00ff36 64px,#00ff35 72px,#00ff35 80px,#00ff35 88px,#00ff35 96px,#00ff35 104px,#00ff34 112px,#00ff34 120px,#00ff34 128px,#04ff33 136px,#15ff33 144px,#29ff33 152px,#40ff32 160px,#58ff32 168px,#74ff32 176px,#92ff31 184px,#b2ff31 192px,#d5ff30 200px,#fbff30 208px,#ffde29 216px,#ffc023 224px,#ffa81f 232px,#ff941a 240px,#ff8317 248px,#ff7414 256px,#ff6712 264px,#ff5c0f 272px,#ff520e 280px,#ff4a0c 288px,#ff420a 296px,#ff3b09 304px,#ff3508 312px,#ff3007 320px,#ff2b06 328px,#ff2605 336px,#ff2204 344px,#ff1e03 352px,#ff1b03 360px,#ff1702 368px,#ff1502 376px,#ff1201 384px,#ff0f01 392px,#ff0d00 400px,#ff0b00 408px,#ff0900 416px,#ff0700 424px,#ff0600 432px,#ff0400 440px,#ff0300 448px,#ff0200 456px,#ff0100 464px,#ff0000 472px,#ff0000 480px,#ff0000 488px,#ff0000 496px,#ff0000 504px)"></i><i style="left:0px;top:58.0px;width:522px;background:linear-gradient(90deg,#00ff3b 0px,#00ff3b 8px,#00ff3b 16px,#00ff3a 24px,#00ff3a 32px,#00ff3a 40px,#00ff3a 48px,#00ff3a 56px,#00ff3a 64px,#00ff3a 72px,#00ff3a 80px,#00ff39 88px,#00ff39 96px,#00ff39 104px,#00ff39 112px,#00ff39 120px,#00ff39 128px,#04ff38 136px,#14ff38 144px,#28ff38 152px,#3fff38 160px,#58ff38 168px,#74ff37 176px,#92ff37 184px,#b2ff37 192px,#d6ff37 200px,#fcff36 208px,#ffdd2f 216px,#ffbf28 224px,#ffa723 232px,#ff931e 240px,#ff821b 248px,#ff7317 256px,#ff6615 264px,#ff5b12 272px,#ff5110 280px,#ff490e 288px,#ff410d 296px,#ff3a0b 304px,#ff340a 312px,#ff2f09 320px,#ff2a08 328px,#ff2507 336px,#ff2106 344px,#ff1e05 352px,#ff1a04 360px,#ff1703 368px,#ff1403 376px,#ff1102 384px,#ff0f02 392px,#ff0d01 400px,#ff0b01 408px,#ff0901 416px,#ff0700 424px,#ff0500 432px,#ff0400 440px,#ff0300 448px,#ff0100 456px,#ff0000 464px,#ff0000 472px,#ff0000 480px,#ff0000 488px,#ff0000 496px,#ff0000 504px,#ff0000 512px,#ff0000 520px,#ff0000 522px)"></i><i style="left:0px;top:60.0px;width:539px;background:linear-gradient(90deg,#00ff3e 0px,#00ff3e 8px,#00ff3e 16px,#00ff3e 24px,#00ff3e 32px,#00ff3e 40px,#00ff3e 48px,#00ff3e 56px,#00ff3e 64px,#00ff3e 72px,#00ff3e 80px,#00ff3e 88px,#00ff3e 96px,#00ff3e 104px,#00ff3e 112px,#00ff3e 120px,#00ff3e 128px,#03ff3e 136px,#14ff3d 144px,#28ff3d 152px,#3fff3d 160px,#58ff3d 168px,#74ff3d 176px,#92ff3d 184px,#b3ff3d 192px,#d6ff3d 200px,#fdff3d 208px,#ffdc34 216px,#ffbe2d 224px,#ffa627 232px,#ff9222 240px,#ff811e 248px,#ff721b 256px,#ff6518 264px,#ff5a15 272px,#ff5113 280px,#ff4811 288px,#ff410f 296px,#ff3a0d 304px,#ff340c 312px,#ff2e0b 320px,#ff2909 328px,#ff2508 336px,#ff2107 344px,#ff1d06 352px,#ff1a06 360px,#ff1605 368px,#ff1404 376px,#ff1104 384px,#ff0f03 392px,#ff0c02 400px,#ff0a02 408px,#ff0802 416px,#ff0701 424px,#ff0501 432px,#ff0400 440px,#ff0200 448px,#ff0100 456px,#ff0000 464px,#ff0000 472px,#ff0000 480px,#ff0000 488px,#ff0000 496px,#ff0000 504px,#ff0000 512px,#ff0000 520px,#ff0000 528px,#ff0000 536px,#ff0000 539px)"></i><i style="left:0px;top:62.0px;width:556px;background:linear-gradient(90deg,#00ff42 0px,#00ff42 8px,#00ff42 16px,#00ff42 24px,#00ff42 32px,#00ff42 40px,#00ff42 48px,#00ff42 56px,#00ff42 64px,#00ff42 72px,#00ff42 80px,#00ff42 88px,#00ff43 96px,#00ff43 104px,#00ff43 112px,#00ff43 120px,#00ff43 128px,#03ff43 136px,#13ff43 144px,#27ff43 152px,#3eff43 160px,#58ff43 168px,#73ff43 176px,#92ff43 184px,#b3ff43 192px,#d7ff43 200px,#feff43 208px,#ffdb3a 216px,#ffbd32 224px,#ffa52c 232px,#ff9127 240px,#ff8022 248px,#ff711e 256px,#ff651b 264px,#ff5a18 272px,#ff5016 280px,#ff4713 288px,#ff4011 296px,#ff3910 304px,#ff330e 312px,#ff2e0d 320px,#ff290b 328px,#ff240a 336px,#ff2009 344px,#ff1c08 352px,#ff1907 360px,#ff1606 368px,#ff1306 376px,#ff1105 384px,#ff0e04 392px,#ff0c04 400px,#ff0a03 408px,#ff0803 416px,#ff0602 424px,#ff0502 432px,#ff0301 440px,#ff0201 448px,#ff0101 456px,#ff0000 464px,#ff0000 472px,#ff0000 480px,#ff0000 488px,#ff0000 496px,#ff0000 504px,#ff0000 512px,#ff0000 520px,#ff0000 528px,#ff0000 536px,#ff0000 544px,#ff0000 552px,#ff0000 556px)"></i><i style="left:0px;top:64.0px;width:574px;background:linear-gradient(90deg,#00ff46 0px,#00ff46 8px,#00ff46 16px,#00ff46 24px,#00ff46 32px,#00ff46 40px,#00ff46 48px,#00ff47 56px,#00ff47 64px,#00ff47 72px,#00ff47 80px,#00ff47 88px,#00ff47 96px,#00ff47 104px,#00ff48 112px,#00ff48 120px,#00ff48 128px,#02ff48 136px,#13ff48 144px,#27ff49 152px,#3eff49 160px,#57ff49 168px,#73ff49 176px,#92ff49 184px,#b3ff4a 192px,#d8ff4a 200px,#ffff4a 208px,#ffda40 216px,#ffbc37 224px,#ffa431 232px,#ff902b 240px,#ff7f26 248px,#ff7022 256px,#ff641e 264px,#ff591b 272px,#ff4f18 280px,#ff4716 288px,#ff3f14 296px,#ff3812 304px,#ff3210 312px,#ff2d0f 320px,#ff280d 328px,#ff240c 336px,#ff200b 344px,#ff1c0a 352px,#ff1909 360px,#ff1608 368px,#ff1307 376px,#ff1006 384px,#ff0e05 392px,#ff0c05 400px,#ff0a04 408px,#ff0804 416px,#ff0603 424px,#ff0403 432px,#ff0302 440px,#ff0202 448px,#ff0101 456px,#ff0001 464px,#ff0001 472px,#ff0000 480px,#ff0000 488px,#ff0000 496px,#ff0000 504px,#ff0000 512px,#ff0000 520px,#ff0000 528px,#ff0000 536px,#ff0000 544px,#ff0000 552px,#ff0000 560px,#ff0000 568px,#ff0000 574px)"></i><i style="left:0px;top:66.0px;width:591px;background:linear-gradient(90deg,#00ff4a 0px,#00ff4a 8px,#00ff4a 16px,#00ff4a 24px,#00ff4a 32px,#00ff4b 40px,#00ff4b 48px,#00ff4b 56px,#00ff4b 64px,#00ff4b 72px,#00ff4c 80px,#00ff4c 88px,#00ff4c 96px,#00ff4c 104px,#00ff4d 112px,#00ff4d 120px,#00ff4d 128px,#02ff4e 136px,#12ff4e 144px,#26ff4e 152px,#3dff4f 160px,#57ff4f 168px,#73ff4f 176px,#92ff50 184px,#b4ff50 192px,#d8ff51 200px,#fffe51 208px,#ffd946 216px,#ffbb3d 224px,#ffa335 232px,#ff8f2f 240px,#ff7e2a 248px,#ff6f25 256px,#ff6322 264px,#ff581e 272px,#ff4e1b 280px,#ff4619 288px,#ff3e16 296px,#ff3814 304px,#ff3212 312px,#ff2c11 320px,#ff280f 328px,#ff230e 336px,#ff1f0c 344px,#ff1b0b 352px,#ff180a 360px,#ff1509 368px,#ff1208 376px,#ff1008 384px,#ff0d07 392px,#ff0b06 400px,#ff0905 408px,#ff0705 416px,#ff0604 424px,#ff0404 432px,#ff0303 440px,#ff0103 448px,#ff0002 456px,#ff0002 464px,#ff0002 472px,#ff0001 480px,#ff0001 488px,#ff0001 496px,#ff0000 504px,#ff0000 512px,#ff0000 520px,#ff0000 528px,#ff0000 536px,#ff0000 544px,#ff0000 552px,#ff0000 560px,#ff0000 568px,#ff0000 576px,#ff0000 584px,#ff0000 591px)"></i><i style="left:1px;top:68.0px;width:608px;background:linear-gradient(90deg,#00ff4e 0px,#00ff4e 8px,#00ff4e 16px,#00ff4e 24px,#00ff4f 32px,#00ff4f 40px,#00ff4f 48px,#00ff4f 56px,#00ff50 64px,#00ff50 72px,#00ff50 80px,#00ff51 88px,#00ff51 96px,#00ff52 104px,#00ff52 112px,#00ff52 120px,#00ff53 128px,#03ff53 136px,#14ff54 144px,#28ff54 152px,#40ff55 160px,#5aff55 168px,#77ff56 176px,#96ff57 184px,#b8ff57 192px,#deff58 200px,#fff856 208px,#ffd44b 216px,#ffb741 224px,#ffa039 232px,#ff8c33 240px,#ff7b2d 248px,#ff6d28 256px,#ff6124 264px,#ff5621 272px,#ff4d1e 280px,#ff441b 288px,#ff3d18 296px,#ff3616 304px,#ff3014 312px,#ff2b13 320px,#ff2611 328px,#ff220f 336px,#ff1e0e 344px,#ff1a0d 352px,#ff170c 360px,#ff140b 368px,#ff110a 376px,#ff0f09 384px,#ff0d08 392px,#ff0a07 400px,#ff0907 408px,#ff0706 416px,#ff0505 424px,#ff0405 432px,#ff0204 440px,#ff0104 448px,#ff0003 456px,#ff0003 464px,#ff0002 472px,#ff0002 480px,#ff0002 488px,#ff0001 496px,#ff0001 504px,#ff0001 512px,#ff0000 520px,#ff0000 528px,#ff0000 536px,#ff0000 544px,#ff0000 552px,#ff0000 560px,#ff0000 568px,#ff0000 576px,#ff0000 584px,#ff0000 592px,#ff0000 600px,#ff0000 608px)"></i><i style="left:1px;top:70.0px;width:619px;background:linear-gradient(90deg,#00ff52 0px,#00ff52 8px,#00ff52 16px,#00ff52 24px,#00ff53 32px,#00ff53 40px,#00ff54 48px,#00ff54 56px,#00ff54 64px,#00ff55 72px,#00ff55 80px,#00ff56 88px,#00ff56 96px,#00ff57 104px,#00ff57 112px,#00ff58 120px,#00ff58 128px,#02ff59 136px,#13ff5a 144px,#28ff5a 152px,#40ff5b 160px,#5aff5c 168px,#77ff5d 176px,#96ff5d 184px,#b9ff5e 192px,#deff5f 200px,#fff75d 208px,#ffd351 216px,#ffb646 224px,#ff9f3e 232px,#ff8b37 240px,#ff7a31 248px,#ff6c2c 256px,#ff6028 264px,#ff5524 272px,#ff4c21 280px,#ff431e 288px,#ff3c1b 296px,#ff3619 304px,#ff3017 312px,#ff2b15 320px,#ff2613 328px,#ff2111 336px,#ff1e10 344px,#ff1a0f 352px,#ff170d 360px,#ff140c 368px,#ff110b 376px,#ff0e0a 384px,#ff0c09 392px,#ff0a09 400px,#ff0808 408px,#ff0607 416px,#ff0506 424px,#ff0306 432px,#ff0205 440px,#ff0105 448px,#ff0004 456px,#ff0004 464px,#ff0003 472px,#ff0003 480px,#ff0002 488px,#ff0002 496px,#ff0002 504px,#ff0001 512px,#ff0001 520px,#ff0001 528px,#ff0001 536px,#ff0000 544px,#ff0000 552px,#ff0000 560px,#ff0000 568px,#ff0000 576px,#ff0000 584px,#ff0000 592px,#ff0000 600px,#ff0000 608px,#ff0000 616px,#ff0000 619px)"></i><i style="left:1px;top:72.0px;width:619px;background:linear-gradient(90deg,#00ff56 0px,#00ff56 8px,#00ff56 16px,#00ff57 24px,#00ff57 32px,#00ff58 40px,#00ff58 48px,#00ff59 56px,#00ff59 64px,#00ff5a 72px,#00ff5a 80px,#00ff5b 88px,#00ff5b 96px,#00ff5c 104px,#00ff5d 112px,#00ff5d 120px,#00ff5e 128px,#02ff5f 136px,#13ff60 144px,#27ff60 152px,#3fff61 160px,#59ff62 168px,#77ff63 176px,#96ff64 184px,#b9ff66 192px,#dfff67 200px,#fff664 208px,#ffd257 216px,#ffb54c 224px,#ff9e43 232px,#ff8a3c 240px,#ff7935 248px,#ff6b30 256px,#ff5f2b 264px,#ff5427 272px,#ff4b24 280px,#ff4320 288px,#ff3b1e 296px,#ff351b 304px,#ff2f19 312px,#ff2a17 320px,#ff2515 328px,#ff2113 336px,#ff1d12 344px,#ff1910 352px,#ff160f 360px,#ff130e 368px,#ff110d 376px,#ff0e0c 384px,#ff0c0b 392px,#ff0a0a 400px,#ff0809 408px,#ff0608 416px,#ff0408 424px,#ff0307 432px,#ff0206 440px,#ff0106 448px,#ff0005 456px,#ff0005 464px,#ff0004 472px,#ff0004 480px,#ff0003 488px,#ff0003 496px,#ff0003 504px,#ff0002 512px,#ff0002 520px,#ff0002 528px,#ff0001 536px,#ff0001 544px,#ff0001 552px,#ff0000 560px,#ff0000 568px,#ff0000 576px,#ff0000 584px,#ff0000 592px,#ff0000 600px,#ff0000 608px,#ff0000 616px,#ff0000 619px)"></i><i style="left:2px;top:74.0px;width:618px;background:linear-gradient(90deg,#00ff5a 0px,#00ff5a 8px,#00ff5b 16px,#00ff5b 24px,#00ff5c 32px,#00ff5c 40px,#00ff5d 48px,#00ff5d 56px,#00ff5e 64px,#00ff5f 72px,#00ff5f 80px,#00ff60 88px,#00ff61 96px,#00ff61 104px,#00ff62 112px,#00ff63 120px,#00ff64 128px,#03ff65 136px,#14ff66 144px,#2aff67 152px,#42ff68 160px,#5dff69 168px,#7aff6a 176px,#9bff6c 184px,#beff6d 192px,#e5ff6f 200px,#fff069 208px,#ffcd5c 216px,#ffb150 224px,#ff9a47 232px,#ff873f 240px,#ff7639 248px,#ff6933 256px,#ff5d2e 264px,#ff522a 272px,#ff4926 280px,#ff4123 288px,#ff3a20 296px,#ff341d 304px,#ff2e1b 312px,#ff2919 320px,#ff2417 328px,#ff2015 336px,#ff1c13 344px,#ff1912 352px,#ff1511 360px,#ff120f 368px,#ff100e 376px,#ff0d0d 384px,#ff0b0c 392px,#ff090b 400px,#ff070a 408px,#ff050a 416px,#ff0409 424px,#ff0208 432px,#ff0107 440px,#ff0007 448px,#ff0006 456px,#ff0006 464px,#ff0005 472px,#ff0005 480px,#ff0004 488px,#ff0004 496px,#ff0003 504px,#ff0003 512px,#ff0003 520px,#ff0002 528px,#ff0002 536px,#ff0002 544px,#ff0001 552px,#ff0001 560px,#ff0001 568px,#ff0001 576px,#ff0000 584px,#ff0000 592px,#ff0000 600px,#ff0000 608px,#ff0000 616px,#ff0000 618px)"></i><i style="left:2px;top:76.0px;width:618px;background:linear-gradient(90deg,#00ff5e 0px,#00ff5e 8px,#00ff5f 16px,#00ff5f 24px,#00ff60 32px,#00ff61 40px,#00ff61 48px,#00ff62 56px,#00ff63 64px,#00ff64 72px,#00ff64 80px,#00ff65 88px,#00ff66 96px,#00ff67 104px,#00ff68 112px,#00ff69 120px,#00ff6a 128px,#02ff6b 136px,#14ff6c 144px,#29ff6d 152px,#41ff6f 160px,#5cff70 168px,#7aff72 176px,#9bff73 184px,#bfff75 192px,#e6ff76 200px,#ffef71 208px,#ffcc62 216px,#ffb056 224px,#ff994c 232px,#ff8644 240px,#ff763d 248px,#ff6837 256px,#ff5c32 264px,#ff512d 272px,#ff4829 280px,#ff4026 288px,#ff3923 296px,#ff3320 304px,#ff2d1d 312px,#ff281b 320px,#ff2319 328px,#ff1f17 336px,#ff1b15 344px,#ff1814 352px,#ff1512 360px,#ff1211 368px,#ff0f10 376px,#ff0d0f 384px,#ff0b0e 392px,#ff090d 400px,#ff070c 408px,#ff050b 416px,#ff040a 424px,#ff0209 432px,#ff0109 440px,#ff0008 448px,#ff0007 456px,#ff0007 464px,#ff0006 472px,#ff0006 480px,#ff0005 488px,#ff0005 496px,#ff0004 504px,#ff0004 512px,#ff0003 520px,#ff0003 528px,#ff0003 536px,#ff0002 544px,#ff0002 552px,#ff0002 560px,#ff0001 568px,#ff0001 576px,#ff0001 584px,#ff0001 592px,#ff0000 600px,#ff0000 608px,#ff0000 616px,#ff0000 618px)"></i><i style="left:3px;top:78.0px;width:617px;background:linear-gradient(90deg,#00ff62 0px,#00ff63 8px,#00ff63 16px,#00ff64 24px,#00ff65 32px,#00ff65 40px,#00ff66 48px,#00ff67 56px,#00ff68 64px,#00ff69 72px,#00ff6a 80px,#00ff6b 88px,#00ff6c 96px,#00ff6d 104px,#00ff6e 112px,#00ff6f 120px,#00ff70 128px,#04ff71 136px,#16ff73 144px,#2bff74 152px,#44ff76 160px,#60ff77 168px,#7eff79 176px,#9fff7b 184px,#c4ff7d 192px,#ecff7f 200px,#ffe976 208px,#ffc767 216px,#ffac5a 224px,#ff9550 232px,#ff8347 240px,#ff7340 248px,#ff653a 256px,#ff5a35 264px,#ff4f30 272px,#ff462c 280px,#ff3f28 288px,#ff3825 296px,#ff3122 304px,#ff2c1f 312px,#ff271d 320px,#ff221b 328px,#ff1e19 336px,#ff1a17 344px,#ff1715 352px,#ff1414 360px,#ff1113 368px,#ff0f11 376px,#ff0c10 384px,#ff0a0f 392px,#ff080e 400px,#ff060d 408px,#ff050c 416px,#ff030b 424px,#ff020a 432px,#ff010a 440px,#ff0009 448px,#ff0008 456px,#ff0008 464px,#ff0007 472px,#ff0006 480px,#ff0006 488px,#ff0005 496px,#ff0005 504px,#ff0005 512px,#ff0004 520px,#ff0004 528px,#ff0003 536px,#ff0003 544px,#ff0003 552px,#ff0002 560px,#ff0002 568px,#ff0002 576px,#ff0001 584px,#ff0001 592px,#ff0001 600px,#ff0001 608px,#ff0001 616px,#ff0001 617px)"></i><i style="left:3px;top:80.0px;width:617px;background:linear-gradient(90deg,#00ff66 0px,#00ff67 8px,#00ff68 16px,#00ff69 24px,#00ff69 32px,#00ff6a 40px,#00ff6b 48px,#00ff6c 56px,#00ff6d 64px,#00ff6e 72px,#00ff6f 80px,#00ff70 88px,#00ff71 96px,#00ff72 104px,#00ff74 112px,#00ff75 120px,#00ff76 128px,#03ff78 136px,#15ff79 144px,#2bff7b 152px,#44ff7d 160px,#5fff7f 168px,#7eff80 176px,#a0ff83 184px,#c4ff85 192px,#ecff87 200px,#ffe87d 208px,#ffc66d 216px,#ffab60 224px,#ff9455 232px,#ff824c 240px,#ff7244 248px,#ff643e 256px,#ff5938 264px,#ff4f33 272px,#ff462f 280px,#ff3e2b 288px,#ff3728 296px,#ff3125 304px,#ff2b22 312px,#ff261f 320px,#ff221d 328px,#ff1e1b 336px,#ff1a19 344px,#ff1717 352px,#ff1316 360px,#ff1114 368px,#ff0e13 376px,#ff0c12 384px,#ff0a10 392px,#ff080f 400px,#ff060e 408px,#ff040d 416px,#ff030c 424px,#ff010c 432px,#ff000b 440px,#ff000a 448px,#ff0009 456px,#ff0009 464px,#ff0008 472px,#ff0007 480px,#ff0007 488px,#ff0006 496px,#ff0006 504px,#ff0005 512px,#ff0005 520px,#ff0005 528px,#ff0004 536px,#ff0004 544px,#ff0003 552px,#ff0003 560px,#ff0003 568px,#ff0002 576px,#ff0002 584px,#ff0002 592px,#ff0002 600px,#ff0001 608px,#ff0001 616px,#ff0001 617px)"></i><i style="left:4px;top:82.0px;width:616px;background:linear-gradient(90deg,#00ff6b 0px,#00ff6c 8px,#00ff6c 16px,#00ff6d 24px,#00ff6e 32px,#00ff6f 40px,#00ff70 48px,#00ff71 56px,#00ff72 64px,#00ff73 72px,#00ff75 80px,#00ff76 88px,#00ff77 96px,#00ff78 104px,#00ff7a 112px,#00ff7b 120px,#00ff7d 128px,#04ff7f 136px,#17ff80 144px,#2dff82 152px,#47ff84 160px,#63ff86 168px,#82ff88 176px,#a4ff8b 184px,#caff8d 192px,#f3ff90 200px,#ffe282 208px,#ffc172 216px,#ffa764 224px,#ff9159 232px,#ff7e50 240px,#ff6f48 248px,#ff6241 256px,#ff563b 264px,#ff4d36 272px,#ff4432 280px,#ff3c2e 288px,#ff352a 296px,#ff2f27 304px,#ff2a24 312px,#ff2521 320px,#ff211f 328px,#ff1d1d 336px,#ff191b 344px,#ff1619 352px,#ff1317 360px,#ff1016 368px,#ff0d14 376px,#ff0b13 384px,#ff0912 392px,#ff0711 400px,#ff0510 408px,#ff040f 416px,#ff020e 424px,#ff010d 432px,#ff000c 440px,#ff000b 448px,#ff000a 456px,#ff000a 464px,#ff0009 472px,#ff0008 480px,#ff0008 488px,#ff0007 496px,#ff0007 504px,#ff0006 512px,#ff0006 520px,#ff0005 528px,#ff0005 536px,#ff0004 544px,#ff0004 552px,#ff0004 560px,#ff0003 568px,#ff0003 576px,#ff0003 584px,#ff0002 592px,#ff0002 600px,#ff0002 608px,#ff0002 616px)"></i><i style="left:4px;top:84.0px;width:616px;background:linear-gradient(90deg,#00ff6f 0px,#00ff70 8px,#00ff71 16px,#00ff72 24px,#00ff73 32px,#00ff74 40px,#00ff75 48px,#00ff76 56px,#00ff77 64px,#00ff79 72px,#00ff7a 80px,#00ff7b 88px,#00ff7d 96px,#00ff7e 104px,#00ff80 112px,#00ff82 120px,#00ff83 128px,#04ff85 136px,#16ff87 144px,#2dff89 152px,#46ff8b 160px,#63ff8e 168px,#82ff90 176px,#a4ff93 184px,#caff96 192px,#f4ff99 200px,#ffe18a 208px,#ffc078 216px,#ffa66a 224px,#ff905e 232px,#ff7e54 240px,#ff6e4c 248px,#ff6145 256px,#ff563f 264px,#ff4c39 272px,#ff4335 280px,#ff3b31 288px,#ff352d 296px,#ff2f29 304px,#ff2926 312px,#ff2424 320px,#ff2021 328px,#ff1c1f 336px,#ff181d 344px,#ff151b 352px,#ff1219 360px,#ff0f17 368px,#ff0d16 376px,#ff0b15 384px,#ff0913 392px,#ff0712 400px,#ff0511 408px,#ff0310 416px,#ff020f 424px,#ff010e 432px,#ff000d 440px,#ff000c 448px,#ff000c 456px,#ff000b 464px,#ff000a 472px,#ff0009 480px,#ff0009 488px,#ff0008 496px,#ff0008 504px,#ff0007 512px,#ff0007 520px,#ff0006 528px,#ff0006 536px,#ff0005 544px,#ff0005 552px,#ff0004 560px,#ff0004 568px,#ff0004 576px,#ff0003 584px,#ff0003 592px,#ff0003 600px,#ff0003 608px,#ff0002 616px)"></i><i style="left:5px;top:86.0px;width:615px;background:linear-gradient(90deg,#00ff74 0px,#00ff75 8px,#00ff76 16px,#00ff77 24px,#00ff78 32px,#00ff79 40px,#00ff7a 48px,#00ff7c 56px,#00ff7d 64px,#00ff7e 72px,#00ff80 80px,#00ff81 88px,#00ff83 96px,#00ff85 104px,#00ff86 112px,#00ff88 120px,#00ff8a 128px,#05ff8c 136px,#18ff8e 144px,#2fff91 152px,#49ff93 160px,#66ff96 168px,#86ff99 176px,#a9ff9c 184px,#d0ff9f 192px,#faffa2 200px,#ffdb8f 208px,#ffbb7d 216px,#ffa26e 224px,#ff8c62 232px,#ff7a58 240px,#ff6b4f 248px,#ff5f48 256px,#ff5342 264px,#ff4a3c 272px,#ff4137 280px,#ff3a33 288px,#ff332f 296px,#ff2d2c 304px,#ff2828 312px,#ff2326 320px,#ff1f23 328px,#ff1b21 336px,#ff171f 344px,#ff141d 352px,#ff111b 360px,#ff0f19 368px,#ff0c17 376px,#ff0a16 384px,#ff0815 392px,#ff0613 400px,#ff0412 408px,#ff0311 416px,#ff0210 424px,#ff000f 432px,#ff000e 440px,#ff000d 448px,#ff000d 456px,#ff000c 464px,#ff000b 472px,#ff000a 480px,#ff000a 488px,#ff0009 496px,#ff0009 504px,#ff0008 512px,#ff0007 520px,#ff0007 528px,#ff0007 536px,#ff0006 544px,#ff0006 552px,#ff0005 560px,#ff0005 568px,#ff0004 576px,#ff0004 584px,#ff0004 592px,#ff0003 600px,#ff0003 608px,#ff0003 615px)"></i><i style="left:5px;top:88.0px;width:615px;background:linear-gradient(90deg,#00ff78 0px,#00ff79 8px,#00ff7b 16px,#00ff7c 24px,#00ff7d 32px,#00ff7e 40px,#00ff80 48px,#00ff81 56px,#00ff82 64px,#00ff84 72px,#00ff86 80px,#00ff87 88px,#00ff89 96px,#00ff8b 104px,#00ff8d 112px,#00ff8f 120px,#00ff91 128px,#04ff93 136px,#18ff96 144px,#2fff98 152px,#49ff9b 160px,#66ff9e 168px,#86ffa1 176px,#aaffa4 184px,#d0ffa8 192px,#fbffab 200px,#ffda96 208px,#ffba83 216px,#ffa074 224px,#ff8b67 232px,#ff795d 240px,#ff6a54 248px,#ff5e4c 256px,#ff5345 264px,#ff4940 272px,#ff413b 280px,#ff3936 288px,#ff3232 296px,#ff2d2e 304px,#ff272b 312px,#ff2328 320px,#ff1e25 328px,#ff1a23 336px,#ff1721 344px,#ff141e 352px,#ff111d 360px,#ff0e1b 368px,#ff0c19 376px,#ff0a18 384px,#ff0816 392px,#ff0615 400px,#ff0414 408px,#ff0313 416px,#ff0111 424px,#ff0010 432px,#ff000f 440px,#ff000f 448px,#ff000e 456px,#ff000d 464px,#ff000c 472px,#ff000b 480px,#ff000b 488px,#ff000a 496px,#ff000a 504px,#ff0009 512px,#ff0008 520px,#ff0008 528px,#ff0007 536px,#ff0007 544px,#ff0006 552px,#ff0006 560px,#ff0006 568px,#ff0005 576px,#ff0005 584px,#ff0004 592px,#ff0004 600px,#ff0004 608px,#ff0004 615px)"></i><i style="left:6px;top:90.0px;width:614px;background:linear-gradient(90deg,#00ff7d 0px,#00ff7e 8px,#00ff80 16px,#00ff81 24px,#00ff82 32px,#00ff84 40px,#00ff85 48px,#00ff87 56px,#00ff88 64px,#00ff8a 72px,#00ff8c 80px,#00ff8d 88px,#00ff8f 96px,#00ff91 104px,#00ff94 112px,#00ff96 120px,#00ff98 128px,#06ff9b 136px,#1aff9d 144px,#31ffa0 152px,#4cffa3 160px,#6affa6 168px,#8affaa 176px,#afffad 184px,#d6ffb1 192px,#fffcb3 200px,#ffd59b 208px,#ffb688 216px,#ff9d78 224px,#ff886b 232px,#ff7660 240px,#ff6857 248px,#ff5b4f 256px,#ff5048 264px,#ff4742 272px,#ff3f3d 280px,#ff3738 288px,#ff3134 296px,#ff2b30 304px,#ff262d 312px,#ff212a 320px,#ff1d27 328px,#ff1925 336px,#ff1622 344px,#ff1320 352px,#ff101e 360px,#ff0d1c 368px,#ff0b1b 376px,#ff0919 384px,#ff0718 392px,#ff0516 400px,#ff0315 408px,#ff0214 416px,#ff0113 424px,#ff0012 432px,#ff0011 440px,#ff0010 448px,#ff000f 456px,#ff000e 464px,#ff000d 472px,#ff000c 480px,#ff000c 488px,#ff000b 496px,#ff000a 504px,#ff000a 512px,#ff0009 520px,#ff0009 528px,#ff0008 536px,#ff0008 544px,#ff0007 552px,#ff0007 560px,#ff0006 568px,#ff0006 576px,#ff0005 584px,#ff0005 592px,#ff0005 600px,#ff0004 608px,#ff0004 614px)"></i><i style="left:6px;top:92.0px;width:614px;background:linear-gradient(90deg,#00ff82 0px,#00ff83 8px,#00ff84 16px,#00ff86 24px,#00ff87 32px,#00ff89 40px,#00ff8a 48px,#00ff8c 56px,#00ff8e 64px,#00ff90 72px,#00ff92 80px,#00ff94 88px,#00ff96 96px,#00ff98 104px,#00ff9a 112px,#00ff9d 120px,#00ff9f 128px,#05ffa2 136px,#19ffa5 144px,#31ffa8 152px,#4bffab 160px,#69ffaf 168px,#8affb2 176px,#afffb6 184px,#d7ffba 192px,#fffbbc 200px,#ffd4a3 208px,#ffb58e 216px,#ff9b7e 224px,#ff8771 232px,#ff7565 240px,#ff675c 248px,#ff5a53 256px,#ff504c 264px,#ff4646 272px,#ff3e40 280px,#ff373b 288px,#ff3037 296px,#ff2b33 304px,#ff2530 312px,#ff212c 320px,#ff1d2a 328px,#ff1927 336px,#ff1524 344px,#ff1222 352px,#ff0f20 360px,#ff0d1e 368px,#ff0b1c 376px,#ff081b 384px,#ff0619 392px,#ff0518 400px,#ff0316 408px,#ff0215 416px,#ff0114 424px,#ff0013 432px,#ff0012 440px,#ff0011 448px,#ff0010 456px,#ff000f 464px,#ff000e 472px,#ff000e 480px,#ff000d 488px,#ff000c 496px,#ff000b 504px,#ff000b 512px,#ff000a 520px,#ff000a 528px,#ff0009 536px,#ff0009 544px,#ff0008 552px,#ff0008 560px,#ff0007 568px,#ff0007 576px,#ff0006 584px,#ff0006 592px,#ff0005 600px,#ff0005 608px,#ff0005 614px)"></i><i style="left:7px;top:94.0px;width:613px;background:linear-gradient(90deg,#00ff87 0px,#00ff88 8px,#00ff8a 16px,#00ff8b 24px,#00ff8d 32px,#00ff8e 40px,#00ff90 48px,#00ff92 56px,#00ff94 64px,#00ff96 72px,#00ff98 80px,#00ff9a 88px,#00ff9c 96px,#00ff9f 104px,#00ffa1 112px,#00ffa4 120px,#00ffa7 128px,#07ffaa 136px,#1bffad 144px,#33ffb0 152px,#4fffb4 160px,#6dffb8 168px,#8fffbc 176px,#b4ffc0 184px,#ddffc5 192px,#fff5c1 200px,#ffcea7 208px,#ffb093 216px,#ff9882 224px,#ff8374 232px,#ff7369 240px,#ff645f 248px,#ff5856 256px,#ff4e4f 264px,#ff4449 272px,#ff3c43 280px,#ff353e 288px,#ff2f39 296px,#ff2935 304px,#ff2432 312px,#ff202e 320px,#ff1c2b 328px,#ff1829 336px,#ff1426 344px,#ff1124 352px,#ff0f22 360px,#ff0c20 368px,#ff0a1e 376px,#ff081c 384px,#ff061b 392px,#ff0419 400px,#ff0318 408px,#ff0116 416px,#ff0015 424px,#ff0014 432px,#ff0013 440px,#ff0012 448px,#ff0011 456px,#ff0010 464px,#ff000f 472px,#ff000f 480px,#ff000e 488px,#ff000d 496px,#ff000c 504px,#ff000c 512px,#ff000b 520px,#ff000a 528px,#ff000a 536px,#ff0009 544px,#ff0009 552px,#ff0008 560px,#ff0008 568px,#ff0007 576px,#ff0007 584px,#ff0007 592px,#ff0006 600px,#ff0006 608px,#ff0006 613px)"></i><i style="left:7px;top:96.0px;width:613px;background:linear-gradient(90deg,#00ff8c 0px,#00ff8d 8px,#00ff8f 16px,#00ff90 24px,#00ff92 32px,#00ff94 40px,#00ff96 48px,#00ff98 56px,#00ff9a 64px,#00ff9c 72px,#00ff9e 80px,#00ffa0 88px,#00ffa3 96px,#00ffa5 104px,#00ffa8 112px,#00ffab 120px,#00ffae 128px,#06ffb1 136px,#1affb5 144px,#33ffb8 152px,#4effbc 160px,#6dffc0 168px,#8fffc5 176px,#b4ffc9 184px,#deffce 192px,#fff4ca 200px,#ffcdaf 208px,#ffaf9a 216px,#ff9788 224px,#ff827a 232px,#ff726e 240px,#ff6363 248px,#ff575b 256px,#ff4d53 264px,#ff444c 272px,#ff3b46 280px,#ff3441 288px,#ff2e3c 296px,#ff2938 304px,#ff2434 312px,#ff1f31 320px,#ff1b2e 328px,#ff172b 336px,#ff1428 344px,#ff1126 352px,#ff0e24 360px,#ff0c22 368px,#ff0920 376px,#ff071e 384px,#ff051c 392px,#ff041b 400px,#ff0219 408px,#ff0118 416px,#ff0017 424px,#ff0015 432px,#ff0014 440px,#ff0013 448px,#ff0012 456px,#ff0011 464px,#ff0010 472px,#ff0010 480px,#ff000f 488px,#ff000e 496px,#ff000d 504px,#ff000d 512px,#ff000c 520px,#ff000b 528px,#ff000b 536px,#ff000a 544px,#ff000a 552px,#ff0009 560px,#ff0009 568px,#ff0008 576px,#ff0008 584px,#ff0007 592px,#ff0007 600px,#ff0006 608px,#ff0006 613px)"></i><i style="left:8px;top:98.0px;width:612px;background:linear-gradient(90deg,#00ff91 0px,#00ff92 8px,#00ff94 16px,#00ff96 24px,#00ff98 32px,#00ff99 40px,#00ff9b 48px,#00ff9e 56px,#00ffa0 64px,#00ffa2 72px,#00ffa5 80px,#00ffa7 88px,#00ffaa 96px,#00ffad 104px,#00ffb0 112px,#00ffb3 120px,#00ffb6 128px,#08ffb9 136px,#1dffbd 144px,#35ffc1 152px,#51ffc5 160px,#71ffca 168px,#94ffcf 176px,#baffd4 184px,#e4ffd9 192px,#ffedcf 200px,#ffc8b4 208px,#ffab9e 216px,#ff938c 224px,#ff7f7e 232px,#ff6f71 240px,#ff6167 248px,#ff555e 256px,#ff4b56 264px,#ff424f 272px,#ff3a49 280px,#ff3344 288px,#ff2d3f 296px,#ff273a 304px,#ff2236 312px,#ff1e33 320px,#ff1a30 328px,#ff162d 336px,#ff132a 344px,#ff1028 352px,#ff0d25 360px,#ff0b23 368px,#ff0921 376px,#ff071f 384px,#ff051e 392px,#ff031c 400px,#ff021b 408px,#ff0119 416px,#ff0018 424px,#ff0017 432px,#ff0016 440px,#ff0014 448px,#ff0013 456px,#ff0012 464px,#ff0011 472px,#ff0011 480px,#ff0010 488px,#ff000f 496px,#ff000e 504px,#ff000e 512px,#ff000d 520px,#ff000c 528px,#ff000c 536px,#ff000b 544px,#ff000a 552px,#ff000a 560px,#ff0009 568px,#ff0009 576px,#ff0008 584px,#ff0008 592px,#ff0008 600px,#ff0007 608px,#ff0007 612px)"></i><i style="left:8px;top:100.0px;width:612px;background:linear-gradient(90deg,#00ff96 0px,#00ff97 8px,#00ff99 16px,#00ff9b 24px,#00ff9d 32px,#00ff9f 40px,#00ffa1 48px,#00ffa3 56px,#00ffa6 64px,#00ffa8 72px,#00ffab 80px,#00ffae 88px,#00ffb0 96px,#00ffb3 104px,#00ffb7 112px,#00ffba 120px,#00ffbe 128px,#07ffc1 136px,#1cffc5 144px,#35ffca 152px,#51ffce 160px,#71ffd3 168px,#94ffd8 176px,#baffde 184px,#e5ffe4 192px,#ffecd8 200px,#ffc7bc 208px,#ffa9a5 216px,#ff9292 224px,#ff7e83 232px,#ff6e76 240px,#ff606b 248px,#ff5462 256px,#ff4a5a 264px,#ff4153 272px,#ff394c 280px,#ff3247 288px,#ff2c42 296px,#ff273d 304px,#ff2239 312px,#ff1d35 320px,#ff1932 328px,#ff162f 336px,#ff132c 344px,#ff102a 352px,#ff0d27 360px,#ff0b25 368px,#ff0823 376px,#ff0621 384px,#ff051f 392px,#ff031e 400px,#ff021c 408px,#ff001b 416px,#ff0019 424px,#ff0018 432px,#ff0017 440px,#ff0016 448px,#ff0015 456px,#ff0014 464px,#ff0013 472px,#ff0012 480px,#ff0011 488px,#ff0010 496px,#ff000f 504px,#ff000f 512px,#ff000e 520px,#ff000d 528px,#ff000d 536px,#ff000c 544px,#ff000b 552px,#ff000b 560px,#ff000a 568px,#ff000a 576px,#ff0009 584px,#ff0009 592px,#ff0008 600px,#ff0008 608px,#ff0008 612px)"></i><i style="left:9px;top:102.0px;width:611px;background:linear-gradient(90deg,#00ff9b 0px,#00ff9d 8px,#00ff9f 16px,#00ffa1 24px,#00ffa3 32px,#00ffa5 40px,#00ffa7 48px,#00ffaa 56px,#00ffac 64px,#00ffaf 72px,#00ffb2 80px,#00ffb5 88px,#00ffb8 96px,#00ffbb 104px,#00ffbe 112px,#00ffc2 120px,#00ffc6 128px,#09ffca 136px,#1effce 144px,#38ffd3 152px,#54ffd8 160px,#75ffdd 168px,#98ffe3 176px,#c0ffe8 184px,#ebffef 192px,#ffe6dd 200px,#ffc2c0 208px,#ffa5a9 216px,#ff8e96 224px,#ff7b87 232px,#ff6b7a 240px,#ff5d6f 248px,#ff5265 256px,#ff485d 264px,#ff3f55 272px,#ff374f 280px,#ff3149 288px,#ff2b44 296px,#ff253f 304px,#ff203b 312px,#ff1c37 320px,#ff1834 328px,#ff1531 336px,#ff122e 344px,#ff0f2b 352px,#ff0c29 360px,#ff0a27 368px,#ff0825 376px,#ff0623 384px,#ff0421 392px,#ff021f 400px,#ff011d 408px,#ff001c 416px,#ff001b 424px,#ff0019 432px,#ff0018 440px,#ff0017 448px,#ff0016 456px,#ff0015 464px,#ff0014 472px,#ff0013 480px,#ff0012 488px,#ff0011 496px,#ff0010 504px,#ff000f 512px,#ff000f 520px,#ff000e 528px,#ff000d 536px,#ff000d 544px,#ff000c 552px,#ff000c 560px,#ff000b 568px,#ff000a 576px,#ff000a 584px,#ff0009 592px,#ff0009 600px,#ff0009 608px,#ff0008 611px)"></i><i style="left:10px;top:104.0px;width:608px;background:linear-gradient(90deg,#00ffa0 0px,#00ffa2 8px,#00ffa4 16px,#00ffa6 24px,#00ffa9 32px,#00ffab 40px,#00ffae 48px,#00ffb0 56px,#00ffb3 64px,#00ffb6 72px,#00ffb9 80px,#00ffbc 88px,#00ffbf 96px,#00ffc3 104px,#00ffc6 112px,#00ffca 120px,#00ffce 128px,#0affd3 136px,#21ffd7 144px,#3bffdc 152px,#58ffe2 160px,#79ffe7 168px,#9dffed 176px,#c6fff4 184px,#f2fffb 192px,#ffe0e2 200px,#ffbdc5 208px,#ffa1ad 216px,#ff8a9a 224px,#ff788b 232px,#ff687d 240px,#ff5b72 248px,#ff4f68 256px,#ff465f 264px,#ff3d58 272px,#ff3651 280px,#ff2f4c 288px,#ff2946 296px,#ff2442 304px,#ff1f3d 312px,#ff1b39 320px,#ff1736 328px,#ff1433 336px,#ff1130 344px,#ff0e2d 352px,#ff0b2b 360px,#ff0928 368px,#ff0726 376px,#ff0524 384px,#ff0322 392px,#ff0220 400px,#ff011f 408px,#ff001d 416px,#ff001c 424px,#ff001a 432px,#ff0019 440px,#ff0018 448px,#ff0017 456px,#ff0016 464px,#ff0015 472px,#ff0014 480px,#ff0013 488px,#ff0012 496px,#ff0011 504px,#ff0010 512px,#ff0010 520px,#ff000f 528px,#ff000e 536px,#ff000e 544px,#ff000d 552px,#ff000c 560px,#ff000c 568px,#ff000b 576px,#ff000b 584px,#ff000a 592px,#ff000a 600px,#ff0009 608px)"></i><i style="left:10px;top:106.0px;width:606px;background:linear-gradient(90deg,#00ffa5 0px,#00ffa8 8px,#00ffaa 16px,#00ffac 24px,#00ffae 32px,#00ffb1 40px,#00ffb4 48px,#00ffb6 56px,#00ffb9 64px,#00ffbc 72px,#00ffbf 80px,#00ffc3 88px,#00ffc6 96px,#00ffca 104px,#00ffce 112px,#00ffd2 120px,#00ffd7 128px,#0affdb 136px,#20ffe0 144px,#3affe5 152px,#58ffeb 160px,#79fff1 168px,#9efff8 176px,#c6fffe 184px,#edf8ff 192px,#ffdeeb 200px,#ffbbcd 208px,#ffa0b4 216px,#ff89a1 224px,#ff7790 232px,#ff6782 240px,#ff5a76 248px,#ff4f6c 256px,#ff4563 264px,#ff3c5c 272px,#ff3555 280px,#ff2e4f 288px,#ff2849 296px,#ff2344 304px,#ff1f40 312px,#ff1a3c 320px,#ff1738 328px,#ff1335 336px,#ff1032 344px,#ff0d2f 352px,#ff0b2c 360px,#ff092a 368px,#ff0728 376px,#ff0526 384px,#ff0324 392px,#ff0222 400px,#ff0020 408px,#ff001f 416px,#ff001d 424px,#ff001c 432px,#ff001b 440px,#ff0019 448px,#ff0018 456px,#ff0017 464px,#ff0016 472px,#ff0015 480px,#ff0014 488px,#ff0013 496px,#ff0012 504px,#ff0011 512px,#ff0011 520px,#ff0010 528px,#ff000f 536px,#ff000e 544px,#ff000e 552px,#ff000d 560px,#ff000d 568px,#ff000c 576px,#ff000b 584px,#ff000b 592px,#ff000a 600px,#ff000a 606px)"></i><i style="left:11px;top:108.0px;width:603px;background:linear-gradient(90deg,#00ffab 0px,#00ffad 8px,#00ffb0 16px,#00ffb2 24px,#00ffb5 32px,#00ffb7 40px,#00ffba 48px,#00ffbd 56px,#00ffc0 64px,#00ffc3 72px,#00ffc7 80px,#00ffca 88px,#00ffce 96px,#00ffd2 104px,#00ffd6 112px,#00ffdb 120px,#00ffdf 128px,#0bffe4 136px,#22ffea 144px,#3dffef 152px,#5bfff6 160px,#7dfffc 168px,#a0fbff 176px,#c3f4ff 184px,#e8edff 192px,#ffd8f0 200px,#ffb6d1 208px,#ff9bb9 216px,#ff85a4 224px,#ff7394 232px,#ff6486 240px,#ff577a 248px,#ff4c6f 256px,#ff4366 264px,#ff3b5e 272px,#ff3357 280px,#ff2d51 288px,#ff274c 296px,#ff2247 304px,#ff1d42 312px,#ff193e 320px,#ff163a 328px,#ff1237 336px,#ff0f34 344px,#ff0d31 352px,#ff0a2e 360px,#ff082c 368px,#ff0629 376px,#ff0427 384px,#ff0225 392px,#ff0123 400px,#ff0022 408px,#ff0020 416px,#ff001f 424px,#ff001d 432px,#ff001c 440px,#ff001a 448px,#ff0019 456px,#ff0018 464px,#ff0017 472px,#ff0016 480px,#ff0015 488px,#ff0014 496px,#ff0013 504px,#ff0012 512px,#ff0012 520px,#ff0011 528px,#ff0010 536px,#ff000f 544px,#ff000f 552px,#ff000e 560px,#ff000d 568px,#ff000d 576px,#ff000c 584px,#ff000c 592px,#ff000b 600px,#ff000b 603px)"></i><i style="left:12px;top:110.0px;width:600px;background:linear-gradient(90deg,#00ffb1 0px,#00ffb3 8px,#00ffb6 16px,#00ffb8 24px,#00ffbb 32px,#00ffbe 40px,#00ffc1 48px,#00ffc4 56px,#00ffc7 64px,#00ffcb 72px,#00ffce 80px,#00ffd2 88px,#00ffd6 96px,#00ffda 104px,#00ffdf 112px,#00ffe4 120px,#00ffe9 128px,#0dffee 136px,#25fff4 144px,#40fffa 152px,#5ffeff 160px,#7df7ff 168px,#9ef0ff 176px,#c0e9ff 184px,#e4e2ff 192px,#ffd2f5 200px,#ffb2d6 208px,#ff97bd 216px,#ff82a8 224px,#ff7097 232px,#ff6289 240px,#ff557d 248px,#ff4a72 256px,#ff4169 264px,#ff3961 272px,#ff325a 280px,#ff2b54 288px,#ff264e 296px,#ff2149 304px,#ff1c44 312px,#ff1840 320px,#ff153c 328px,#ff1139 336px,#ff0e35 344px,#ff0c33 352px,#ff0930 360px,#ff072d 368px,#ff052b 376px,#ff0429 384px,#ff0227 392px,#ff0125 400px,#ff0023 408px,#ff0021 416px,#ff0020 424px,#ff001e 432px,#ff001d 440px,#ff001c 448px,#ff001a 456px,#ff0019 464px,#ff0018 472px,#ff0017 480px,#ff0016 488px,#ff0015 496px,#ff0014 504px,#ff0013 512px,#ff0012 520px,#ff0012 528px,#ff0011 536px,#ff0010 544px,#ff000f 552px,#ff000f 560px,#ff000e 568px,#ff000e 576px,#ff000d 584px,#ff000c 592px,#ff000c 600px)"></i><i style="left:12px;top:112.0px;width:598px;background:linear-gradient(90deg,#00ffb6 0px,#00ffb9 8px,#00ffbb 16px,#00ffbe 24px,#00ffc1 32px,#00ffc4 40px,#00ffc7 48px,#00ffca 56px,#00ffce 64px,#00ffd2 72px,#00ffd5 80px,#00ffd9 88px,#00ffde 96px,#00ffe2 104px,#00ffe7 112px,#00ffec 120px,#00fff1 128px,#0dfff7 136px,#24fffd 144px,#3efbff 152px,#5bf4ff 160px,#79edff 168px,#98e7ff 176px,#b9e0ff 184px,#dcd9ff 192px,#ffd1fe 200px,#ffb0de 208px,#ff96c4 216px,#ff81af 224px,#ff6f9d 232px,#ff618e 240px,#ff5481 248px,#ff4977 256px,#ff406d 264px,#ff3865 272px,#ff315d 280px,#ff2b57 288px,#ff2551 296px,#ff204c 304px,#ff1c47 312px,#ff1843 320px,#ff143f 328px,#ff113b 336px,#ff0e38 344px,#ff0b35 352px,#ff0932 360px,#ff072f 368px,#ff052d 376px,#ff032b 384px,#ff0228 392px,#ff0026 400px,#ff0025 408px,#ff0023 416px,#ff0021 424px,#ff0020 432px,#ff001e 440px,#ff001d 448px,#ff001c 456px,#ff001a 464px,#ff0019 472px,#ff0018 480px,#ff0017 488px,#ff0016 496px,#ff0015 504px,#ff0014 512px,#ff0013 520px,#ff0013 528px,#ff0012 536px,#ff0011 544px,#ff0010 552px,#ff0010 560px,#ff000f 568px,#ff000e 576px,#ff000e 584px,#ff000d 592px,#ff000d 598px)"></i><i style="left:13px;top:114.0px;width:595px;background:linear-gradient(90deg,#00ffbc 0px,#00ffbf 8px,#00ffc2 16px,#00ffc4 24px,#00ffc7 32px,#00ffcb 40px,#00ffce 48px,#00ffd2 56px,#00ffd5 64px,#00ffd9 72px,#00ffdd 80px,#00ffe1 88px,#00ffe6 96px,#00ffeb 104px,#00fff0 112px,#00fff5 120px,#00fffb 128px,#0efdff 136px,#25f7ff 144px,#3ff0ff 152px,#5aeaff 160px,#78e4ff 168px,#96ddff 176px,#b7d6ff 184px,#d8cfff 192px,#fbc9ff 200px,#fface2 208px,#ff92c8 216px,#ff7db2 224px,#ff6ca1 232px,#ff5e91 240px,#ff5285 248px,#ff477a 256px,#ff3e70 264px,#ff3667 272px,#ff2f60 280px,#ff2959 288px,#ff2453 296px,#ff1f4e 304px,#ff1b49 312px,#ff1745 320px,#ff1341 328px,#ff103d 336px,#ff0d39 344px,#ff0b36 352px,#ff0833 360px,#ff0631 368px,#ff042e 376px,#ff032c 384px,#ff012a 392px,#ff0028 400px,#ff0026 408px,#ff0024 416px,#ff0023 424px,#ff0021 432px,#ff001f 440px,#ff001e 448px,#ff001d 456px,#ff001c 464px,#ff001a 472px,#ff0019 480px,#ff0018 488px,#ff0017 496px,#ff0016 504px,#ff0015 512px,#ff0014 520px,#ff0014 528px,#ff0013 536px,#ff0012 544px,#ff0011 552px,#ff0011 560px,#ff0010 568px,#ff000f 576px,#ff000f 584px,#ff000e 592px,#ff000e 595px)"></i><i style="left:14px;top:116.0px;width:592px;background:linear-gradient(90deg,#00ffc2 0px,#00ffc5 8px,#00ffc8 16px,#00ffcb 24px,#00ffce 32px,#00ffd2 40px,#00ffd5 48px,#00ffd9 56px,#00ffdd 64px,#00ffe1 72px,#00ffe5 80px,#00ffea 88px,#00ffef 96px,#00fff4 104px,#00fff9 112px,#00ffff 120px,#00f9ff 128px,#10f3ff 136px,#26edff 144px,#3fe7ff 152px,#5ae1ff 160px,#77daff 168px,#95d4ff 176px,#b4cdff 184px,#d5c6ff 192px,#f7c0ff 200px,#ffa7e6 208px,#ff8ecc 216px,#ff7ab6 224px,#ff69a4 232px,#ff5b95 240px,#ff4f88 248px,#ff457d 256px,#ff3c73 264px,#ff346a 272px,#ff2e62 280px,#ff285c 288px,#ff2256 296px,#ff1e50 304px,#ff194b 312px,#ff1647 320px,#ff1242 328px,#ff0f3f 336px,#ff0c3b 344px,#ff0a38 352px,#ff0835 360px,#ff0532 368px,#ff0430 376px,#ff022d 384px,#ff012b 392px,#ff0029 400px,#ff0027 408px,#ff0025 416px,#ff0024 424px,#ff0022 432px,#ff0021 440px,#ff001f 448px,#ff001e 456px,#ff001d 464px,#ff001b 472px,#ff001a 480px,#ff0019 488px,#ff0018 496px,#ff0017 504px,#ff0016 512px,#ff0015 520px,#ff0014 528px,#ff0014 536px,#ff0013 544px,#ff0012 552px,#ff0011 560px,#ff0011 568px,#ff0010 576px,#ff000f 584px,#ff000f 592px)"></i><i style="left:14px;top:118.0px;width:590px;background:linear-gradient(90deg,#00ffc8 0px,#00ffcb 8px,#00ffce 16px,#00ffd1 24px,#00ffd4 32px,#00ffd8 40px,#00ffdc 48px,#00ffe0 56px,#00ffe4 64px,#00ffe8 72px,#00ffed 80px,#00fff2 88px,#00fff7 96px,#00fffc 104px,#00fcff 112px,#00f7ff 120px,#00f1ff 128px,#0febff 136px,#24e5ff 144px,#3ddfff 152px,#57d8ff 160px,#72d2ff 168px,#90ccff 176px,#aec5ff 184px,#cebfff 192px,#efb8ff 200px,#ffa6ee 208px,#ff8dd3 216px,#ff79bc 224px,#ff68aa 232px,#ff5a9a 240px,#ff4e8c 248px,#ff4481 256px,#ff3b77 264px,#ff346e 272px,#ff2d66 280px,#ff275f 288px,#ff2259 296px,#ff1d53 304px,#ff194e 312px,#ff1549 320px,#ff1245 328px,#ff0f41 336px,#ff0c3d 344px,#ff093a 352px,#ff0737 360px,#ff0534 368px,#ff0332 376px,#ff022f 384px,#ff002d 392px,#ff002b 400px,#ff0029 408px,#ff0027 416px,#ff0025 424px,#ff0024 432px,#ff0022 440px,#ff0021 448px,#ff001f 456px,#ff001e 464px,#ff001d 472px,#ff001b 480px,#ff001a 488px,#ff0019 496px,#ff0018 504px,#ff0017 512px,#ff0016 520px,#ff0015 528px,#ff0015 536px,#ff0014 544px,#ff0013 552px,#ff0012 560px,#ff0012 568px,#ff0011 576px,#ff0010 584px,#ff0010 590px)"></i><i style="left:15px;top:120.0px;width:587px;background:linear-gradient(90deg,#00ffce 0px,#00ffd1 8px,#00ffd4 16px,#00ffd8 24px,#00ffdb 32px,#00ffdf 40px,#00ffe3 48px,#00ffe7 56px,#00ffec 64px,#00fff0 72px,#00fff5 80px,#00fffa 88px,#00ffff 96px,#00f9ff 104px,#00f3ff 112px,#00eeff 120px,#00e8ff 128px,#10e2ff 136px,#25dcff 144px,#3dd6ff 152px,#57d0ff 160px,#72caff 168px,#8ec3ff 176px,#acbdff 184px,#cbb7ff 192px,#ebb0ff 200px,#ffa1f2 208px,#ff89d7 216px,#ff75c0 224px,#ff65ad 232px,#ff589d 240px,#ff4c90 248px,#ff4284 256px,#ff397a 264px,#ff3270 272px,#ff2b68 280px,#ff2661 288px,#ff205b 296px,#ff1c55 304px,#ff1850 312px,#ff144b 320px,#ff1147 328px,#ff0e43 336px,#ff0b3f 344px,#ff093c 352px,#ff0639 360px,#ff0436 368px,#ff0333 376px,#ff0131 384px,#ff002e 392px,#ff002c 400px,#ff002a 408px,#ff0028 416px,#ff0027 424px,#ff0025 432px,#ff0023 440px,#ff0022 448px,#ff0020 456px,#ff001f 464px,#ff001e 472px,#ff001c 480px,#ff001b 488px,#ff001a 496px,#ff0019 504px,#ff0018 512px,#ff0017 520px,#ff0016 528px,#ff0015 536px,#ff0015 544px,#ff0014 552px,#ff0013 560px,#ff0012 568px,#ff0012 576px,#ff0011 584px,#ff0011 587px)"></i><i style="left:16px;top:122.0px;width:585px;background:linear-gradient(90deg,#00ffd4 0px,#00ffd8 8px,#00ffdb 16px,#00ffdf 24px,#00ffe2 32px,#00ffe6 40px,#00ffeb 48px,#00ffef 56px,#00fff4 64px,#00fff8 72px,#00fffe 80px,#00fbff 88px,#00f6ff 96px,#00f0ff 104px,#00ebff 112px,#00e5ff 120px,#00dfff 128px,#11daff 136px,#26d4ff 144px,#3eceff 152px,#57c8ff 160px,#71c2ff 168px,#8dbbff 176px,#aab5ff 184px,#c8afff 192px,#e7a8ff 200px,#ff9df6 208px,#ff85db 216px,#ff72c4 224px,#ff62b1 232px,#ff55a1 240px,#ff4a93 248px,#ff4087 256px,#ff387c 264px,#ff3073 272px,#ff2a6b 280px,#ff2464 288px,#ff1f5d 296px,#ff1b57 304px,#ff1752 312px,#ff134d 320px,#ff1049 328px,#ff0d45 336px,#ff0a41 344px,#ff083e 352px,#ff063a 360px,#ff0438 368px,#ff0235 376px,#ff0132 384px,#ff0030 392px,#ff002e 400px,#ff002c 408px,#ff002a 416px,#ff0028 424px,#ff0026 432px,#ff0024 440px,#ff0023 448px,#ff0021 456px,#ff0020 464px,#ff001f 472px,#ff001e 480px,#ff001c 488px,#ff001b 496px,#ff001a 504px,#ff0019 512px,#ff0018 520px,#ff0017 528px,#ff0016 536px,#ff0015 544px,#ff0015 552px,#ff0014 560px,#ff0013 568px,#ff0012 576px,#ff0012 584px,#ff0012 585px)"></i><i style="left:16px;top:124.0px;width:583px;background:linear-gradient(90deg,#00ffda 0px,#00ffde 8px,#00ffe1 16px,#00ffe5 24px,#00ffe9 32px,#00ffed 40px,#00fff2 48px,#00fff6 56px,#00fffb 64px,#00feff 72px,#00f9ff 80px,#00f3ff 88px,#00eeff 96px,#00e9ff 104px,#00e3ff 112px,#00deff 120px,#00d8ff 128px,#10d2ff 136px,#25ccff 144px,#3bc7ff 152px,#53c1ff 160px,#6dbbff 168px,#88b5ff 176px,#a4afff 184px,#c2a8ff 192px,#e0a2ff 200px,#ff9bfe 208px,#ff84e2 216px,#ff71ca 224px,#ff61b6 232px,#ff54a6 240px,#ff4997 248px,#ff3f8b 256px,#ff3780 264px,#ff2f77 272px,#ff296e 280px,#ff2367 288px,#ff1e60 296px,#ff1a5a 304px,#ff1655 312px,#ff1250 320px,#ff0f4b 328px,#ff0c47 336px,#ff0a43 344px,#ff0740 352px,#ff053c 360px,#ff0339 368px,#ff0237 376px,#ff0034 384px,#ff0032 392px,#ff002f 400px,#ff002d 408px,#ff002b 416px,#ff0029 424px,#ff0028 432px,#ff0026 440px,#ff0024 448px,#ff0023 456px,#ff0021 464px,#ff0020 472px,#ff001f 480px,#ff001e 488px,#ff001c 496px,#ff001b 504px,#ff001a 512px,#ff0019 520px,#ff0018 528px,#ff0017 536px,#ff0016 544px,#ff0016 552px,#ff0015 560px,#ff0014 568px,#ff0013 576px,#ff0013 583px)"></i><i style="left:17px;top:126.0px;width:580px;background:linear-gradient(90deg,#00ffe1 0px,#00ffe4 8px,#00ffe8 16px,#00ffec 24px,#00fff0 32px,#00fff5 40px,#00fff9 48px,#00fffe 56px,#00fbff 64px,#00f6ff 72px,#00f0ff 80px,#00ebff 88px,#00e6ff 96px,#00e1ff 104px,#00dbff 112px,#00d6ff 120px,#00d0ff 128px,#11cbff 136px,#25c5ff 144px,#3cbfff 152px,#53b9ff 160px,#6db3ff 168px,#87adff 176px,#a3a7ff 184px,#bfa1ff 192px,#dd9bff 200px,#fc95ff 208px,#ff80e5 216px,#ff6ece 224px,#ff5eba 232px,#ff52a9 240px,#ff479a 248px,#ff3d8e 256px,#ff3583 264px,#ff2e79 272px,#ff2871 280px,#ff2269 288px,#ff1d63 296px,#ff195c 304px,#ff1557 312px,#ff1152 320px,#ff0e4d 328px,#ff0b49 336px,#ff0945 344px,#ff0741 352px,#ff053e 360px,#ff033b 368px,#ff0138 376px,#ff0036 384px,#ff0033 392px,#ff0031 400px,#ff002f 408px,#ff002d 416px,#ff002b 424px,#ff0029 432px,#ff0027 440px,#ff0025 448px,#ff0024 456px,#ff0022 464px,#ff0021 472px,#ff0020 480px,#ff001f 488px,#ff001d 496px,#ff001c 504px,#ff001b 512px,#ff001a 520px,#ff0019 528px,#ff0018 536px,#ff0017 544px,#ff0016 552px,#ff0016 560px,#ff0015 568px,#ff0014 576px,#ff0014 580px)"></i><i style="left:18px;top:128.0px;width:577px;background:linear-gradient(90deg,#00ffe7 0px,#00ffeb 8px,#00ffef 16px,#00fff4 24px,#00fff8 32px,#00fffd 40px,#00fdff 48px,#00f8ff 56px,#00f3ff 64px,#00eeff 72px,#00e9ff 80px,#00e3ff 88px,#00deff 96px,#00d9ff 104px,#00d4ff 112px,#00ceff 120px,#02c9ff 128px,#12c3ff 136px,#26beff 144px,#3cb8ff 152px,#54b2ff 160px,#6cacff 168px,#86a7ff 176px,#a1a1ff 184px,#bd9bff 192px,#da95ff 200px,#f88eff 208px,#ff7de9 216px,#ff6bd1 224px,#ff5cbd 232px,#ff4fac 240px,#ff449d 248px,#ff3b91 256px,#ff3386 264px,#ff2c7c 272px,#ff2673 280px,#ff216c 288px,#ff1c65 296px,#ff185f 304px,#ff1459 312px,#ff1054 320px,#ff0d4f 328px,#ff0b4b 336px,#ff0847 344px,#ff0643 352px,#ff0440 360px,#ff023d 368px,#ff013a 376px,#ff0037 384px,#ff0035 392px,#ff0032 400px,#ff0030 408px,#ff002e 416px,#ff002c 424px,#ff002a 432px,#ff0028 440px,#ff0027 448px,#ff0025 456px,#ff0024 464px,#ff0022 472px,#ff0021 480px,#ff0020 488px,#ff001e 496px,#ff001d 504px,#ff001c 512px,#ff001b 520px,#ff001a 528px,#ff0019 536px,#ff0018 544px,#ff0017 552px,#ff0016 560px,#ff0016 568px,#ff0015 576px,#ff0015 577px)"></i><i style="left:18px;top:130.0px;width:575px;background:linear-gradient(90deg,#00ffee 0px,#00fff2 8px,#00fff6 16px,#00fffa 24px,#00ffff 32px,#00faff 40px,#00f6ff 48px,#00f1ff 56px,#00ecff 64px,#00e7ff 72px,#00e2ff 80px,#00ddff 88px,#00d8ff 96px,#00d2ff 104px,#00cdff 112px,#00c8ff 120px,#01c2ff 128px,#11bdff 136px,#25b7ff 144px,#3ab2ff 152px,#51acff 160px,#69a7ff 168px,#82a1ff 176px,#9c9bff 184px,#b795ff 192px,#d38fff 200px,#f089ff 208px,#ff7bf0 216px,#ff69d8 224px,#ff5bc3 232px,#ff4eb1 240px,#ff43a2 248px,#ff3a95 256px,#ff328a 264px,#ff2b80 272px,#ff2577 280px,#ff206f 288px,#ff1b68 296px,#ff1761 304px,#ff135c 312px,#ff1056 320px,#ff0d52 328px,#ff0a4d 336px,#ff0849 344px,#ff0545 352px,#ff0442 360px,#ff023f 368px,#ff003c 376px,#ff0039 384px,#ff0036 392px,#ff0034 400px,#ff0032 408px,#ff002f 416px,#ff002d 424px,#ff002b 432px,#ff002a 440px,#ff0028 448px,#ff0026 456px,#ff0025 464px,#ff0023 472px,#ff0022 480px,#ff0021 488px,#ff0020 496px,#ff001e 504px,#ff001d 512px,#ff001c 520px,#ff001b 528px,#ff001a 536px,#ff0019 544px,#ff0018 552px,#ff0017 560px,#ff0017 568px,#ff0016 575px)"></i><i style="left:19px;top:132.0px;width:572px;background:linear-gradient(90deg,#00fff5 0px,#00fff9 8px,#00fffd 16px,#00fcff 24px,#00f8ff 32px,#00f3ff 40px,#00eeff 48px,#00e9ff 56px,#00e4ff 64px,#00e0ff 72px,#00dbff 80px,#00d6ff 88px,#00d0ff 96px,#00cbff 104px,#00c6ff 112px,#00c1ff 120px,#02bcff 128px,#12b6ff 136px,#25b1ff 144px,#3aabff 152px,#51a6ff 160px,#68a0ff 168px,#819aff 176px,#9a95ff 184px,#b58fff 192px,#d189ff 200px,#ed83ff 208px,#ff78f4 216px,#ff66db 224px,#ff58c6 232px,#ff4cb4 240px,#ff41a5 248px,#ff3898 256px,#ff318d 264px,#ff2a82 272px,#ff2479 280px,#ff1f71 288px,#ff1a6a 296px,#ff1664 304px,#ff125e 312px,#ff0f58 320px,#ff0c53 328px,#ff094f 336px,#ff074b 344px,#ff0547 352px,#ff0344 360px,#ff0140 368px,#ff003d 376px,#ff003a 384px,#ff0038 392px,#ff0035 400px,#ff0033 408px,#ff0031 416px,#ff002f 424px,#ff002d 432px,#ff002b 440px,#ff0029 448px,#ff0028 456px,#ff0026 464px,#ff0025 472px,#ff0023 480px,#ff0022 488px,#ff0021 496px,#ff001f 504px,#ff001e 512px,#ff001d 520px,#ff001c 528px,#ff001b 536px,#ff001a 544px,#ff0019 552px,#ff0018 560px,#ff0017 568px,#ff0017 572px)"></i><i style="left:20px;top:134.0px;width:569px;background:linear-gradient(90deg,#00fffc 0px,#00feff 8px,#00f9ff 16px,#00f5ff 24px,#00f0ff 32px,#00ecff 40px,#00e7ff 48px,#00e2ff 56px,#00ddff 64px,#00d9ff 72px,#00d4ff 80px,#00cfff 88px,#00caff 96px,#00c5ff 104px,#00bfff 112px,#00baff 120px,#03b5ff 128px,#13b0ff 136px,#26aaff 144px,#3ba5ff 152px,#51a0ff 160px,#689aff 168px,#8094ff 176px,#998fff 184px,#b389ff 192px,#ce83ff 200px,#ea7eff 208px,#ff74f8 216px,#ff63de 224px,#ff55c9 232px,#ff49b8 240px,#ff3fa8 248px,#ff369b 256px,#ff2f8f 264px,#ff2885 272px,#ff227c 280px,#ff1d74 288px,#ff196c 296px,#ff1566 304px,#ff1160 312px,#ff0e5a 320px,#ff0b55 328px,#ff0851 336px,#ff064d 344px,#ff0449 352px,#ff0245 360px,#ff0142 368px,#ff003f 376px,#ff003c 384px,#ff0039 392px,#ff0037 400px,#ff0034 408px,#ff0032 416px,#ff0030 424px,#ff002e 432px,#ff002c 440px,#ff002a 448px,#ff0029 456px,#ff0027 464px,#ff0026 472px,#ff0024 480px,#ff0023 488px,#ff0022 496px,#ff0020 504px,#ff001f 512px,#ff001e 520px,#ff001d 528px,#ff001c 536px,#ff001b 544px,#ff001a 552px,#ff0019 560px,#ff0018 568px,#ff0018 569px)"></i><i style="left:21px;top:136.0px;width:566px;background:linear-gradient(90deg,#00fbff 0px,#00f7ff 8px,#00f2ff 16px,#00eeff 24px,#00e9ff 32px,#00e5ff 40px,#00e0ff 48px,#00dbff 56px,#00d7ff 64px,#00d2ff 72px,#00cdff 80px,#00c8ff 88px,#00c3ff 96px,#00beff 104px,#00b9ff 112px,#00b4ff 120px,#04afff 128px,#14aaff 136px,#27a4ff 144px,#3b9fff 152px,#519aff 160px,#6794ff 168px,#7f8fff 176px,#9889ff 184px,#b184ff 192px,#cb7eff 200px,#e778ff 208px,#ff71fb 216px,#ff60e2 224px,#ff53cd 232px,#ff47bb 240px,#ff3dab 248px,#ff359e 256px,#ff2d92 264px,#ff2788 272px,#ff217e 280px,#ff1c76 288px,#ff186f 296px,#ff1468 304px,#ff1062 312px,#ff0d5c 320px,#ff0a57 328px,#ff0853 336px,#ff054e 344px,#ff034a 352px,#ff0247 360px,#ff0043 368px,#ff0040 376px,#ff003d 384px,#ff003b 392px,#ff0038 400px,#ff0036 408px,#ff0033 416px,#ff0031 424px,#ff002f 432px,#ff002d 440px,#ff002c 448px,#ff002a 456px,#ff0028 464px,#ff0027 472px,#ff0025 480px,#ff0024 488px,#ff0023 496px,#ff0021 504px,#ff0020 512px,#ff001f 520px,#ff001e 528px,#ff001d 536px,#ff001c 544px,#ff001b 552px,#ff001a 560px,#ff0019 566px)"></i><i style="left:22px;top:138.0px;width:563px;background:linear-gradient(90deg,#00f4ff 0px,#00f0ff 8px,#00ebff 16px,#00e7ff 24px,#00e3ff 32px,#00deff 40px,#00d9ff 48px,#00d5ff 56px,#00d0ff 64px,#00cbff 72px,#00c7ff 80px,#00c2ff 88px,#00bdff 96px,#00b8ff 104px,#00b3ff 112px,#00aeff 120px,#05a9ff 128px,#15a4ff 136px,#289fff 144px,#3c99ff 152px,#5194ff 160px,#678fff 168px,#7e89ff 176px,#9684ff 184px,#af7eff 192px,#c979ff 200px,#e473ff 208px,#ff6dff 216px,#ff5de5 224px,#ff50d0 232px,#ff45be 240px,#ff3bae 248px,#ff33a0 256px,#ff2b95 264px,#ff258a 272px,#ff2081 280px,#ff1b78 288px,#ff1671 296px,#ff136a 304px,#ff0f64 312px,#ff0c5e 320px,#ff0959 328px,#ff0754 336px,#ff0550 344px,#ff034c 352px,#ff0148 360px,#ff0045 368px,#ff0042 376px,#ff003f 384px,#ff003c 392px,#ff0039 400px,#ff0037 408px,#ff0035 416px,#ff0032 424px,#ff0030 432px,#ff002f 440px,#ff002d 448px,#ff002b 456px,#ff0029 464px,#ff0028 472px,#ff0026 480px,#ff0025 488px,#ff0024 496px,#ff0022 504px,#ff0021 512px,#ff0020 520px,#ff001f 528px,#ff001e 536px,#ff001d 544px,#ff001c 552px,#ff001b 560px,#ff001a 563px)"></i><i style="left:22px;top:140.0px;width:561px;background:linear-gradient(90deg,#00eeff 0px,#00eaff 8px,#00e5ff 16px,#00e1ff 24px,#00ddff 32px,#00d8ff 40px,#00d4ff 48px,#00cfff 56px,#00caff 64px,#00c6ff 72px,#00c1ff 80px,#00bcff 88px,#00b7ff 96px,#00b3ff 104px,#00aeff 112px,#00a9ff 120px,#05a4ff 128px,#149fff 136px,#269aff 144px,#3a94ff 152px,#4e8fff 160px,#648aff 168px,#7b85ff 176px,#927fff 184px,#aa7aff 192px,#c474ff 200px,#de6fff 208px,#f869ff 216px,#ff5cec 224px,#ff4fd6 232px,#ff44c3 240px,#ff3ab3 248px,#ff32a5 256px,#ff2b99 264px,#ff248e 272px,#ff1f84 280px,#ff1a7c 288px,#ff1674 296px,#ff126d 304px,#ff0f67 312px,#ff0c61 320px,#ff095c 328px,#ff0657 336px,#ff0452 344px,#ff024e 352px,#ff014b 360px,#ff0047 368px,#ff0044 376px,#ff0041 384px,#ff003e 392px,#ff003b 400px,#ff0039 408px,#ff0036 416px,#ff0034 424px,#ff0032 432px,#ff0030 440px,#ff002e 448px,#ff002c 456px,#ff002b 464px,#ff0029 472px,#ff0028 480px,#ff0026 488px,#ff0025 496px,#ff0023 504px,#ff0022 512px,#ff0021 520px,#ff0020 528px,#ff001f 536px,#ff001e 544px,#ff001d 552px,#ff001c 560px,#ff001c 561px)"></i><i style="left:23px;top:142.0px;width:558px;background:linear-gradient(90deg,#00e8ff 0px,#00e3ff 8px,#00dfff 16px,#00dbff 24px,#00d6ff 32px,#00d2ff 40px,#00cdff 48px,#00c9ff 56px,#00c4ff 64px,#00c0ff 72px,#00bbff 80px,#00b6ff 88px,#00b2ff 96px,#00adff 104px,#00a8ff 112px,#00a3ff 120px,#069eff 128px,#1599ff 136px,#2794ff 144px,#3a8fff 152px,#4e8aff 160px,#6485ff 168px,#7a80ff 176px,#917aff 184px,#a975ff 192px,#c170ff 200px,#db6aff 208px,#f565ff 216px,#ff59ef 224px,#ff4cd9 232px,#ff41c6 240px,#ff38b6 248px,#ff30a8 256px,#ff299b 264px,#ff2390 272px,#ff1e87 280px,#ff197e 288px,#ff1576 296px,#ff116f 304px,#ff0e69 312px,#ff0b63 320px,#ff085e 328px,#ff0659 336px,#ff0454 344px,#ff0250 352px,#ff004c 360px,#ff0049 368px,#ff0045 376px,#ff0042 384px,#ff003f 392px,#ff003d 400px,#ff003a 408px,#ff0038 416px,#ff0035 424px,#ff0033 432px,#ff0031 440px,#ff002f 448px,#ff002d 456px,#ff002c 464px,#ff002a 472px,#ff0029 480px,#ff0027 488px,#ff0026 496px,#ff0024 504px,#ff0023 512px,#ff0022 520px,#ff0021 528px,#ff0020 536px,#ff001f 544px,#ff001e 552px,#ff001d 558px)"></i><i style="left:24px;top:144.0px;width:555px;background:linear-gradient(90deg,#00e1ff 0px,#00ddff 8px,#00d9ff 16px,#00d5ff 24px,#00d0ff 32px,#00ccff 40px,#00c8ff 48px,#00c3ff 56px,#00bfff 64px,#00baff 72px,#00b5ff 80px,#00b1ff 88px,#00acff 96px,#00a7ff 104px,#00a3ff 112px,#009eff 120px,#0799ff 128px,#1694ff 136px,#288fff 144px,#3b8aff 152px,#4e85ff 160px,#6380ff 168px,#797bff 176px,#9076ff 184px,#a770ff 192px,#bf6bff 200px,#d866ff 208px,#f260ff 216px,#ff56f2 224px,#ff4adc 232px,#ff3fc9 240px,#ff36b9 248px,#ff2eaa 256px,#ff279e 264px,#ff2193 272px,#ff1c89 280px,#ff1880 288px,#ff1378 296px,#ff1071 304px,#ff0d6b 312px,#ff0a65 320px,#ff075f 328px,#ff055b 336px,#ff0356 344px,#ff0152 352px,#ff004e 360px,#ff004a 368px,#ff0047 376px,#ff0044 384px,#ff0041 392px,#ff003e 400px,#ff003b 408px,#ff0039 416px,#ff0037 424px,#ff0034 432px,#ff0032 440px,#ff0030 448px,#ff002f 456px,#ff002d 464px,#ff002b 472px,#ff002a 480px,#ff0028 488px,#ff0027 496px,#ff0025 504px,#ff0024 512px,#ff0023 520px,#ff0022 528px,#ff0021 536px,#ff001f 544px,#ff001e 552px,#ff001e 555px)"></i><i style="left:25px;top:146.0px;width:552px;background:linear-gradient(90deg,#00dbff 0px,#00d7ff 8px,#00d3ff 16px,#00cfff 24px,#00cbff 32px,#00c6ff 40px,#00c2ff 48px,#00bdff 56px,#00b9ff 64px,#00b4ff 72px,#00b0ff 80px,#00abff 88px,#00a7ff 96px,#00a2ff 104px,#009dff 112px,#0099ff 120px,#0894ff 128px,#178fff 136px,#288aff 144px,#3b85ff 152px,#4f80ff 160px,#637bff 168px,#7876ff 176px,#8f71ff 184px,#a66cff 192px,#bd67ff 200px,#d661ff 208px,#ef5cff 216px,#ff54f5 224px,#ff47df 232px,#ff3dcc 240px,#ff34bb 248px,#ff2cad 256px,#ff26a0 264px,#ff2095 272px,#ff1b8b 280px,#ff1683 288px,#ff127b 296px,#ff0f73 304px,#ff0c6d 312px,#ff0967 320px,#ff0661 328px,#ff045c 336px,#ff0258 344px,#ff0153 352px,#ff004f 360px,#ff004c 368px,#ff0048 376px,#ff0045 384px,#ff0042 392px,#ff003f 400px,#ff003d 408px,#ff003a 416px,#ff0038 424px,#ff0036 432px,#ff0034 440px,#ff0032 448px,#ff0030 456px,#ff002e 464px,#ff002c 472px,#ff002b 480px,#ff0029 488px,#ff0028 496px,#ff0026 504px,#ff0025 512px,#ff0024 520px,#ff0023 528px,#ff0021 536px,#ff0020 544px,#ff001f 552px)"></i><i style="left:25px;top:148.0px;width:550px;background:linear-gradient(90deg,#00d6ff 0px,#00d2ff 8px,#00ceff 16px,#00caff 24px,#00c5ff 32px,#00c1ff 40px,#00bdff 48px,#00b8ff 56px,#00b4ff 64px,#00b0ff 72px,#00abff 80px,#00a7ff 88px,#00a2ff 96px,#009dff 104px,#0099ff 112px,#0094ff 120px,#078fff 128px,#168bff 136px,#2786ff 144px,#3981ff 152px,#4c7cff 160px,#6077ff 168px,#7572ff 176px,#8b6dff 184px,#a168ff 192px,#b863ff 200px,#d05eff 208px,#e959ff 216px,#ff53fc 224px,#ff46e5 232px,#ff3cd1 240px,#ff33c0 248px,#ff2cb1 256px,#ff25a5 264px,#ff1f99 272px,#ff1a8f 280px,#ff1686 288px,#ff127e 296px,#ff0e76 304px,#ff0b70 312px,#ff0869 320px,#ff0664 328px,#ff045f 336px,#ff025a 344px,#ff0056 352px,#ff0052 360px,#ff004e 368px,#ff004a 376px,#ff0047 384px,#ff0044 392px,#ff0041 400px,#ff003e 408px,#ff003c 416px,#ff0039 424px,#ff0037 432px,#ff0035 440px,#ff0033 448px,#ff0031 456px,#ff002f 464px,#ff002e 472px,#ff002c 480px,#ff002a 488px,#ff0029 496px,#ff0028 504px,#ff0026 512px,#ff0025 520px,#ff0024 528px,#ff0023 536px,#ff0021 544px,#ff0021 550px)"></i><i style="left:26px;top:150.0px;width:547px;background:linear-gradient(90deg,#00d1ff 0px,#00ccff 8px,#00c8ff 16px,#00c4ff 24px,#00c0ff 32px,#00bcff 40px,#00b7ff 48px,#00b3ff 56px,#00afff 64px,#00aaff 72px,#00a6ff 80px,#00a2ff 88px,#009dff 96px,#0098ff 104px,#0094ff 112px,#008fff 120px,#088bff 128px,#1786ff 136px,#2881ff 144px,#397cff 152px,#4c78ff 160px,#6073ff 168px,#756eff 176px,#8a69ff 184px,#a064ff 192px,#b75fff 200px,#ce5aff 208px,#e655ff 216px,#ff50ff 224px,#ff44e8 232px,#ff3ad4 240px,#ff31c3 248px,#ff2ab4 256px,#ff23a7 264px,#ff1e9c 272px,#ff1991 280px,#ff1488 288px,#ff1180 296px,#ff0d78 304px,#ff0a72 312px,#ff086b 320px,#ff0566 328px,#ff0361 336px,#ff015c 344px,#ff0057 352px,#ff0053 360px,#ff004f 368px,#ff004c 376px,#ff0048 384px,#ff0045 392px,#ff0042 400px,#ff0040 408px,#ff003d 416px,#ff003b 424px,#ff0038 432px,#ff0036 440px,#ff0034 448px,#ff0032 456px,#ff0030 464px,#ff002f 472px,#ff002d 480px,#ff002b 488px,#ff002a 496px,#ff0029 504px,#ff0027 512px,#ff0026 520px,#ff0025 528px,#ff0023 536px,#ff0022 544px,#ff0022 547px)"></i><i style="left:27px;top:152.0px;width:544px;background:linear-gradient(90deg,#00cbff 0px,#00c7ff 8px,#00c3ff 16px,#00bfff 24px,#00bbff 32px,#00b7ff 40px,#00b2ff 48px,#00aeff 56px,#00aaff 64px,#00a5ff 72px,#00a1ff 80px,#009dff 88px,#0098ff 96px,#0094ff 104px,#008fff 112px,#008bff 120px,#0986ff 128px,#1881ff 136px,#287dff 144px,#3a78ff 152px,#4c73ff 160px,#606eff 168px,#746aff 176px,#8965ff 184px,#9f60ff 192px,#b55bff 200px,#cc56ff 208px,#e451ff 216px,#fc4cff 224px,#ff41eb 232px,#ff38d7 240px,#ff2fc6 248px,#ff28b7 256px,#ff22aa 264px,#ff1c9e 272px,#ff1894 280px,#ff138a 288px,#ff1082 296px,#ff0c7a 304px,#ff0974 312px,#ff076d 320px,#ff0468 328px,#ff0262 336px,#ff015d 344px,#ff0059 352px,#ff0055 360px,#ff0051 368px,#ff004d 376px,#ff004a 384px,#ff0047 392px,#ff0044 400px,#ff0041 408px,#ff003e 416px,#ff003c 424px,#ff003a 432px,#ff0037 440px,#ff0035 448px,#ff0033 456px,#ff0032 464px,#ff0030 472px,#ff002e 480px,#ff002d 488px,#ff002b 496px,#ff002a 504px,#ff0028 512px,#ff0027 520px,#ff0026 528px,#ff0024 536px,#ff0023 544px)"></i><i style="left:28px;top:154.0px;width:541px;background:linear-gradient(90deg,#00c6ff 0px,#00c2ff 8px,#00beff 16px,#00baff 24px,#00b6ff 32px,#00b1ff 40px,#00adff 48px,#00a9ff 56px,#00a5ff 64px,#00a1ff 72px,#009cff 80px,#0098ff 88px,#0093ff 96px,#008fff 104px,#008bff 112px,#0086ff 120px,#0a82ff 128px,#197dff 136px,#2978ff 144px,#3a74ff 152px,#4d6fff 160px,#606aff 168px,#7466ff 176px,#8861ff 184px,#9d5cff 192px,#b357ff 200px,#ca52ff 208px,#e14eff 216px,#f949ff 224px,#ff3fee 232px,#ff36da 240px,#ff2dc9 248px,#ff26b9 256px,#ff20ac 264px,#ff1ba0 272px,#ff1696 280px,#ff128d 288px,#ff0f84 296px,#ff0b7d 304px,#ff0876 312px,#ff066f 320px,#ff0469 328px,#ff0264 336px,#ff005f 344px,#ff005b 352px,#ff0056 360px,#ff0052 368px,#ff004f 376px,#ff004b 384px,#ff0048 392px,#ff0045 400px,#ff0042 408px,#ff0040 416px,#ff003d 424px,#ff003b 432px,#ff0039 440px,#ff0037 448px,#ff0035 456px,#ff0033 464px,#ff0031 472px,#ff002f 480px,#ff002e 488px,#ff002c 496px,#ff002b 504px,#ff0029 512px,#ff0028 520px,#ff0026 528px,#ff0025 536px,#ff0024 541px)"></i><i style="left:29px;top:156.0px;width:538px;background:linear-gradient(90deg,#00c1ff 0px,#00bdff 8px,#00b9ff 16px,#00b5ff 24px,#00b1ff 32px,#00adff 40px,#00a8ff 48px,#00a4ff 56px,#00a0ff 64px,#009cff 72px,#0098ff 80px,#0093ff 88px,#008fff 96px,#008bff 104px,#0086ff 112px,#0082ff 120px,#0b7dff 128px,#1a79ff 136px,#2a74ff 144px,#3b70ff 152px,#4d6bff 160px,#5f66ff 168px,#7362ff 176px,#875dff 184px,#9c58ff 192px,#b254ff 200px,#c84fff 208px,#df4aff 216px,#f645ff 224px,#ff3df1 232px,#ff34dd 240px,#ff2ccb 248px,#ff25bc 256px,#ff1faf 264px,#ff1aa3 272px,#ff1598 280px,#ff118f 288px,#ff0d86 296px,#ff0a7f 304px,#ff0878 312px,#ff0571 320px,#ff036b 328px,#ff0166 336px,#ff0061 344px,#ff005c 352px,#ff0058 360px,#ff0054 368px,#ff0050 376px,#ff004d 384px,#ff004a 392px,#ff0047 400px,#ff0044 408px,#ff0041 416px,#ff003f 424px,#ff003c 432px,#ff003a 440px,#ff0038 448px,#ff0036 456px,#ff0034 464px,#ff0032 472px,#ff0030 480px,#ff002f 488px,#ff002d 496px,#ff002c 504px,#ff002a 512px,#ff0029 520px,#ff0027 528px,#ff0026 536px,#ff0026 538px)"></i><i style="left:30px;top:158.0px;width:536px;background:linear-gradient(90deg,#00bcff 0px,#00b8ff 8px,#00b4ff 16px,#00b0ff 24px,#00acff 32px,#00a8ff 40px,#00a4ff 48px,#00a0ff 56px,#009cff 64px,#0097ff 72px,#0093ff 80px,#008fff 88px,#008bff 96px,#0086ff 104px,#0082ff 112px,#007eff 120px,#0c79ff 128px,#1a75ff 136px,#2a70ff 144px,#3b6cff 152px,#4d67ff 160px,#5f63ff 168px,#735eff 176px,#8659ff 184px,#9b55ff 192px,#b050ff 200px,#c64bff 208px,#dc47ff 216px,#f342ff 224px,#ff3bf4 232px,#ff32df 240px,#ff2ace 248px,#ff23bf 256px,#ff1db1 264px,#ff18a5 272px,#ff149b 280px,#ff1091 288px,#ff0c88 296px,#ff0981 304px,#ff077a 312px,#ff0473 320px,#ff026d 328px,#ff0168 336px,#ff0063 344px,#ff005e 352px,#ff005a 360px,#ff0056 368px,#ff0052 376px,#ff004e 384px,#ff004b 392px,#ff0048 400px,#ff0045 408px,#ff0042 416px,#ff0040 424px,#ff003d 432px,#ff003b 440px,#ff0039 448px,#ff0037 456px,#ff0035 464px,#ff0033 472px,#ff0031 480px,#ff0030 488px,#ff002e 496px,#ff002c 504px,#ff002b 512px,#ff002a 520px,#ff0028 528px,#ff0027 536px)"></i><i style="left:30px;top:160.0px;width:534px;background:linear-gradient(90deg,#00b7ff 0px,#00b4ff 8px,#00b0ff 16px,#00acff 24px,#00a8ff 32px,#00a4ff 40px,#00a0ff 48px,#009cff 56px,#0098ff 64px,#0093ff 72px,#008fff 80px,#008bff 88px,#0087ff 96px,#0083ff 104px,#007eff 112px,#007aff 120px,#0b76ff 128px,#1971ff 136px,#296dff 144px,#3969ff 152px,#4b64ff 160px,#5d60ff 168px,#705bff 176px,#8357ff 184px,#9752ff 192px,#ac4dff 200px,#c149ff 208px,#d744ff 216px,#ee3fff 224px,#ff3af9 232px,#ff31e5 240px,#ff29d3 248px,#ff22c3 256px,#ff1db5 264px,#ff18a9 272px,#ff139e 280px,#ff0f94 288px,#ff0c8c 296px,#ff0984 304px,#ff067c 312px,#ff0476 320px,#ff0270 328px,#ff006a 336px,#ff0065 344px,#ff0060 352px,#ff005c 360px,#ff0058 368px,#ff0054 376px,#ff0050 384px,#ff004d 392px,#ff004a 400px,#ff0047 408px,#ff0044 416px,#ff0041 424px,#ff003f 432px,#ff003d 440px,#ff003a 448px,#ff0038 456px,#ff0036 464px,#ff0034 472px,#ff0033 480px,#ff0031 488px,#ff002f 496px,#ff002e 504px,#ff002c 512px,#ff002b 520px,#ff0029 528px,#ff0028 534px)"></i><i style="left:31px;top:162.0px;width:531px;background:linear-gradient(90deg,#00b3ff 0px,#00afff 8px,#00abff 16px,#00a7ff 24px,#00a3ff 32px,#009fff 40px,#009bff 48px,#0097ff 56px,#0093ff 64px,#008fff 72px,#008bff 80px,#0087ff 88px,#0083ff 96px,#007fff 104px,#007aff 112px,#0176ff 120px,#0c72ff 128px,#1a6eff 136px,#2969ff 144px,#3a65ff 152px,#4b60ff 160px,#5d5cff 168px,#6f58ff 176px,#8253ff 184px,#964fff 192px,#ab4aff 200px,#bf46ff 208px,#d541ff 216px,#eb3cff 224px,#ff37fc 232px,#ff2fe7 240px,#ff27d5 248px,#ff21c6 256px,#ff1bb8 264px,#ff16ab 272px,#ff12a0 280px,#ff0e97 288px,#ff0b8e 296px,#ff0886 304px,#ff057e 312px,#ff0378 320px,#ff0171 328px,#ff006c 336px,#ff0067 344px,#ff0062 352px,#ff005d 360px,#ff0059 368px,#ff0055 376px,#ff0052 384px,#ff004e 392px,#ff004b 400px,#ff0048 408px,#ff0045 416px,#ff0043 424px,#ff0040 432px,#ff003e 440px,#ff003c 448px,#ff0039 456px,#ff0037 464px,#ff0035 472px,#ff0034 480px,#ff0032 488px,#ff0030 496px,#ff002f 504px,#ff002d 512px,#ff002c 520px,#ff002a 528px,#ff002a 531px)"></i><i style="left:32px;top:164.0px;width:528px;background:linear-gradient(90deg,#00aeff 0px,#00abff 8px,#00a7ff 16px,#00a3ff 24px,#009fff 32px,#009bff 40px,#0097ff 48px,#0093ff 56px,#008fff 64px,#008bff 72px,#0087ff 80px,#0083ff 88px,#007fff 96px,#007bff 104px,#0077ff 112px,#0172ff 120px,#0d6eff 128px,#1b6aff 136px,#2a66ff 144px,#3a61ff 152px,#4b5dff 160px,#5d59ff 168px,#6f54ff 176px,#8250ff 184px,#954bff 192px,#a947ff 200px,#be43ff 208px,#d33eff 216px,#e93aff 224px,#ff35ff 232px,#ff2dea 240px,#ff25d8 248px,#ff1fc8 256px,#ff1aba 264px,#ff15ae 272px,#ff11a3 280px,#ff0d99 288px,#ff0a90 296px,#ff0788 304px,#ff0580 312px,#ff027a 320px,#ff0173 328px,#ff006e 336px,#ff0068 344px,#ff0063 352px,#ff005f 360px,#ff005b 368px,#ff0057 376px,#ff0053 384px,#ff0050 392px,#ff004c 400px,#ff0049 408px,#ff0047 416px,#ff0044 424px,#ff0041 432px,#ff003f 440px,#ff003d 448px,#ff003b 456px,#ff0038 464px,#ff0037 472px,#ff0035 480px,#ff0033 488px,#ff0031 496px,#ff0030 504px,#ff002e 512px,#ff002d 520px,#ff002b 528px)"></i><i style="left:33px;top:166.0px;width:525px;background:linear-gradient(90deg,#00aaff 0px,#00a6ff 8px,#00a2ff 16px,#009fff 24px,#009bff 32px,#0097ff 40px,#0093ff 48px,#008fff 56px,#008bff 64px,#0087ff 72px,#0083ff 80px,#007fff 88px,#007bff 96px,#0077ff 104px,#0073ff 112px,#026fff 120px,#0e6bff 128px,#1c66ff 136px,#2b62ff 144px,#3a5eff 152px,#4b5aff 160px,#5c55ff 168px,#6e51ff 176px,#814dff 184px,#9448ff 192px,#a844ff 200px,#bc40ff 208px,#d13bff 216px,#e637ff 224px,#fc32ff 232px,#ff2bed 240px,#ff24db 248px,#ff1ecb 256px,#ff18bd 264px,#ff14b0 272px,#ff10a5 280px,#ff0c9b 288px,#ff0992 296px,#ff068a 304px,#ff0482 312px,#ff027b 320px,#ff0075 328px,#ff006f 336px,#ff006a 344px,#ff0065 352px,#ff0060 360px,#ff005c 368px,#ff0058 376px,#ff0055 384px,#ff0051 392px,#ff004e 400px,#ff004b 408px,#ff0048 416px,#ff0045 424px,#ff0043 432px,#ff0040 440px,#ff003e 448px,#ff003c 456px,#ff003a 464px,#ff0038 472px,#ff0036 480px,#ff0034 488px,#ff0032 496px,#ff0031 504px,#ff002f 512px,#ff002e 520px,#ff002d 525px)"></i><i style="left:34px;top:168.0px;width:522px;background:linear-gradient(90deg,#00a6ff 0px,#00a2ff 8px,#009eff 16px,#009aff 24px,#0097ff 32px,#0093ff 40px,#008fff 48px,#008bff 56px,#0087ff 64px,#0083ff 72px,#007fff 80px,#007bff 88px,#0077ff 96px,#0073ff 104px,#006fff 112px,#036bff 120px,#0f67ff 128px,#1c63ff 136px,#2b5fff 144px,#3b5bff 152px,#4b56ff 160px,#5c52ff 168px,#6e4eff 176px,#804aff 184px,#9345ff 192px,#a741ff 200px,#ba3dff 208px,#cf38ff 216px,#e434ff 224px,#f930ff 232px,#ff29f0 240px,#ff22dd 248px,#ff1ccd 256px,#ff17bf 264px,#ff12b2 272px,#ff0ea7 280px,#ff0b9d 288px,#ff0894 296px,#ff058c 304px,#ff0384 312px,#ff017d 320px,#ff0077 328px,#ff0071 336px,#ff006c 344px,#ff0067 352px,#ff0062 360px,#ff005e 368px,#ff005a 376px,#ff0056 384px,#ff0052 392px,#ff004f 400px,#ff004c 408px,#ff0049 416px,#ff0046 424px,#ff0044 432px,#ff0041 440px,#ff003f 448px,#ff003d 456px,#ff003b 464px,#ff0039 472px,#ff0037 480px,#ff0035 488px,#ff0033 496px,#ff0032 504px,#ff0030 512px,#ff002f 520px,#ff002e 522px)"></i><i style="left:35px;top:170.0px;width:519px;background:linear-gradient(90deg,#00a2ff 0px,#009eff 8px,#009aff 16px,#0096ff 24px,#0093ff 32px,#008fff 40px,#008bff 48px,#0087ff 56px,#0083ff 64px,#0080ff 72px,#007cff 80px,#0078ff 88px,#0074ff 96px,#0070ff 104px,#006cff 112px,#0468ff 120px,#1064ff 128px,#1d60ff 136px,#2c5bff 144px,#3b57ff 152px,#4b53ff 160px,#5c4fff 168px,#6e4bff 176px,#8047ff 184px,#9242ff 192px,#a53eff 200px,#b93aff 208px,#cd36ff 216px,#e232ff 224px,#f72dff 232px,#ff27f2 240px,#ff20e0 248px,#ff1bd0 256px,#ff16c1 264px,#ff11b5 272px,#ff0da9 280px,#ff0a9f 288px,#ff0796 296px,#ff058e 304px,#ff0286 312px,#ff017f 320px,#ff0079 328px,#ff0073 336px,#ff006d 344px,#ff0068 352px,#ff0064 360px,#ff005f 368px,#ff005b 376px,#ff0057 384px,#ff0054 392px,#ff0051 400px,#ff004d 408px,#ff004a 416px,#ff0048 424px,#ff0045 432px,#ff0043 440px,#ff0040 448px,#ff003e 456px,#ff003c 464px,#ff003a 472px,#ff0038 480px,#ff0036 488px,#ff0034 496px,#ff0033 504px,#ff0031 512px,#ff0030 519px)"></i><i style="left:36px;top:172.0px;width:516px;background:linear-gradient(90deg,#009eff 0px,#009aff 8px,#0096ff 16px,#0093ff 24px,#008fff 32px,#008bff 40px,#0087ff 48px,#0084ff 56px,#0080ff 64px,#007cff 72px,#0078ff 80px,#0074ff 88px,#0070ff 96px,#006cff 104px,#0068ff 112px,#0564ff 120px,#1060ff 128px,#1e5cff 136px,#2c58ff 144px,#3c54ff 152px,#4b50ff 160px,#5c4cff 168px,#6d48ff 176px,#7f44ff 184px,#9140ff 192px,#a43cff 200px,#b737ff 208px,#cb33ff 216px,#df2fff 224px,#f42bff 232px,#ff25f5 240px,#ff1fe2 248px,#ff19d2 256px,#ff14c4 264px,#ff10b7 272px,#ff0cac 280px,#ff09a1 288px,#ff0698 296px,#ff0490 304px,#ff0288 312px,#ff0081 320px,#ff007a 328px,#ff0075 336px,#ff006f 344px,#ff006a 352px,#ff0065 360px,#ff0061 368px,#ff005d 376px,#ff0059 384px,#ff0055 392px,#ff0052 400px,#ff004f 408px,#ff004c 416px,#ff0049 424px,#ff0046 432px,#ff0044 440px,#ff0041 448px,#ff003f 456px,#ff003d 464px,#ff003b 472px,#ff0039 480px,#ff0037 488px,#ff0035 496px,#ff0034 504px,#ff0032 512px,#ff0031 516px)"></i><i style="left:36px;top:174.0px;width:514px;background:linear-gradient(90deg,#009aff 0px,#0096ff 8px,#0093ff 16px,#008fff 24px,#008cff 32px,#0088ff 40px,#0084ff 48px,#0080ff 56px,#007dff 64px,#0079ff 72px,#0075ff 80px,#0071ff 88px,#006dff 96px,#0069ff 104px,#0066ff 112px,#0462ff 120px,#105eff 128px,#1d5aff 136px,#2b56ff 144px,#3a52ff 152px,#4a4eff 160px,#5a4aff 168px,#6b46ff 176px,#7c42ff 184px,#8e3eff 192px,#a139ff 200px,#b335ff 208px,#c731ff 216px,#db2dff 224px,#ef29ff 232px,#ff24fa 240px,#ff1ee7 248px,#ff18d7 256px,#ff13c8 264px,#ff0fbb 272px,#ff0caf 280px,#ff08a5 288px,#ff069b 296px,#ff0393 304px,#ff018b 312px,#ff0084 320px,#ff007d 328px,#ff0077 336px,#ff0071 344px,#ff006c 352px,#ff0067 360px,#ff0063 368px,#ff005f 376px,#ff005b 384px,#ff0057 392px,#ff0054 400px,#ff0050 408px,#ff004d 416px,#ff004b 424px,#ff0048 432px,#ff0045 440px,#ff0043 448px,#ff0040 456px,#ff003e 464px,#ff003c 472px,#ff003a 480px,#ff0038 488px,#ff0037 496px,#ff0035 504px,#ff0033 512px,#ff0033 514px)"></i><i style="left:37px;top:176.0px;width:511px;background:linear-gradient(90deg,#0096ff 0px,#0093ff 8px,#008fff 16px,#008cff 24px,#0088ff 32px,#0084ff 40px,#0081ff 48px,#007dff 56px,#0079ff 64px,#0075ff 72px,#0072ff 80px,#006eff 88px,#006aff 96px,#0066ff 104px,#0062ff 112px,#055fff 120px,#105bff 128px,#1e57ff 136px,#2c53ff 144px,#3a4fff 152px,#4a4bff 160px,#5a47ff 168px,#6a43ff 176px,#7c3fff 184px,#8d3bff 192px,#9f37ff 200px,#b233ff 208px,#c52fff 216px,#d92bff 224px,#ed27ff 232px,#ff22fd 240px,#ff1cea 248px,#ff17d9 256px,#ff12ca 264px,#ff0ebd 272px,#ff0ab1 280px,#ff07a7 288px,#ff059d 296px,#ff0295 304px,#ff018d 312px,#ff0085 320px,#ff007f 328px,#ff0079 336px,#ff0073 344px,#ff006e 352px,#ff0069 360px,#ff0064 368px,#ff0060 376px,#ff005c 384px,#ff0058 392px,#ff0055 400px,#ff0052 408px,#ff004f 416px,#ff004c 424px,#ff0049 432px,#ff0046 440px,#ff0044 448px,#ff0042 456px,#ff003f 464px,#ff003d 472px,#ff003b 480px,#ff0039 488px,#ff0038 496px,#ff0036 504px,#ff0034 511px)"></i><i style="left:38px;top:178.0px;width:508px;background:linear-gradient(90deg,#0093ff 0px,#008fff 8px,#008cff 16px,#0088ff 24px,#0084ff 32px,#0081ff 40px,#007dff 48px,#0079ff 56px,#0076ff 64px,#0072ff 72px,#006eff 80px,#006bff 88px,#0067ff 96px,#0063ff 104px,#005fff 112px,#065bff 120px,#1158ff 128px,#1e54ff 136px,#2c50ff 144px,#3b4cff 152px,#4a48ff 160px,#5a44ff 168px,#6a40ff 176px,#7b3cff 184px,#8c38ff 192px,#9e34ff 200px,#b130ff 208px,#c42dff 216px,#d729ff 224px,#eb25ff 232px,#ff21ff 240px,#ff1bec 248px,#ff15db 256px,#ff11cd 264px,#ff0dbf 272px,#ff09b4 280px,#ff06a9 288px,#ff049f 296px,#ff0297 304px,#ff008f 312px,#ff0087 320px,#ff0081 328px,#ff007a 336px,#ff0075 344px,#ff006f 352px,#ff006a 360px,#ff0066 368px,#ff0062 376px,#ff005e 384px,#ff005a 392px,#ff0056 400px,#ff0053 408px,#ff0050 416px,#ff004d 424px,#ff004a 432px,#ff0048 440px,#ff0045 448px,#ff0043 456px,#ff0040 464px,#ff003e 472px,#ff003c 480px,#ff003a 488px,#ff0039 496px,#ff0037 504px,#ff0036 508px)"></i><i style="left:39px;top:180.0px;width:505px;background:linear-gradient(90deg,#008fff 0px,#008bff 8px,#0088ff 16px,#0084ff 24px,#0081ff 32px,#007dff 40px,#007aff 48px,#0076ff 56px,#0073ff 64px,#006fff 72px,#006bff 80px,#0067ff 88px,#0064ff 96px,#0060ff 104px,#005cff 112px,#0659ff 120px,#1255ff 128px,#1f51ff 136px,#2d4dff 144px,#3b49ff 152px,#4a45ff 160px,#5a42ff 168px,#6a3eff 176px,#7b3aff 184px,#8c36ff 192px,#9d32ff 200px,#af2eff 208px,#c22aff 216px,#d526ff 224px,#e822ff 232px,#fc1fff 240px,#ff19ef 248px,#ff14de 256px,#ff10cf 264px,#ff0cc2 272px,#ff08b6 280px,#ff06ab 288px,#ff03a1 296px,#ff0199 304px,#ff0090 312px,#ff0089 320px,#ff0082 328px,#ff007c 336px,#ff0076 344px,#ff0071 352px,#ff006c 360px,#ff0067 368px,#ff0063 376px,#ff005f 384px,#ff005b 392px,#ff0058 400px,#ff0054 408px,#ff0051 416px,#ff004e 424px,#ff004b 432px,#ff0049 440px,#ff0046 448px,#ff0044 456px,#ff0042 464px,#ff003f 472px,#ff003d 480px,#ff003b 488px,#ff003a 496px,#ff0038 504px,#ff0038 505px)"></i><i style="left:40px;top:182.0px;width:502px;background:linear-gradient(90deg,#008bff 0px,#0088ff 8px,#0085ff 16px,#0081ff 24px,#007eff 32px,#007aff 40px,#0076ff 48px,#0073ff 56px,#006fff 64px,#006cff 72px,#0068ff 80px,#0064ff 88px,#0061ff 96px,#005dff 104px,#0059ff 112px,#0756ff 120px,#1352ff 128px,#1f4eff 136px,#2d4aff 144px,#3b47ff 152px,#4a43ff 160px,#5a3fff 168px,#6a3bff 176px,#7a37ff 184px,#8b34ff 192px,#9c30ff 200px,#ae2cff 208px,#c028ff 216px,#d324ff 224px,#e620ff 232px,#fa1dff 240px,#ff18f1 248px,#ff13e0 256px,#ff0ed1 264px,#ff0bc4 272px,#ff07b8 280px,#ff05ad 288px,#ff02a3 296px,#ff009a 304px,#ff0092 312px,#ff008b 320px,#ff0084 328px,#ff007e 336px,#ff0078 344px,#ff0073 352px,#ff006e 360px,#ff0069 368px,#ff0065 376px,#ff0060 384px,#ff005d 392px,#ff0059 400px,#ff0056 408px,#ff0052 416px,#ff004f 424px,#ff004d 432px,#ff004a 440px,#ff0047 448px,#ff0045 456px,#ff0043 464px,#ff0040 472px,#ff003e 480px,#ff003c 488px,#ff003b 496px,#ff0039 502px)"></i><i style="left:41px;top:184.0px;width:499px;background:linear-gradient(90deg,#0088ff 0px,#0085ff 8px,#0081ff 16px,#007eff 24px,#007aff 32px,#0077ff 40px,#0073ff 48px,#0070ff 56px,#006cff 64px,#0069ff 72px,#0065ff 80px,#0061ff 88px,#005eff 96px,#005aff 104px,#0057ff 112px,#0853ff 120px,#144fff 128px,#204bff 136px,#2d48ff 144px,#3c44ff 152px,#4a40ff 160px,#5a3dff 168px,#6939ff 176px,#7935ff 184px,#8a31ff 192px,#9b2eff 200px,#ad2aff 208px,#bf26ff 216px,#d122ff 224px,#e41fff 232px,#f71bff 240px,#ff16f4 248px,#ff11e3 256px,#ff0dd3 264px,#ff0ac6 272px,#ff06ba 280px,#ff04af 288px,#ff02a5 296px,#ff009c 304px,#ff0094 312px,#ff008d 320px,#ff0086 328px,#ff0080 336px,#ff007a 344px,#ff0074 352px,#ff006f 360px,#ff006a 368px,#ff0066 376px,#ff0062 384px,#ff005e 392px,#ff005a 400px,#ff0057 408px,#ff0054 416px,#ff0051 424px,#ff004e 432px,#ff004b 440px,#ff0049 448px,#ff0046 456px,#ff0044 464px,#ff0042 472px,#ff003f 480px,#ff003d 488px,#ff003c 496px,#ff003b 499px)"></i><i style="left:42px;top:186.0px;width:496px;background:linear-gradient(90deg,#0085ff 0px,#0081ff 8px,#007eff 16px,#007bff 24px,#0077ff 32px,#0074ff 40px,#0070ff 48px,#006dff 56px,#0069ff 64px,#0066ff 72px,#0062ff 80px,#005fff 88px,#005bff 96px,#0057ff 104px,#0054ff 112px,#0950ff 120px,#144dff 128px,#2149ff 136px,#2e45ff 144px,#3c42ff 152px,#4a3eff 160px,#593aff 168px,#6936ff 176px,#7933ff 184px,#892fff 192px,#9a2bff 200px,#ac28ff 208px,#bd24ff 216px,#d020ff 224px,#e21dff 232px,#f519ff 240px,#ff15f6 248px,#ff10e5 256px,#ff0cd6 264px,#ff08c8 272px,#ff06bc 280px,#ff03b1 288px,#ff01a7 296px,#ff009e 304px,#ff0096 312px,#ff008f 320px,#ff0088 328px,#ff0081 336px,#ff007b 344px,#ff0076 352px,#ff0071 360px,#ff006c 368px,#ff0067 376px,#ff0063 384px,#ff005f 392px,#ff005c 400px,#ff0058 408px,#ff0055 416px,#ff0052 424px,#ff004f 432px,#ff004c 440px,#ff004a 448px,#ff0047 456px,#ff0045 464px,#ff0043 472px,#ff0041 480px,#ff003e 488px,#ff003d 496px)"></i><i style="left:43px;top:188.0px;width:493px;background:linear-gradient(90deg,#0082ff 0px,#007eff 8px,#007bff 16px,#0077ff 24px,#0074ff 32px,#0071ff 40px,#006dff 48px,#006aff 56px,#0066ff 64px,#0063ff 72px,#005fff 80px,#005cff 88px,#0058ff 96px,#0055ff 104px,#0051ff 112px,#0a4eff 120px,#154aff 128px,#2146ff 136px,#2e43ff 144px,#3c3fff 152px,#4b3cff 160px,#5938ff 168px,#6934ff 176px,#7931ff 184px,#892dff 192px,#9929ff 200px,#aa26ff 208px,#bc22ff 216px,#ce1eff 224px,#e01bff 232px,#f317ff 240px,#ff13f8 248px,#ff0fe7 256px,#ff0bd8 264px,#ff07ca 272px,#ff05be 280px,#ff02b3 288px,#ff00a9 296px,#ff00a0 304px,#ff0098 312px,#ff0090 320px,#ff0089 328px,#ff0083 336px,#ff007d 344px,#ff0077 352px,#ff0072 360px,#ff006d 368px,#ff0069 376px,#ff0065 384px,#ff0061 392px,#ff005d 400px,#ff005a 408px,#ff0056 416px,#ff0053 424px,#ff0050 432px,#ff004d 440px,#ff004b 448px,#ff0048 456px,#ff0046 464px,#ff0044 472px,#ff0042 480px,#ff0040 488px,#ff003e 493px)"></i><i style="left:44px;top:190.0px;width:490px;background:linear-gradient(90deg,#007eff 0px,#007bff 8px,#0078ff 16px,#0074ff 24px,#0071ff 32px,#006eff 40px,#006aff 48px,#0067ff 56px,#0063ff 64px,#0060ff 72px,#005dff 80px,#0059ff 88px,#0056ff 96px,#0052ff 104px,#014fff 112px,#0a4bff 120px,#1647ff 128px,#2244ff 136px,#2f40ff 144px,#3c3dff 152px,#4b39ff 160px,#5936ff 168px,#6832ff 176px,#782eff 184px,#882bff 192px,#9827ff 200px,#a924ff 208px,#bb20ff 216px,#cc1dff 224px,#de19ff 232px,#f116ff 240px,#ff12fb 248px,#ff0dea 256px,#ff0ada 264px,#ff06cd 272px,#ff04c0 280px,#ff01b5 288px,#ff00ab 296px,#ff00a2 304px,#ff009a 312px,#ff0092 320px,#ff008b 328px,#ff0085 336px,#ff007f 344px,#ff0079 352px,#ff0074 360px,#ff006f 368px,#ff006a 376px,#ff0066 384px,#ff0062 392px,#ff005e 400px,#ff005b 408px,#ff0058 416px,#ff0054 424px,#ff0051 432px,#ff004f 440px,#ff004c 448px,#ff0049 456px,#ff0047 464px,#ff0045 472px,#ff0043 480px,#ff0041 488px,#ff0040 490px)"></i><i style="left:45px;top:192.0px;width:488px;background:linear-gradient(90deg,#007bff 0px,#0078ff 8px,#0075ff 16px,#0071ff 24px,#006eff 32px,#006bff 40px,#0067ff 48px,#0064ff 56px,#0061ff 64px,#005dff 72px,#005aff 80px,#0056ff 88px,#0053ff 96px,#0050ff 104px,#014cff 112px,#0b49ff 120px,#1645ff 128px,#2242ff 136px,#2f3eff 144px,#3d3bff 152px,#4b37ff 160px,#5933ff 168px,#6830ff 176px,#782cff 184px,#8729ff 192px,#9825ff 200px,#a822ff 208px,#b91eff 216px,#cb1bff 224px,#dc17ff 232px,#ee14ff 240px,#ff10fd 248px,#ff0cec 256px,#ff09dc 264px,#ff05cf 272px,#ff03c2 280px,#ff01b7 288px,#ff00ad 296px,#ff00a4 304px,#ff009c 312px,#ff0094 320px,#ff008d 328px,#ff0086 336px,#ff0080 344px,#ff007a 352px,#ff0075 360px,#ff0070 368px,#ff006c 376px,#ff0068 384px,#ff0063 392px,#ff0060 400px,#ff005c 408px,#ff0059 416px,#ff0056 424px,#ff0053 432px,#ff0050 440px,#ff004d 448px,#ff004b 456px,#ff0048 464px,#ff0046 472px,#ff0044 480px,#ff0042 488px)"></i><i style="left:46px;top:194.0px;width:485px;background:linear-gradient(90deg,#0078ff 0px,#0075ff 8px,#0072ff 16px,#006fff 24px,#006bff 32px,#0068ff 40px,#0065ff 48px,#0061ff 56px,#005eff 64px,#005bff 72px,#0057ff 80px,#0054ff 88px,#0050ff 96px,#004dff 104px,#024aff 112px,#0c46ff 120px,#1743ff 128px,#233fff 136px,#303cff 144px,#3d38ff 152px,#4b35ff 160px,#5931ff 168px,#682eff 176px,#772aff 184px,#8727ff 192px,#9723ff 200px,#a720ff 208px,#b81dff 216px,#c919ff 224px,#da16ff 232px,#ec12ff 240px,#ff0fff 248px,#ff0bee 256px,#ff07df 264px,#ff05d1 272px,#ff02c4 280px,#ff00b9 288px,#ff00af 296px,#ff00a6 304px,#ff009d 312px,#ff0096 320px,#ff008e 328px,#ff0088 336px,#ff0082 344px,#ff007c 352px,#ff0077 360px,#ff0072 368px,#ff006d 376px,#ff0069 384px,#ff0065 392px,#ff0061 400px,#ff005d 408px,#ff005a 416px,#ff0057 424px,#ff0054 432px,#ff0051 440px,#ff004e 448px,#ff004c 456px,#ff0049 464px,#ff0047 472px,#ff0045 480px,#ff0043 485px)"></i><i style="left:47px;top:196.0px;width:482px;background:linear-gradient(90deg,#0075ff 0px,#0072ff 8px,#006fff 16px,#006cff 24px,#0069ff 32px,#0065ff 40px,#0062ff 48px,#005fff 56px,#005bff 64px,#0058ff 72px,#0055ff 80px,#0051ff 88px,#004eff 96px,#004bff 104px,#0347ff 112px,#0d44ff 120px,#1840ff 128px,#243dff 136px,#303aff 144px,#3d36ff 152px,#4b33ff 160px,#592fff 168px,#682cff 176px,#7728ff 184px,#8625ff 192px,#9622ff 200px,#a61eff 208px,#b71bff 216px,#c717ff 224px,#d914ff 232px,#ea11ff 240px,#fc0eff 248px,#ff0af0 256px,#ff06e1 264px,#ff04d3 272px,#ff01c6 280px,#ff00bb 288px,#ff00b1 296px,#ff00a8 304px,#ff009f 312px,#ff0097 320px,#ff0090 328px,#ff0089 336px,#ff0083 344px,#ff007e 352px,#ff0078 360px,#ff0073 368px,#ff006f 376px,#ff006a 384px,#ff0066 392px,#ff0062 400px,#ff005f 408px,#ff005b 416px,#ff0058 424px,#ff0055 432px,#ff0052 440px,#ff004f 448px,#ff004d 456px,#ff004a 464px,#ff0048 472px,#ff0046 480px,#ff0045 482px)"></i><i style="left:48px;top:198.0px;width:479px;background:linear-gradient(90deg,#0073ff 0px,#006fff 8px,#006cff 16px,#0069ff 24px,#0066ff 32px,#0063ff 40px,#005fff 48px,#005cff 56px,#0059ff 64px,#0056ff 72px,#0052ff 80px,#004fff 88px,#004cff 96px,#0048ff 104px,#0445ff 112px,#0d42ff 120px,#183eff 128px,#243bff 136px,#3137ff 144px,#3e34ff 152px,#4b31ff 160px,#592dff 168px,#672aff 176px,#7627ff 184px,#8523ff 192px,#9520ff 200px,#a51cff 208px,#b519ff 216px,#c616ff 224px,#d713ff 232px,#e80fff 240px,#fa0cff 248px,#ff09f3 256px,#ff05e3 264px,#ff03d5 272px,#ff01c9 280px,#ff00bd 288px,#ff00b3 296px,#ff00aa 304px,#ff00a1 312px,#ff0099 320px,#ff0092 328px,#ff008b 336px,#ff0085 344px,#ff007f 352px,#ff007a 360px,#ff0075 368px,#ff0070 376px,#ff006c 384px,#ff0068 392px,#ff0064 400px,#ff0060 408px,#ff005d 416px,#ff0059 424px,#ff0056 432px,#ff0053 440px,#ff0051 448px,#ff004e 456px,#ff004b 464px,#ff0049 472px,#ff0047 479px)"></i><i style="left:49px;top:200.0px;width:476px;background:linear-gradient(90deg,#0070ff 0px,#006dff 8px,#006aff 16px,#0066ff 24px,#0063ff 32px,#0060ff 40px,#005dff 48px,#005aff 56px,#0056ff 64px,#0053ff 72px,#0050ff 80px,#004dff 88px,#0049ff 96px,#0046ff 104px,#0443ff 112px,#0e3fff 120px,#193cff 128px,#2539ff 136px,#3135ff 144px,#3e32ff 152px,#4b2fff 160px,#592bff 168px,#6728ff 176px,#7625ff 184px,#8521ff 192px,#941eff 200px,#a41bff 208px,#b418ff 216px,#c514ff 224px,#d511ff 232px,#e60eff 240px,#f80bff 248px,#ff08f5 256px,#ff04e5 264px,#ff02d7 272px,#ff00cb 280px,#ff00bf 288px,#ff00b5 296px,#ff00ab 304px,#ff00a3 312px,#ff009b 320px,#ff0094 328px,#ff008d 336px,#ff0087 344px,#ff0081 352px,#ff007b 360px,#ff0076 368px,#ff0071 376px,#ff006d 384px,#ff0069 392px,#ff0065 400px,#ff0061 408px,#ff005e 416px,#ff005b 424px,#ff0057 432px,#ff0054 440px,#ff0052 448px,#ff004f 456px,#ff004c 464px,#ff004a 472px,#ff0049 476px)"></i><i style="left:50px;top:202.0px;width:473px;background:linear-gradient(90deg,#006dff 0px,#006aff 8px,#0067ff 16px,#0064ff 24px,#0061ff 32px,#005dff 40px,#005aff 48px,#0057ff 56px,#0054ff 64px,#0051ff 72px,#004dff 80px,#004aff 88px,#0047ff 96px,#0044ff 104px,#0540ff 112px,#0f3dff 120px,#193aff 128px,#2537ff 136px,#3133ff 144px,#3e30ff 152px,#4b2dff 160px,#5929ff 168px,#6726ff 176px,#7523ff 184px,#8420ff 192px,#931cff 200px,#a319ff 208px,#b316ff 216px,#c313ff 224px,#d410ff 232px,#e50dff 240px,#f60aff 248px,#ff06f7 256px,#ff03e7 264px,#ff01d9 272px,#ff00cd 280px,#ff00c1 288px,#ff00b7 296px,#ff00ad 304px,#ff00a5 312px,#ff009d 320px,#ff0095 328px,#ff008e 336px,#ff0088 344px,#ff0082 352px,#ff007d 360px,#ff0078 368px,#ff0073 376px,#ff006e 384px,#ff006a 392px,#ff0066 400px,#ff0063 408px,#ff005f 416px,#ff005c 424px,#ff0059 432px,#ff0056 440px,#ff0053 448px,#ff0050 456px,#ff004e 464px,#ff004b 472px,#ff004b 473px)"></i><i style="left:51px;top:204.0px;width:470px;background:linear-gradient(90deg,#006aff 0px,#0067ff 8px,#0064ff 16px,#0061ff 24px,#005eff 32px,#005bff 40px,#0058ff 48px,#0055ff 56px,#0052ff 64px,#004eff 72px,#004bff 80px,#0048ff 88px,#0045ff 96px,#0042ff 104px,#063eff 112px,#0f3bff 120px,#1a38ff 128px,#2635ff 136px,#3231ff 144px,#3e2eff 152px,#4b2bff 160px,#5928ff 168px,#6724ff 176px,#7521ff 184px,#841eff 192px,#931bff 200px,#a218ff 208px,#b214ff 216px,#c211ff 224px,#d20eff 232px,#e30bff 240px,#f408ff 248px,#ff05f9 256px,#ff03e9 264px,#ff00db 272px,#ff00cf 280px,#ff00c3 288px,#ff00b9 296px,#ff00af 304px,#ff00a6 312px,#ff009e 320px,#ff0097 328px,#ff0090 336px,#ff008a 344px,#ff0084 352px,#ff007e 360px,#ff0079 368px,#ff0074 376px,#ff0070 384px,#ff006c 392px,#ff0068 400px,#ff0064 408px,#ff0060 416px,#ff005d 424px,#ff005a 432px,#ff0057 440px,#ff0054 448px,#ff0051 456px,#ff004f 464px,#ff004d 470px)"></i><i style="left:52px;top:206.0px;width:467px;background:linear-gradient(90deg,#0068ff 0px,#0065ff 8px,#0062ff 16px,#005fff 24px,#005cff 32px,#0059ff 40px,#0055ff 48px,#0052ff 56px,#004fff 64px,#004cff 72px,#0049ff 80px,#0046ff 88px,#0043ff 96px,#003fff 104px,#063cff 112px,#1039ff 120px,#1b36ff 128px,#2633ff 136px,#322fff 144px,#3f2cff 152px,#4b29ff 160px,#5926ff 168px,#6723ff 176px,#7520ff 184px,#831cff 192px,#9219ff 200px,#a116ff 208px,#b113ff 216px,#c010ff 224px,#d10dff 232px,#e10aff 240px,#f207ff 248px,#ff04fb 256px,#ff02eb 264px,#ff00dd 272px,#ff00d1 280px,#ff00c5 288px,#ff00ba 296px,#ff00b1 304px,#ff00a8 312px,#ff00a0 320px,#ff0099 328px,#ff0092 336px,#ff008b 344px,#ff0085 352px,#ff0080 360px,#ff007b 368px,#ff0076 376px,#ff0071 384px,#ff006d 392px,#ff0069 400px,#ff0065 408px,#ff0062 416px,#ff005e 424px,#ff005b 432px,#ff0058 440px,#ff0055 448px,#ff0052 456px,#ff0050 464px,#ff004f 467px)"></i><i style="left:53px;top:208.0px;width:464px;background:linear-gradient(90deg,#0065ff 0px,#0062ff 8px,#005fff 16px,#005cff 24px,#0059ff 32px,#0056ff 40px,#0053ff 48px,#0050ff 56px,#004dff 64px,#004aff 72px,#0047ff 80px,#0044ff 88px,#0040ff 96px,#003dff 104px,#073aff 112px,#1137ff 120px,#1b34ff 128px,#2731ff 136px,#322eff 144px,#3f2aff 152px,#4c27ff 160px,#5924ff 168px,#6621ff 176px,#741eff 184px,#831bff 192px,#9118ff 200px,#a015ff 208px,#af12ff 216px,#bf0fff 224px,#cf0cff 232px,#df09ff 240px,#f006ff 248px,#ff03fd 256px,#ff01ee 264px,#ff00df 272px,#ff00d3 280px,#ff00c7 288px,#ff00bc 296px,#ff00b3 304px,#ff00aa 312px,#ff00a2 320px,#ff009a 328px,#ff0093 336px,#ff008d 344px,#ff0087 352px,#ff0081 360px,#ff007c 368px,#ff0077 376px,#ff0073 384px,#ff006e 392px,#ff006a 400px,#ff0066 408px,#ff0063 416px,#ff005f 424px,#ff005c 432px,#ff0059 440px,#ff0056 448px,#ff0053 456px,#ff0051 464px)"></i><i style="left:54px;top:210.0px;width:461px;background:linear-gradient(90deg,#0063ff 0px,#0060ff 8px,#005dff 16px,#005aff 24px,#0057ff 32px,#0054ff 40px,#0051ff 48px,#004eff 56px,#004bff 64px,#0048ff 72px,#0045ff 80px,#0042ff 88px,#003eff 96px,#003bff 104px,#0838ff 112px,#1135ff 120px,#1c32ff 128px,#272fff 136px,#332cff 144px,#3f29ff 152px,#4c26ff 160px,#5923ff 168px,#661fff 176px,#741cff 184px,#8219ff 192px,#9116ff 200px,#9f13ff 208px,#ae10ff 216px,#be0dff 224px,#cd0aff 232px,#de08ff 240px,#ee05ff 248px,#fe02ff 256px,#ff00f0 264px,#ff00e1 272px,#ff00d4 280px,#ff00c9 288px,#ff00be 296px,#ff00b4 304px,#ff00ac 312px,#ff00a3 320px,#ff009c 328px,#ff0095 336px,#ff008e 344px,#ff0088 352px,#ff0083 360px,#ff007d 368px,#ff0079 376px,#ff0074 384px,#ff0070 392px,#ff006b 400px,#ff0068 408px,#ff0064 416px,#ff0061 424px,#ff005d 432px,#ff005a 440px,#ff0057 448px,#ff0055 456px,#ff0053 461px)"></i><i style="left:55px;top:212.0px;width:458px;background:linear-gradient(90deg,#0061ff 0px,#005eff 8px,#005bff 16px,#0058ff 24px,#0055ff 32px,#0052ff 40px,#004fff 48px,#004cff 56px,#0049ff 64px,#0046ff 72px,#0043ff 80px,#003fff 88px,#003cff 96px,#0039ff 104px,#0836ff 112px,#1233ff 120px,#1c30ff 128px,#282dff 136px,#332aff 144px,#3f27ff 152px,#4c24ff 160px,#5921ff 168px,#661eff 176px,#741bff 184px,#8218ff 192px,#9015ff 200px,#9e12ff 208px,#ad0fff 216px,#bd0cff 224px,#cc09ff 232px,#dc07ff 240px,#ec04ff 248px,#fc02ff 256px,#ff00f2 264px,#ff00e3 272px,#ff00d6 280px,#ff00cb 288px,#ff00c0 296px,#ff00b6 304px,#ff00ad 312px,#ff00a5 320px,#ff009d 328px,#ff0096 336px,#ff0090 344px,#ff008a 352px,#ff0084 360px,#ff007f 368px,#ff007a 376px,#ff0075 384px,#ff0071 392px,#ff006d 400px,#ff0069 408px,#ff0065 416px,#ff0062 424px,#ff005e 432px,#ff005b 440px,#ff0058 448px,#ff0056 456px,#ff0055 458px)"></i><i style="left:56px;top:214.0px;width:455px;background:linear-gradient(90deg,#005eff 0px,#005bff 8px,#0058ff 16px,#0055ff 24px,#0052ff 32px,#004fff 40px,#004cff 48px,#004aff 56px,#0047ff 64px,#0044ff 72px,#0041ff 80px,#003eff 88px,#003aff 96px,#0137ff 104px,#0934ff 112px,#1331ff 120px,#1d2eff 128px,#282bff 136px,#3328ff 144px,#3f25ff 152px,#4c22ff 160px,#591fff 168px,#661cff 176px,#7319ff 184px,#8116ff 192px,#8f13ff 200px,#9e11ff 208px,#ac0eff 216px,#bb0bff 224px,#cb08ff 232px,#da05ff 240px,#ea03ff 248px,#fa01ff 256px,#ff00f4 264px,#ff00e5 272px,#ff00d8 280px,#ff00cd 288px,#ff00c2 296px,#ff00b8 304px,#ff00af 312px,#ff00a7 320px,#ff009f 328px,#ff0098 336px,#ff0091 344px,#ff008b 352px,#ff0086 360px,#ff0080 368px,#ff007b 376px,#ff0077 384px,#ff0072 392px,#ff006e 400px,#ff006a 408px,#ff0066 416px,#ff0063 424px,#ff0060 432px,#ff005d 440px,#ff005a 448px,#ff0057 455px)"></i><i style="left:57px;top:216.0px;width:452px;background:linear-gradient(90deg,#005cff 0px,#0059ff 8px,#0056ff 16px,#0053ff 24px,#0050ff 32px,#004dff 40px,#004aff 48px,#0047ff 56px,#0044ff 64px,#0042ff 72px,#003fff 80px,#003cff 88px,#0039ff 96px,#0136ff 104px,#0a33ff 112px,#1330ff 120px,#1d2dff 128px,#282aff 136px,#3427ff 144px,#4024ff 152px,#4c21ff 160px,#591eff 168px,#661bff 176px,#7318ff 184px,#8115ff 192px,#8e12ff 200px,#9d0fff 208px,#ab0cff 216px,#ba0aff 224px,#c907ff 232px,#d904ff 240px,#e802ff 248px,#f800ff 256px,#ff00f6 264px,#ff00e7 272px,#ff00da 280px,#ff00ce 288px,#ff00c4 296px,#ff00ba 304px,#ff00b1 312px,#ff00a8 320px,#ff00a1 328px,#ff009a 336px,#ff0093 344px,#ff008d 352px,#ff0087 360px,#ff0082 368px,#ff007d 376px,#ff0078 384px,#ff0073 392px,#ff006f 400px,#ff006b 408px,#ff0068 416px,#ff0064 424px,#ff0061 432px,#ff005e 440px,#ff005b 448px,#ff0059 452px)"></i><i style="left:58px;top:218.0px;width:449px;background:linear-gradient(90deg,#005aff 0px,#0057ff 8px,#0054ff 16px,#0051ff 24px,#004eff 32px,#004bff 40px,#0048ff 48px,#0045ff 56px,#0042ff 64px,#0040ff 72px,#003dff 80px,#003aff 88px,#0037ff 96px,#0234ff 104px,#0a31ff 112px,#142eff 120px,#1e2bff 128px,#2928ff 136px,#3425ff 144px,#4022ff 152px,#4c1fff 160px,#591cff 168px,#6519ff 176px,#7316ff 184px,#8014ff 192px,#8e11ff 200px,#9c0eff 208px,#aa0bff 216px,#b909ff 224px,#c806ff 232px,#d704ff 240px,#e701ff 248px,#f600ff 256px,#ff00f8 264px,#ff00e9 272px,#ff00dc 280px,#ff00d0 288px,#ff00c5 296px,#ff00bc 304px,#ff00b2 312px,#ff00aa 320px,#ff00a2 328px,#ff009b 336px,#ff0094 344px,#ff008e 352px,#ff0088 360px,#ff0083 368px,#ff007e 376px,#ff0079 384px,#ff0075 392px,#ff0071 400px,#ff006d 408px,#ff0069 416px,#ff0065 424px,#ff0062 432px,#ff005f 440px,#ff005c 448px,#ff005b 449px)"></i><i style="left:59px;top:220.0px;width:446px;background:linear-gradient(90deg,#0057ff 0px,#0055ff 8px,#0052ff 16px,#004fff 24px,#004cff 32px,#0049ff 40px,#0046ff 48px,#0043ff 56px,#0041ff 64px,#003eff 72px,#003bff 80px,#0038ff 88px,#0035ff 96px,#0332ff 104px,#0b2fff 112px,#142cff 120px,#1f29ff 128px,#2926ff 136px,#3423ff 144px,#4021ff 152px,#4c1eff 160px,#581bff 168px,#6518ff 176px,#7215ff 184px,#8012ff 192px,#8d10ff 200px,#9b0dff 208px,#a90aff 216px,#b808ff 224px,#c705ff 232px,#d603ff 240px,#e500ff 248px,#f400ff 256px,#ff00fa 264px,#ff00eb 272px,#ff00de 280px,#ff00d2 288px,#ff00c7 296px,#ff00bd 304px,#ff00b4 312px,#ff00ac 320px,#ff00a4 328px,#ff009d 336px,#ff0096 344px,#ff0090 352px,#ff008a 360px,#ff0084 368px,#ff007f 376px,#ff007b 384px,#ff0076 392px,#ff0072 400px,#ff006e 408px,#ff006a 416px,#ff0067 424px,#ff0063 432px,#ff0060 440px,#ff005e 446px)"></i><i style="left:60px;top:222.0px;width:443px;background:linear-gradient(90deg,#0055ff 0px,#0053ff 8px,#0050ff 16px,#004dff 24px,#004aff 32px,#0047ff 40px,#0044ff 48px,#0042ff 56px,#003fff 64px,#003cff 72px,#0039ff 80px,#0036ff 88px,#0033ff 96px,#0330ff 104px,#0c2dff 112px,#152bff 120px,#1f28ff 128px,#2a25ff 136px,#3522ff 144px,#401fff 152px,#4c1cff 160px,#5819ff 168px,#6517ff 176px,#7214ff 184px,#7f11ff 192px,#8d0eff 200px,#9a0cff 208px,#a809ff 216px,#b706ff 224px,#c504ff 232px,#d402ff 240px,#e300ff 248px,#f300ff 256px,#ff00fc 264px,#ff00ed 272px,#ff00e0 280px,#ff00d4 288px,#ff00c9 296px,#ff00bf 304px,#ff00b6 312px,#ff00ad 320px,#ff00a5 328px,#ff009e 336px,#ff0098 344px,#ff0091 352px,#ff008b 360px,#ff0086 368px,#ff0081 376px,#ff007c 384px,#ff0077 392px,#ff0073 400px,#ff006f 408px,#ff006b 416px,#ff0068 424px,#ff0064 432px,#ff0061 440px,#ff0060 443px)"></i><i style="left:61px;top:224.0px;width:440px;background:linear-gradient(90deg,#0053ff 0px,#0050ff 8px,#004eff 16px,#004bff 24px,#0048ff 32px,#0045ff 40px,#0042ff 48px,#0040ff 56px,#003dff 64px,#003aff 72px,#0037ff 80px,#0034ff 88px,#0031ff 96px,#042fff 104px,#0c2cff 112px,#1529ff 120px,#2026ff 128px,#2a23ff 136px,#3520ff 144px,#411eff 152px,#4c1bff 160px,#5818ff 168px,#6515ff 176px,#7213ff 184px,#7f10ff 192px,#8c0dff 200px,#9a0bff 208px,#a708ff 216px,#b605ff 224px,#c403ff 232px,#d301ff 240px,#e200ff 248px,#f100ff 256px,#ff00fe 264px,#ff00ef 272px,#ff00e2 280px,#ff00d6 288px,#ff00cb 296px,#ff00c1 304px,#ff00b7 312px,#ff00af 320px,#ff00a7 328px,#ff00a0 336px,#ff0099 344px,#ff0093 352px,#ff008d 360px,#ff0087 368px,#ff0082 376px,#ff007d 384px,#ff0079 392px,#ff0074 400px,#ff0070 408px,#ff006d 416px,#ff0069 424px,#ff0065 432px,#ff0062 440px)"></i><i style="left:62px;top:226.0px;width:437px;background:linear-gradient(90deg,#0051ff 0px,#004eff 8px,#004cff 16px,#0049ff 24px,#0046ff 32px,#0043ff 40px,#0041ff 48px,#003eff 56px,#003bff 64px,#0038ff 72px,#0035ff 80px,#0033ff 88px,#0030ff 96px,#042dff 104px,#0d2aff 112px,#1627ff 120px,#2025ff 128px,#2a22ff 136px,#351fff 144px,#411cff 152px,#4c19ff 160px,#5817ff 168px,#6514ff 176px,#7111ff 184px,#7e0fff 192px,#8b0cff 200px,#9909ff 208px,#a707ff 216px,#b505ff 224px,#c302ff 232px,#d100ff 240px,#e000ff 248px,#ef00ff 256px,#fe00ff 264px,#ff00f1 272px,#ff00e4 280px,#ff00d8 288px,#ff00cd 296px,#ff00c2 304px,#ff00b9 312px,#ff00b1 320px,#ff00a9 328px,#ff00a1 336px,#ff009b 344px,#ff0094 352px,#ff008e 360px,#ff0089 368px,#ff0083 376px,#ff007f 384px,#ff007a 392px,#ff0076 400px,#ff0072 408px,#ff006e 416px,#ff006a 424px,#ff0067 432px,#ff0065 437px)"></i><i style="left:63px;top:228.0px;width:435px;background:linear-gradient(90deg,#004fff 0px,#004cff 8px,#004aff 16px,#0047ff 24px,#0044ff 32px,#0042ff 40px,#003fff 48px,#003cff 56px,#0039ff 64px,#0036ff 72px,#0034ff 80px,#0031ff 88px,#002eff 96px,#052bff 104px,#0d29ff 112px,#1726ff 120px,#2023ff 128px,#2b20ff 136px,#361eff 144px,#411bff 152px,#4c18ff 160px,#5815ff 168px,#6413ff 176px,#7110ff 184px,#7e0dff 192px,#8b0bff 200px,#9808ff 208px,#a606ff 216px,#b304ff 224px,#c201ff 232px,#d000ff 240px,#de00ff 248px,#ed00ff 256px,#fc00ff 264px,#ff00f3 272px,#ff00e6 280px,#ff00d9 288px,#ff00ce 296px,#ff00c4 304px,#ff00bb 312px,#ff00b2 320px,#ff00aa 328px,#ff00a3 336px,#ff009c 344px,#ff0096 352px,#ff0090 360px,#ff008a 368px,#ff0085 376px,#ff0080 384px,#ff007b 392px,#ff0077 400px,#ff0073 408px,#ff006f 416px,#ff006b 424px,#ff0068 432px,#ff0066 435px)"></i><i style="left:64px;top:230.0px;width:432px;background:linear-gradient(90deg,#004dff 0px,#004bff 8px,#0048ff 16px,#0045ff 24px,#0042ff 32px,#0040ff 40px,#003dff 48px,#003aff 56px,#0037ff 64px,#0035ff 72px,#0032ff 80px,#002fff 88px,#002dff 96px,#062aff 104px,#0e27ff 112px,#1724ff 120px,#2122ff 128px,#2b1fff 136px,#361cff 144px,#4119ff 152px,#4d17ff 160px,#5814ff 168px,#6412ff 176px,#710fff 184px,#7d0cff 192px,#8a0aff 200px,#9707ff 208px,#a505ff 216px,#b203ff 224px,#c001ff 232px,#cf00ff 240px,#dd00ff 248px,#ec00ff 256px,#fb00ff 264px,#ff00f5 272px,#ff00e7 280px,#ff00db 288px,#ff00d0 296px,#ff00c6 304px,#ff00bc 312px,#ff00b4 320px,#ff00ac 328px,#ff00a4 336px,#ff009d 344px,#ff0097 352px,#ff0091 360px,#ff008b 368px,#ff0086 376px,#ff0081 384px,#ff007d 392px,#ff0078 400px,#ff0074 408px,#ff0070 416px,#ff006c 424px,#ff0069 432px)"></i><i style="left:65px;top:232.0px;width:429px;background:linear-gradient(90deg,#004bff 0px,#0049ff 8px,#0046ff 16px,#0043ff 24px,#0041ff 32px,#003eff 40px,#003bff 48px,#0039ff 56px,#0036ff 64px,#0033ff 72px,#0030ff 80px,#002eff 88px,#002bff 96px,#0628ff 104px,#0f26ff 112px,#1823ff 120px,#2120ff 128px,#2c1dff 136px,#361bff 144px,#4118ff 152px,#4d16ff 160px,#5813ff 168px,#6410ff 176px,#700eff 184px,#7d0bff 192px,#8a09ff 200px,#9706ff 208px,#a404ff 216px,#b102ff 224px,#bf00ff 232px,#cd00ff 240px,#db00ff 248px,#ea00ff 256px,#f900ff 264px,#ff00f7 272px,#ff00e9 280px,#ff00dd 288px,#ff00d2 296px,#ff00c8 304px,#ff00be 312px,#ff00b5 320px,#ff00ad 328px,#ff00a6 336px,#ff009f 344px,#ff0099 352px,#ff0092 360px,#ff008d 368px,#ff0088 376px,#ff0083 384px,#ff007e 392px,#ff0079 400px,#ff0075 408px,#ff0071 416px,#ff006e 424px,#ff006b 429px)"></i><i style="left:67px;top:234.0px;width:425px;background:linear-gradient(90deg,#0049ff 0px,#0046ff 8px,#0044ff 16px,#0041ff 24px,#003fff 32px,#003cff 40px,#0039ff 48px,#0037ff 56px,#0034ff 64px,#0031ff 72px,#002eff 80px,#002cff 88px,#0129ff 96px,#0826ff 104px,#1024ff 112px,#1921ff 120px,#231eff 128px,#2d1cff 136px,#3819ff 144px,#4317ff 152px,#4e14ff 160px,#5a11ff 168px,#650fff 176px,#720cff 184px,#7e0aff 192px,#8b07ff 200px,#9805ff 208px,#a503ff 216px,#b201ff 224px,#c000ff 232px,#ce00ff 240px,#dc00ff 248px,#ea00ff 256px,#f900ff 264px,#ff00f7 272px,#ff00e9 280px,#ff00dd 288px,#ff00d2 296px,#ff00c8 304px,#ff00bf 312px,#ff00b6 320px,#ff00ae 328px,#ff00a7 336px,#ff00a0 344px,#ff0099 352px,#ff0093 360px,#ff008d 368px,#ff0088 376px,#ff0083 384px,#ff007f 392px,#ff007a 400px,#ff0076 408px,#ff0072 416px,#ff006e 424px,#ff006e 425px)"></i><i style="left:68px;top:236.0px;width:422px;background:linear-gradient(90deg,#0047ff 0px,#0045ff 8px,#0042ff 16px,#003fff 24px,#003dff 32px,#003aff 40px,#0038ff 48px,#0035ff 56px,#0032ff 64px,#0030ff 72px,#002dff 80px,#002aff 88px,#0128ff 96px,#0825ff 104px,#1122ff 112px,#1a20ff 120px,#241dff 128px,#2e1bff 136px,#3818ff 144px,#4315ff 152px,#4e13ff 160px,#5a10ff 168px,#650eff 176px,#710bff 184px,#7e09ff 192px,#8a07ff 200px,#9704ff 208px,#a402ff 216px,#b100ff 224px,#bf00ff 232px,#cc00ff 240px,#da00ff 248px,#e900ff 256px,#f700ff 264px,#ff00f9 272px,#ff00eb 280px,#ff00df 288px,#ff00d4 296px,#ff00ca 304px,#ff00c0 312px,#ff00b8 320px,#ff00af 328px,#ff00a8 336px,#ff00a1 344px,#ff009b 352px,#ff0095 360px,#ff008f 368px,#ff008a 376px,#ff0085 384px,#ff0080 392px,#ff007b 400px,#ff0077 408px,#ff0073 416px,#ff0070 422px)"></i><i style="left:69px;top:238.0px;width:419px;background:linear-gradient(90deg,#0045ff 0px,#0043ff 8px,#0040ff 16px,#003eff 24px,#003bff 32px,#0038ff 40px,#0036ff 48px,#0033ff 56px,#0031ff 64px,#002eff 72px,#002bff 80px,#0029ff 88px,#0226ff 96px,#0924ff 104px,#1121ff 112px,#1a1eff 120px,#241cff 128px,#2e19ff 136px,#3817ff 144px,#4314ff 152px,#4e12ff 160px,#5a0fff 168px,#650dff 176px,#710aff 184px,#7d08ff 192px,#8a06ff 200px,#9603ff 208px,#a301ff 216px,#b000ff 224px,#be00ff 232px,#cb00ff 240px,#d900ff 248px,#e700ff 256px,#f500ff 264px,#ff00fa 272px,#ff00ed 280px,#ff00e1 288px,#ff00d6 296px,#ff00cb 304px,#ff00c2 312px,#ff00b9 320px,#ff00b1 328px,#ff00aa 336px,#ff00a3 344px,#ff009c 352px,#ff0096 360px,#ff0090 368px,#ff008b 376px,#ff0086 384px,#ff0081 392px,#ff007d 400px,#ff0078 408px,#ff0074 416px,#ff0073 419px)"></i><i style="left:70px;top:240.0px;width:416px;background:linear-gradient(90deg,#0044ff 0px,#0041ff 8px,#003fff 16px,#003cff 24px,#0039ff 32px,#0037ff 40px,#0034ff 48px,#0032ff 56px,#002fff 64px,#002dff 72px,#002aff 80px,#0027ff 88px,#0225ff 96px,#0922ff 104px,#1220ff 112px,#1b1dff 120px,#241bff 128px,#2e18ff 136px,#3915ff 144px,#4313ff 152px,#4e10ff 160px,#590eff 168px,#650cff 176px,#7109ff 184px,#7d07ff 192px,#8905ff 200px,#9603ff 208px,#a201ff 216px,#af00ff 224px,#bc00ff 232px,#ca00ff 240px,#d800ff 248px,#e500ff 256px,#f400ff 264px,#ff00fc 272px,#ff00ef 280px,#ff00e2 288px,#ff00d7 296px,#ff00cd 304px,#ff00c3 312px,#ff00bb 320px,#ff00b3 328px,#ff00ab 336px,#ff00a4 344px,#ff009d 352px,#ff0097 360px,#ff0092 368px,#ff008c 376px,#ff0087 384px,#ff0082 392px,#ff007e 400px,#ff007a 408px,#ff0076 416px)"></i><i style="left:71px;top:242.0px;width:413px;background:linear-gradient(90deg,#0042ff 0px,#003fff 8px,#003dff 16px,#003aff 24px,#0038ff 32px,#0035ff 40px,#0033ff 48px,#0030ff 56px,#002eff 64px,#002bff 72px,#0028ff 80px,#0026ff 88px,#0323ff 96px,#0a21ff 104px,#121eff 112px,#1b1cff 120px,#2519ff 128px,#2f17ff 136px,#3914ff 144px,#4312ff 152px,#4e0fff 160px,#590dff 168px,#650bff 176px,#7008ff 184px,#7c06ff 192px,#8904ff 200px,#9502ff 208px,#a200ff 216px,#ae00ff 224px,#bb00ff 232px,#c900ff 240px,#d600ff 248px,#e400ff 256px,#f200ff 264px,#ff00fe 272px,#ff00f0 280px,#ff00e4 288px,#ff00d9 296px,#ff00cf 304px,#ff00c5 312px,#ff00bc 320px,#ff00b4 328px,#ff00ac 336px,#ff00a5 344px,#ff009f 352px,#ff0099 360px,#ff0093 368px,#ff008d 376px,#ff0088 384px,#ff0084 392px,#ff007f 400px,#ff007b 408px,#ff0078 413px)"></i><i style="left:72px;top:244.0px;width:410px;background:linear-gradient(90deg,#0040ff 0px,#003eff 8px,#003bff 16px,#0039ff 24px,#0036ff 32px,#0034ff 40px,#0031ff 48px,#002fff 56px,#002cff 64px,#002aff 72px,#0027ff 80px,#0025ff 88px,#0322ff 96px,#0b20ff 104px,#131dff 112px,#1c1bff 120px,#2518ff 128px,#2f16ff 136px,#3913ff 144px,#4411ff 152px,#4e0eff 160px,#590cff 168px,#650aff 176px,#7007ff 184px,#7c05ff 192px,#8803ff 200px,#9401ff 208px,#a100ff 216px,#ad00ff 224px,#ba00ff 232px,#c800ff 240px,#d500ff 248px,#e200ff 256px,#f000ff 264px,#fe00ff 272px,#ff00f2 280px,#ff00e6 288px,#ff00db 296px,#ff00d0 304px,#ff00c7 312px,#ff00be 320px,#ff00b6 328px,#ff00ae 336px,#ff00a7 344px,#ff00a0 352px,#ff009a 360px,#ff0094 368px,#ff008f 376px,#ff008a 384px,#ff0085 392px,#ff0080 400px,#ff007c 408px,#ff007b 410px)"></i><i style="left:73px;top:246.0px;width:407px;background:linear-gradient(90deg,#003fff 0px,#003cff 8px,#003aff 16px,#0037ff 24px,#0035ff 32px,#0032ff 40px,#0030ff 48px,#002dff 56px,#002bff 64px,#0028ff 72px,#0026ff 80px,#0023ff 88px,#0421ff 96px,#0b1eff 104px,#131cff 112px,#1c19ff 120px,#2617ff 128px,#2f14ff 136px,#3912ff 144px,#4410ff 152px,#4e0dff 160px,#590bff 168px,#6509ff 176px,#7006ff 184px,#7c04ff 192px,#8802ff 200px,#9401ff 208px,#a000ff 216px,#ad00ff 224px,#b900ff 232px,#c600ff 240px,#d400ff 248px,#e100ff 256px,#ef00ff 264px,#fc00ff 272px,#ff00f4 280px,#ff00e8 288px,#ff00dc 296px,#ff00d2 304px,#ff00c8 312px,#ff00bf 320px,#ff00b7 328px,#ff00af 336px,#ff00a8 344px,#ff00a2 352px,#ff009b 360px,#ff0096 368px,#ff0090 376px,#ff008b 384px,#ff0086 392px,#ff0081 400px,#ff007e 407px)"></i><i style="left:74px;top:248.0px;width:404px;background:linear-gradient(90deg,#003dff 0px,#003bff 8px,#0038ff 16px,#0036ff 24px,#0033ff 32px,#0031ff 40px,#002eff 48px,#002cff 56px,#0029ff 64px,#0027ff 72px,#0024ff 80px,#0022ff 88px,#041fff 96px,#0c1dff 104px,#141bff 112px,#1d18ff 120px,#2616ff 128px,#3013ff 136px,#3a11ff 144px,#440fff 152px,#4e0cff 160px,#590aff 168px,#6408ff 176px,#7006ff 184px,#7b04ff 192px,#8702ff 200px,#9300ff 208px,#9f00ff 216px,#ac00ff 224px,#b800ff 232px,#c500ff 240px,#d200ff 248px,#e000ff 256px,#ed00ff 264px,#fb00ff 272px,#ff00f6 280px,#ff00e9 288px,#ff00de 296px,#ff00d3 304px,#ff00ca 312px,#ff00c1 320px,#ff00b9 328px,#ff00b1 336px,#ff00aa 344px,#ff00a3 352px,#ff009d 360px,#ff0097 368px,#ff0091 376px,#ff008c 384px,#ff0087 392px,#ff0083 400px,#ff0080 404px)"></i><i style="left:76px;top:250.0px;width:400px;background:linear-gradient(90deg,#003bff 0px,#0039ff 8px,#0036ff 16px,#0034ff 24px,#0031ff 32px,#002fff 40px,#002dff 48px,#002aff 56px,#0028ff 64px,#0025ff 72px,#0023ff 80px,#0020ff 88px,#061eff 96px,#0d1bff 104px,#1619ff 112px,#1e17ff 120px,#2814ff 128px,#3112ff 136px,#3b10ff 144px,#450dff 152px,#500bff 160px,#5b09ff 168px,#6607ff 176px,#7104ff 184px,#7c03ff 192px,#8801ff 200px,#9400ff 208px,#a000ff 216px,#ac00ff 224px,#b900ff 232px,#c600ff 240px,#d300ff 248px,#e000ff 256px,#ed00ff 264px,#fb00ff 272px,#ff00f6 280px,#ff00e9 288px,#ff00de 296px,#ff00d4 304px,#ff00ca 312px,#ff00c1 320px,#ff00b9 328px,#ff00b1 336px,#ff00aa 344px,#ff00a4 352px,#ff009d 360px,#ff0098 368px,#ff0092 376px,#ff008d 384px,#ff0088 392px,#ff0083 400px)"></i><i style="left:77px;top:252.0px;width:397px;background:linear-gradient(90deg,#003aff 0px,#0037ff 8px,#0035ff 16px,#0032ff 24px,#0030ff 32px,#002eff 40px,#002bff 48px,#0029ff 56px,#0026ff 64px,#0024ff 72px,#0021ff 80px,#001fff 88px,#061dff 96px,#0e1aff 104px,#1618ff 112px,#1f16ff 120px,#2813ff 128px,#3211ff 136px,#3b0fff 144px,#450cff 152px,#500aff 160px,#5b08ff 168px,#6506ff 176px,#7104ff 184px,#7c02ff 192px,#8800ff 200px,#9300ff 208px,#9f00ff 216px,#ac00ff 224px,#b800ff 232px,#c500ff 240px,#d100ff 248px,#de00ff 256px,#ec00ff 264px,#f900ff 272px,#ff00f7 280px,#ff00eb 288px,#ff00e0 296px,#ff00d5 304px,#ff00cc 312px,#ff00c3 320px,#ff00bb 328px,#ff00b3 336px,#ff00ac 344px,#ff00a5 352px,#ff009f 360px,#ff0099 368px,#ff0093 376px,#ff008e 384px,#ff0089 392px,#ff0086 397px)"></i><i style="left:78px;top:254.0px;width:394px;background:linear-gradient(90deg,#0038ff 0px,#0036ff 8px,#0033ff 16px,#0031ff 24px,#002fff 32px,#002cff 40px,#002aff 48px,#0027ff 56px,#0025ff 64px,#0023ff 72px,#0020ff 80px,#001eff 88px,#071bff 96px,#0e19ff 104px,#1717ff 112px,#1f14ff 120px,#2812ff 128px,#3210ff 136px,#3c0eff 144px,#460bff 152px,#5009ff 160px,#5a07ff 168px,#6505ff 176px,#7003ff 184px,#7c01ff 192px,#8700ff 200px,#9300ff 208px,#9f00ff 216px,#ab00ff 224px,#b700ff 232px,#c400ff 240px,#d000ff 248px,#dd00ff 256px,#ea00ff 264px,#f700ff 272px,#ff00f9 280px,#ff00ed 288px,#ff00e1 296px,#ff00d7 304px,#ff00cd 312px,#ff00c4 320px,#ff00bc 328px,#ff00b4 336px,#ff00ad 344px,#ff00a6 352px,#ff00a0 360px,#ff009a 368px,#ff0095 376px,#ff008f 384px,#ff008a 392px,#ff0089 394px)"></i><i style="left:79px;top:256.0px;width:391px;background:linear-gradient(90deg,#0037ff 0px,#0034ff 8px,#0032ff 16px,#0030ff 24px,#002dff 32px,#002bff 40px,#0028ff 48px,#0026ff 56px,#0024ff 64px,#0021ff 72px,#001fff 80px,#011dff 88px,#071aff 96px,#0f18ff 104px,#1716ff 112px,#2013ff 120px,#2911ff 128px,#320fff 136px,#3c0dff 144px,#460aff 152px,#5008ff 160px,#5a06ff 168px,#6504ff 176px,#7002ff 184px,#7b01ff 192px,#8700ff 200px,#9200ff 208px,#9e00ff 216px,#aa00ff 224px,#b600ff 232px,#c200ff 240px,#cf00ff 248px,#dc00ff 256px,#e900ff 264px,#f600ff 272px,#ff00fb 280px,#ff00ee 288px,#ff00e3 296px,#ff00d9 304px,#ff00cf 312px,#ff00c6 320px,#ff00bd 328px,#ff00b6 336px,#ff00af 344px,#ff00a8 352px,#ff00a1 360px,#ff009b 368px,#ff0096 376px,#ff0091 384px,#ff008c 391px)"></i><i style="left:80px;top:258.0px;width:388px;background:linear-gradient(90deg,#0035ff 0px,#0033ff 8px,#0030ff 16px,#002eff 24px,#002cff 32px,#0029ff 40px,#0027ff 48px,#0025ff 56px,#0022ff 64px,#0020ff 72px,#001eff 80px,#011bff 88px,#0819ff 96px,#0f17ff 104px,#1715ff 112px,#2012ff 120px,#2910ff 128px,#320eff 136px,#3c0cff 144px,#4609ff 152px,#5007ff 160px,#5a05ff 168px,#6503ff 176px,#7002ff 184px,#7b00ff 192px,#8600ff 200px,#9200ff 208px,#9d00ff 216px,#a900ff 224px,#b500ff 232px,#c100ff 240px,#ce00ff 248px,#da00ff 256px,#e700ff 264px,#f400ff 272px,#ff00fd 280px,#ff00f0 288px,#ff00e5 296px,#ff00da 304px,#ff00d0 312px,#ff00c7 320px,#ff00bf 328px,#ff00b7 336px,#ff00b0 344px,#ff00a9 352px,#ff00a3 360px,#ff009d 368px,#ff0097 376px,#ff0092 384px,#ff008f 388px)"></i><i style="left:81px;top:260.0px;width:385px;background:linear-gradient(90deg,#0034ff 0px,#0031ff 8px,#002fff 16px,#002dff 24px,#002aff 32px,#0028ff 40px,#0026ff 48px,#0023ff 56px,#0021ff 64px,#001fff 72px,#001dff 80px,#021aff 88px,#0818ff 96px,#1016ff 104px,#1813ff 112px,#2011ff 120px,#290fff 128px,#330dff 136px,#3c0bff 144px,#4609ff 152px,#5007ff 160px,#5a05ff 168px,#6503ff 176px,#7001ff 184px,#7b00ff 192px,#8600ff 200px,#9100ff 208px,#9d00ff 216px,#a800ff 224px,#b400ff 232px,#c000ff 240px,#cd00ff 248px,#d900ff 256px,#e600ff 264px,#f300ff 272px,#ff00fe 280px,#ff00f2 288px,#ff00e6 296px,#ff00dc 304px,#ff00d2 312px,#ff00c9 320px,#ff00c0 328px,#ff00b9 336px,#ff00b1 344px,#ff00aa 352px,#ff00a4 360px,#ff009e 368px,#ff0098 376px,#ff0093 384px,#ff0092 385px)"></i><i style="left:83px;top:262.0px;width:382px;background:linear-gradient(90deg,#0032ff 0px,#0030ff 8px,#002dff 16px,#002bff 24px,#0029ff 32px,#0027ff 40px,#0024ff 48px,#0022ff 56px,#0020ff 64px,#001dff 72px,#001bff 80px,#0319ff 88px,#0a17ff 96px,#1114ff 104px,#1912ff 112px,#2210ff 120px,#2b0eff 128px,#340cff 136px,#3e0aff 144px,#4707ff 152px,#5105ff 160px,#5c04ff 168px,#6602ff 176px,#7100ff 184px,#7c00ff 192px,#8700ff 200px,#9200ff 208px,#9d00ff 216px,#a900ff 224px,#b500ff 232px,#c100ff 240px,#cd00ff 248px,#da00ff 256px,#e600ff 264px,#f300ff 272px,#ff00fe 280px,#ff00f2 288px,#ff00e6 296px,#ff00dc 304px,#ff00d2 312px,#ff00c9 320px,#ff00c1 328px,#ff00b9 336px,#ff00b2 344px,#ff00ab 352px,#ff00a5 360px,#ff009f 368px,#ff0099 376px,#ff0095 382px)"></i><i style="left:84px;top:264.0px;width:379px;background:linear-gradient(90deg,#0031ff 0px,#002eff 8px,#002cff 16px,#002aff 24px,#0028ff 32px,#0025ff 40px,#0023ff 48px,#0021ff 56px,#001fff 64px,#001cff 72px,#001aff 80px,#0318ff 88px,#0a16ff 96px,#1213ff 104px,#1a11ff 112px,#220fff 120px,#2b0dff 128px,#340bff 136px,#3e09ff 144px,#4707ff 152px,#5105ff 160px,#5b03ff 168px,#6601ff 176px,#7000ff 184px,#7b00ff 192px,#8600ff 200px,#9100ff 208px,#9d00ff 216px,#a800ff 224px,#b400ff 232px,#c000ff 240px,#cc00ff 248px,#d800ff 256px,#e500ff 264px,#f100ff 272px,#fe00ff 280px,#ff00f3 288px,#ff00e8 296px,#ff00dd 304px,#ff00d4 312px,#ff00cb 320px,#ff00c2 328px,#ff00ba 336px,#ff00b3 344px,#ff00ac 352px,#ff00a6 360px,#ff00a0 368px,#ff009a 376px,#ff0098 379px)"></i><i style="left:85px;top:266.0px;width:376px;background:linear-gradient(90deg,#002fff 0px,#002dff 8px,#002bff 16px,#0029ff 24px,#0026ff 32px,#0024ff 40px,#0022ff 48px,#0020ff 56px,#001dff 64px,#001bff 72px,#0019ff 80px,#0417ff 88px,#0b15ff 96px,#1212ff 104px,#1a10ff 112px,#230eff 120px,#2c0cff 128px,#350aff 136px,#3e08ff 144px,#4806ff 152px,#5104ff 160px,#5b02ff 168px,#6601ff 176px,#7000ff 184px,#7b00ff 192px,#8600ff 200px,#9100ff 208px,#9c00ff 216px,#a700ff 224px,#b300ff 232px,#bf00ff 240px,#cb00ff 248px,#d700ff 256px,#e300ff 264px,#f000ff 272px,#fd00ff 280px,#ff00f5 288px,#ff00ea 296px,#ff00df 304px,#ff00d5 312px,#ff00cc 320px,#ff00c4 328px,#ff00bc 336px,#ff00b5 344px,#ff00ae 352px,#ff00a7 360px,#ff00a1 368px,#ff009b 376px)"></i><i style="left:86px;top:268.0px;width:373px;background:linear-gradient(90deg,#002eff 0px,#002cff 8px,#002aff 16px,#0027ff 24px,#0025ff 32px,#0023ff 40px,#0021ff 48px,#001eff 56px,#001cff 64px,#001aff 72px,#0018ff 80px,#0416ff 88px,#0b13ff 96px,#1311ff 104px,#1b0fff 112px,#230dff 120px,#2c0bff 128px,#3509ff 136px,#3e07ff 144px,#4805ff 152px,#5103ff 160px,#5b02ff 168px,#6600ff 176px,#7000ff 184px,#7b00ff 192px,#8500ff 200px,#9000ff 208px,#9b00ff 216px,#a700ff 224px,#b200ff 232px,#be00ff 240px,#ca00ff 248px,#d600ff 256px,#e200ff 264px,#ee00ff 272px,#fb00ff 280px,#ff00f7 288px,#ff00eb 296px,#ff00e0 304px,#ff00d7 312px,#ff00ce 320px,#ff00c5 328px,#ff00bd 336px,#ff00b6 344px,#ff00af 352px,#ff00a9 360px,#ff00a2 368px,#ff009f 373px)"></i><i style="left:87px;top:270.0px;width:370px;background:linear-gradient(90deg,#002dff 0px,#002bff 8px,#0028ff 16px,#0026ff 24px,#0024ff 32px,#0022ff 40px,#001fff 48px,#001dff 56px,#001bff 64px,#0019ff 72px,#0017ff 80px,#0515ff 88px,#0c12ff 96px,#1310ff 104px,#1b0eff 112px,#240cff 120px,#2c0aff 128px,#3508ff 136px,#3e06ff 144px,#4804ff 152px,#5103ff 160px,#5b01ff 168px,#6500ff 176px,#7000ff 184px,#7a00ff 192px,#8500ff 200px,#9000ff 208px,#9b00ff 216px,#a600ff 224px,#b100ff 232px,#bd00ff 240px,#c900ff 248px,#d500ff 256px,#e100ff 264px,#ed00ff 272px,#f900ff 280px,#ff00f8 288px,#ff00ed 296px,#ff00e2 304px,#ff00d8 312px,#ff00cf 320px,#ff00c7 328px,#ff00bf 336px,#ff00b7 344px,#ff00b0 352px,#ff00aa 360px,#ff00a4 368px,#ff00a2 370px)"></i><i style="left:89px;top:272.0px;width:366px;background:linear-gradient(90deg,#002bff 0px,#0029ff 8px,#0027ff 16px,#0025ff 24px,#0022ff 32px,#0020ff 40px,#001eff 48px,#001cff 56px,#001aff 64px,#0018ff 72px,#0015ff 80px,#0613ff 88px,#0d11ff 96px,#150fff 104px,#1d0dff 112px,#250bff 120px,#2e09ff 128px,#3607ff 136px,#4005ff 144px,#4903ff 152px,#5302ff 160px,#5c00ff 168px,#6700ff 176px,#7100ff 184px,#7b00ff 192px,#8600ff 200px,#9100ff 208px,#9c00ff 216px,#a700ff 224px,#b200ff 232px,#bd00ff 240px,#c900ff 248px,#d500ff 256px,#e100ff 264px,#ed00ff 272px,#f900ff 280px,#ff00f8 288px,#ff00ed 296px,#ff00e2 304px,#ff00d8 312px,#ff00cf 320px,#ff00c7 328px,#ff00bf 336px,#ff00b8 344px,#ff00b1 352px,#ff00aa 360px,#ff00a6 366px)"></i><i style="left:90px;top:274.0px;width:363px;background:linear-gradient(90deg,#002aff 0px,#0028ff 8px,#0026ff 16px,#0023ff 24px,#0021ff 32px,#001fff 40px,#001dff 48px,#001bff 56px,#0019ff 64px,#0017ff 72px,#0114ff 80px,#0712ff 88px,#0e10ff 96px,#150eff 104px,#1d0cff 112px,#250aff 120px,#2e08ff 128px,#3706ff 136px,#4004ff 144px,#4903ff 152px,#5301ff 160px,#5c00ff 168px,#6600ff 176px,#7100ff 184px,#7b00ff 192px,#8500ff 200px,#9000ff 208px,#9b00ff 216px,#a600ff 224px,#b100ff 232px,#bd00ff 240px,#c800ff 248px,#d400ff 256px,#e000ff 264px,#ec00ff 272px,#f800ff 280px,#ff00fa 288px,#ff00ee 296px,#ff00e4 304px,#ff00da 312px,#ff00d1 320px,#ff00c8 328px,#ff00c0 336px,#ff00b9 344px,#ff00b2 352px,#ff00ac 360px,#ff00a9 363px)"></i><i style="left:91px;top:276.0px;width:360px;background:linear-gradient(90deg,#0029ff 0px,#0027ff 8px,#0024ff 16px,#0022ff 24px,#0020ff 32px,#001eff 40px,#001cff 48px,#001aff 56px,#0018ff 64px,#0016ff 72px,#0113ff 80px,#0711ff 88px,#0e0fff 96px,#160dff 104px,#1d0bff 112px,#2609ff 120px,#2e07ff 128px,#3706ff 136px,#4004ff 144px,#4902ff 152px,#5301ff 160px,#5c00ff 168px,#6600ff 176px,#7000ff 184px,#7b00ff 192px,#8500ff 200px,#9000ff 208px,#9a00ff 216px,#a500ff 224px,#b000ff 232px,#bc00ff 240px,#c700ff 248px,#d300ff 256px,#de00ff 264px,#ea00ff 272px,#f600ff 280px,#ff00fb 288px,#ff00f0 296px,#ff00e5 304px,#ff00db 312px,#ff00d2 320px,#ff00ca 328px,#ff00c2 336px,#ff00ba 344px,#ff00b3 352px,#ff00ad 360px)"></i><i style="left:92px;top:278.0px;width:357px;background:linear-gradient(90deg,#0028ff 0px,#0025ff 8px,#0023ff 16px,#0021ff 24px,#001fff 32px,#001dff 40px,#001bff 48px,#0019ff 56px,#0017ff 64px,#0015ff 72px,#0213ff 80px,#0810ff 88px,#0f0eff 96px,#160cff 104px,#1e0bff 112px,#2609ff 120px,#2e07ff 128px,#3705ff 136px,#4003ff 144px,#4901ff 152px,#5300ff 160px,#5c00ff 168px,#6600ff 176px,#7000ff 184px,#7a00ff 192px,#8500ff 200px,#8f00ff 208px,#9a00ff 216px,#a500ff 224px,#b000ff 232px,#bb00ff 240px,#c600ff 248px,#d200ff 256px,#dd00ff 264px,#e900ff 272px,#f500ff 280px,#ff00fd 288px,#ff00f1 296px,#ff00e7 304px,#ff00dd 312px,#ff00d4 320px,#ff00cb 328px,#ff00c3 336px,#ff00bc 344px,#ff00b5 352px,#ff00b1 357px)"></i><i style="left:93px;top:280.0px;width:354px;background:linear-gradient(90deg,#0026ff 0px,#0024ff 8px,#0022ff 16px,#0020ff 24px,#001eff 32px,#001cff 40px,#001aff 48px,#0018ff 56px,#0016ff 64px,#0014ff 72px,#0212ff 80px,#0810ff 88px,#0f0eff 96px,#160cff 104px,#1e0aff 112px,#2608ff 120px,#2f06ff 128px,#3704ff 136px,#4002ff 144px,#4901ff 152px,#5300ff 160px,#5c00ff 168px,#6600ff 176px,#7000ff 184px,#7a00ff 192px,#8400ff 200px,#8f00ff 208px,#9900ff 216px,#a400ff 224px,#af00ff 232px,#ba00ff 240px,#c500ff 248px,#d000ff 256px,#dc00ff 264px,#e800ff 272px,#f400ff 280px,#ff00fe 288px,#ff00f3 296px,#ff00e8 304px,#ff00de 312px,#ff00d5 320px,#ff00cc 328px,#ff00c4 336px,#ff00bd 344px,#ff00b6 352px,#ff00b4 354px)"></i><i style="left:95px;top:282.0px;width:350px;background:linear-gradient(90deg,#0025ff 0px,#0023ff 8px,#0021ff 16px,#001fff 24px,#001dff 32px,#001bff 40px,#0019ff 48px,#0016ff 56px,#0014ff 64px,#0012ff 72px,#0310ff 80px,#090eff 88px,#100cff 96px,#180bff 104px,#2009ff 112px,#2807ff 120px,#3005ff 128px,#3903ff 136px,#4202ff 144px,#4b00ff 152px,#5400ff 160px,#5d00ff 168px,#6700ff 176px,#7100ff 184px,#7b00ff 192px,#8500ff 200px,#8f00ff 208px,#9a00ff 216px,#a500ff 224px,#af00ff 232px,#ba00ff 240px,#c600ff 248px,#d100ff 256px,#dc00ff 264px,#e800ff 272px,#f400ff 280px,#ff00fe 288px,#ff00f3 296px,#ff00e8 304px,#ff00de 312px,#ff00d5 320px,#ff00cd 328px,#ff00c5 336px,#ff00bd 344px,#ff00b8 350px)"></i><i style="left:96px;top:284.0px;width:347px;background:linear-gradient(90deg,#0024ff 0px,#0022ff 8px,#0020ff 16px,#001eff 24px,#001cff 32px,#001aff 40px,#0018ff 48px,#0016ff 56px,#0014ff 64px,#0012ff 72px,#0410ff 80px,#0a0eff 88px,#110cff 96px,#180aff 104px,#2008ff 112px,#2806ff 120px,#3004ff 128px,#3903ff 136px,#4201ff 144px,#4b00ff 152px,#5400ff 160px,#5d00ff 168px,#6700ff 176px,#7100ff 184px,#7b00ff 192px,#8500ff 200px,#8f00ff 208px,#9900ff 216px,#a400ff 224px,#af00ff 232px,#b900ff 240px,#c500ff 248px,#d000ff 256px,#db00ff 264px,#e700ff 272px,#f200ff 280px,#fe00ff 288px,#ff00f4 296px,#ff00ea 304px,#ff00e0 312px,#ff00d7 320px,#ff00ce 328px,#ff00c6 336px,#ff00bf 344px,#ff00bc 347px)"></i><i style="left:97px;top:286.0px;width:344px;background:linear-gradient(90deg,#0023ff 0px,#0021ff 8px,#001fff 16px,#001dff 24px,#001bff 32px,#0019ff 40px,#0017ff 48px,#0015ff 56px,#0013ff 64px,#0011ff 72px,#040fff 80px,#0a0dff 88px,#110bff 96px,#1909ff 104px,#2007ff 112px,#2805ff 120px,#3104ff 128px,#3902ff 136px,#4201ff 144px,#4b00ff 152px,#5400ff 160px,#5d00ff 168px,#6700ff 176px,#7000ff 184px,#7a00ff 192px,#8400ff 200px,#8e00ff 208px,#9900ff 216px,#a300ff 224px,#ae00ff 232px,#b900ff 240px,#c400ff 248px,#cf00ff 256px,#da00ff 264px,#e500ff 272px,#f100ff 280px,#fd00ff 288px,#ff00f6 296px,#ff00eb 304px,#ff00e1 312px,#ff00d8 320px,#ff00d0 328px,#ff00c8 336px,#ff00c0 344px)"></i><i style="left:98px;top:288.0px;width:341px;background:linear-gradient(90deg,#0022ff 0px,#0020ff 8px,#001eff 16px,#001cff 24px,#001aff 32px,#0018ff 40px,#0016ff 48px,#0014ff 56px,#0012ff 64px,#0010ff 72px,#050eff 80px,#0b0cff 88px,#120aff 96px,#1908ff 104px,#2106ff 112px,#2905ff 120px,#3103ff 128px,#3901ff 136px,#4200ff 144px,#4b00ff 152px,#5400ff 160px,#5d00ff 168px,#6700ff 176px,#7000ff 184px,#7a00ff 192px,#8400ff 200px,#8e00ff 208px,#9800ff 216px,#a300ff 224px,#ad00ff 232px,#b800ff 240px,#c300ff 248px,#ce00ff 256px,#d900ff 264px,#e400ff 272px,#f000ff 280px,#fb00ff 288px,#ff00f7 296px,#ff00ed 304px,#ff00e3 312px,#ff00da 320px,#ff00d1 328px,#ff00c9 336px,#ff00c4 341px)"></i><i style="left:100px;top:290.0px;width:337px;background:linear-gradient(90deg,#0020ff 0px,#001eff 8px,#001cff 16px,#001aff 24px,#0018ff 32px,#0016ff 40px,#0014ff 48px,#0012ff 56px,#0011ff 64px,#000fff 72px,#060dff 80px,#0c0bff 88px,#1309ff 96px,#1a07ff 104px,#2205ff 112px,#2a04ff 120px,#3202ff 128px,#3b01ff 136px,#4300ff 144px,#4c00ff 152px,#5500ff 160px,#5e00ff 168px,#6800ff 176px,#7100ff 184px,#7b00ff 192px,#8500ff 200px,#8f00ff 208px,#9900ff 216px,#a300ff 224px,#ae00ff 232px,#b800ff 240px,#c300ff 248px,#ce00ff 256px,#d900ff 264px,#e400ff 272px,#f000ff 280px,#fb00ff 288px,#ff00f7 296px,#ff00ed 304px,#ff00e3 312px,#ff00da 320px,#ff00d1 328px,#ff00c9 336px,#ff00c8 337px)"></i><i style="left:101px;top:292.0px;width:334px;background:linear-gradient(90deg,#001fff 0px,#001dff 8px,#001bff 16px,#0019ff 24px,#0017ff 32px,#0015ff 40px,#0014ff 48px,#0012ff 56px,#0010ff 64px,#010eff 72px,#060cff 80px,#0d0aff 88px,#1408ff 96px,#1b07ff 104px,#2205ff 112px,#2a03ff 120px,#3202ff 128px,#3b00ff 136px,#4300ff 144px,#4c00ff 152px,#5500ff 160px,#5e00ff 168px,#6700ff 176px,#7100ff 184px,#7b00ff 192px,#8400ff 200px,#8e00ff 208px,#9800ff 216px,#a300ff 224px,#ad00ff 232px,#b700ff 240px,#c200ff 248px,#cd00ff 256px,#d800ff 264px,#e300ff 272px,#ee00ff 280px,#fa00ff 288px,#ff00f9 296px,#ff00ee 304px,#ff00e4 312px,#ff00db 320px,#ff00d3 328px,#ff00cc 334px)"></i><i style="left:102px;top:294.0px;width:331px;background:linear-gradient(90deg,#001eff 0px,#001cff 8px,#001aff 16px,#0018ff 24px,#0016ff 32px,#0015ff 40px,#0013ff 48px,#0011ff 56px,#000fff 64px,#010dff 72px,#070bff 80px,#0d09ff 88px,#1408ff 96px,#1b06ff 104px,#2304ff 112px,#2b03ff 120px,#3301ff 128px,#3b00ff 136px,#4300ff 144px,#4c00ff 152px,#5500ff 160px,#5e00ff 168px,#6700ff 176px,#7100ff 184px,#7a00ff 192px,#8400ff 200px,#8e00ff 208px,#9800ff 216px,#a200ff 224px,#ac00ff 232px,#b700ff 240px,#c100ff 248px,#cc00ff 256px,#d700ff 264px,#e200ff 272px,#ed00ff 280px,#f800ff 288px,#ff00fa 296px,#ff00f0 304px,#ff00e6 312px,#ff00dc 320px,#ff00d4 328px,#ff00d1 331px)"></i><i style="left:103px;top:296.0px;width:328px;background:linear-gradient(90deg,#001dff 0px,#001bff 8px,#0019ff 16px,#0017ff 24px,#0016ff 32px,#0014ff 40px,#0012ff 48px,#0010ff 56px,#000eff 64px,#020cff 72px,#070aff 80px,#0e09ff 88px,#1407ff 96px,#1c05ff 104px,#2303ff 112px,#2b02ff 120px,#3301ff 128px,#3b00ff 136px,#4400ff 144px,#4c00ff 152px,#5500ff 160px,#5e00ff 168px,#6700ff 176px,#7000ff 184px,#7a00ff 192px,#8400ff 200px,#8d00ff 208px,#9700ff 216px,#a100ff 224px,#ac00ff 232px,#b600ff 240px,#c000ff 248px,#cb00ff 256px,#d600ff 264px,#e100ff 272px,#ec00ff 280px,#f700ff 288px,#ff00fc 296px,#ff00f1 304px,#ff00e7 312px,#ff00de 320px,#ff00d5 328px)"></i><i style="left:105px;top:298.0px;width:325px;background:linear-gradient(90deg,#001cff 0px,#001aff 8px,#0018ff 16px,#0016ff 24px,#0014ff 32px,#0013ff 40px,#0011ff 48px,#000fff 56px,#000dff 64px,#030bff 72px,#0809ff 80px,#0f08ff 88px,#1606ff 96px,#1d04ff 104px,#2403ff 112px,#2c01ff 120px,#3400ff 128px,#3c00ff 136px,#4500ff 144px,#4d00ff 152px,#5600ff 160px,#5f00ff 168px,#6800ff 176px,#7100ff 184px,#7b00ff 192px,#8400ff 200px,#8e00ff 208px,#9800ff 216px,#a200ff 224px,#ac00ff 232px,#b600ff 240px,#c100ff 248px,#cb00ff 256px,#d600ff 264px,#e100ff 272px,#ec00ff 280px,#f700ff 288px,#ff00fc 296px,#ff00f1 304px,#ff00e7 312px,#ff00de 320px,#ff00d9 325px)"></i><i style="left:106px;top:300.0px;width:322px;background:linear-gradient(90deg,#001bff 0px,#0019ff 8px,#0017ff 16px,#0015ff 24px,#0014ff 32px,#0012ff 40px,#0010ff 48px,#000eff 56px,#000cff 64px,#030aff 72px,#0909ff 80px,#0f07ff 88px,#1605ff 96px,#1d04ff 104px,#2502ff 112px,#2c01ff 120px,#3400ff 128px,#3d00ff 136px,#4500ff 144px,#4d00ff 152px,#5600ff 160px,#5f00ff 168px,#6800ff 176px,#7100ff 184px,#7b00ff 192px,#8400ff 200px,#8e00ff 208px,#9700ff 216px,#a100ff 224px,#ab00ff 232px,#b600ff 240px,#c000ff 248px,#ca00ff 256px,#d500ff 264px,#e000ff 272px,#eb00ff 280px,#f600ff 288px,#ff00fd 296px,#ff00f3 304px,#ff00e9 312px,#ff00df 320px,#ff00dd 322px)"></i><i style="left:107px;top:302.0px;width:319px;background:linear-gradient(90deg,#001aff 0px,#0018ff 8px,#0016ff 16px,#0015ff 24px,#0013ff 32px,#0011ff 40px,#000fff 48px,#000dff 56px,#000bff 64px,#030aff 72px,#0908ff 80px,#1006ff 88px,#1605ff 96px,#1e03ff 104px,#2502ff 112px,#2d00ff 120px,#3500ff 128px,#3d00ff 136px,#4500ff 144px,#4d00ff 152px,#5600ff 160px,#5f00ff 168px,#6800ff 176px,#7100ff 184px,#7a00ff 192px,#8400ff 200px,#8d00ff 208px,#9700ff 216px,#a100ff 224px,#ab00ff 232px,#b500ff 240px,#bf00ff 248px,#c900ff 256px,#d400ff 264px,#df00ff 272px,#e900ff 280px,#f400ff 288px,#ff00ff 296px,#ff00f4 304px,#ff00ea 312px,#ff00e2 319px)"></i><i style="left:108px;top:304.0px;width:316px;background:linear-gradient(90deg,#0019ff 0px,#0017ff 8px,#0015ff 16px,#0014ff 24px,#0012ff 32px,#0010ff 40px,#000eff 48px,#000cff 56px,#000bff 64px,#0409ff 72px,#0a07ff 80px,#1006ff 88px,#1704ff 96px,#1e02ff 104px,#2501ff 112px,#2d00ff 120px,#3500ff 128px,#3d00ff 136px,#4500ff 144px,#4d00ff 152px,#5600ff 160px,#5f00ff 168px,#6800ff 176px,#7100ff 184px,#7a00ff 192px,#8300ff 200px,#8d00ff 208px,#9600ff 216px,#a000ff 224px,#aa00ff 232px,#b400ff 240px,#be00ff 248px,#c900ff 256px,#d300ff 264px,#de00ff 272px,#e800ff 280px,#f300ff 288px,#fe00ff 296px,#ff00f5 304px,#ff00eb 312px,#ff00e7 316px)"></i><i style="left:110px;top:306.0px;width:312px;background:linear-gradient(90deg,#0018ff 0px,#0016ff 8px,#0014ff 16px,#0013ff 24px,#0011ff 32px,#000fff 40px,#000dff 48px,#000bff 56px,#000aff 64px,#0508ff 72px,#0b06ff 80px,#1105ff 88px,#1803ff 96px,#1f02ff 104px,#2700ff 112px,#2e00ff 120px,#3600ff 128px,#3e00ff 136px,#4600ff 144px,#4f00ff 152px,#5700ff 160px,#6000ff 168px,#6900ff 176px,#7200ff 184px,#7b00ff 192px,#8400ff 200px,#8e00ff 208px,#9700ff 216px,#a100ff 224px,#ab00ff 232px,#b500ff 240px,#bf00ff 248px,#c900ff 256px,#d300ff 264px,#de00ff 272px,#e800ff 280px,#f300ff 288px,#fe00ff 296px,#ff00f5 304px,#ff00eb 312px)"></i><i style="left:111px;top:308.0px;width:309px;background:linear-gradient(90deg,#0017ff 0px,#0015ff 8px,#0014ff 16px,#0012ff 24px,#0010ff 32px,#000eff 40px,#000cff 48px,#000bff 56px,#0009ff 64px,#0507ff 72px,#0b06ff 80px,#1204ff 88px,#1903ff 96px,#2001ff 104px,#2700ff 112px,#2e00ff 120px,#3600ff 128px,#3e00ff 136px,#4600ff 144px,#4f00ff 152px,#5700ff 160px,#6000ff 168px,#6900ff 176px,#7100ff 184px,#7b00ff 192px,#8400ff 200px,#8d00ff 208px,#9700ff 216px,#a000ff 224px,#aa00ff 232px,#b400ff 240px,#be00ff 248px,#c800ff 256px,#d200ff 264px,#dd00ff 272px,#e700ff 280px,#f200ff 288px,#fd00ff 296px,#ff00f7 304px,#ff00f0 309px)"></i><i style="left:112px;top:310.0px;width:306px;background:linear-gradient(90deg,#0016ff 0px,#0014ff 8px,#0013ff 16px,#0011ff 24px,#000fff 32px,#000dff 40px,#000cff 48px,#000aff 56px,#0108ff 64px,#0607ff 72px,#0c05ff 80px,#1204ff 88px,#1902ff 96px,#2001ff 104px,#2700ff 112px,#2f00ff 120px,#3600ff 128px,#3e00ff 136px,#4600ff 144px,#4f00ff 152px,#5700ff 160px,#6000ff 168px,#6800ff 176px,#7100ff 184px,#7a00ff 192px,#8300ff 200px,#8d00ff 208px,#9600ff 216px,#a000ff 224px,#a900ff 232px,#b300ff 240px,#bd00ff 248px,#c700ff 256px,#d100ff 264px,#dc00ff 272px,#e600ff 280px,#f100ff 288px,#fb00ff 296px,#ff00f8 304px,#ff00f6 306px)"></i><i style="left:114px;top:312.0px;width:302px;background:linear-gradient(90deg,#0015ff 0px,#0013ff 8px,#0012ff 16px,#0010ff 24px,#000eff 32px,#000cff 40px,#000bff 48px,#0009ff 56px,#0207ff 64px,#0706ff 72px,#0d04ff 80px,#1303ff 88px,#1a01ff 96px,#2100ff 104px,#2800ff 112px,#3000ff 120px,#3800ff 128px,#3f00ff 136px,#4800ff 144px,#5000ff 152px,#5800ff 160px,#6100ff 168px,#6900ff 176px,#7200ff 184px,#7b00ff 192px,#8400ff 200px,#8d00ff 208px,#9700ff 216px,#a000ff 224px,#aa00ff 232px,#b400ff 240px,#bd00ff 248px,#c700ff 256px,#d200ff 264px,#dc00ff 272px,#e600ff 280px,#f100ff 288px,#fb00ff 296px,#ff00fb 302px)"></i><i style="left:115px;top:314.0px;width:299px;background:linear-gradient(90deg,#0014ff 0px,#0013ff 8px,#0011ff 16px,#000fff 24px,#000dff 32px,#000cff 40px,#000aff 48px,#0008ff 56px,#0207ff 64px,#0705ff 72px,#0d04ff 80px,#1402ff 88px,#1a01ff 96px,#2100ff 104px,#2900ff 112px,#3000ff 120px,#3800ff 128px,#4000ff 136px,#4800ff 144px,#5000ff 152px,#5800ff 160px,#6100ff 168px,#6900ff 176px,#7200ff 184px,#7b00ff 192px,#8400ff 200px,#8d00ff 208px,#9600ff 216px,#a000ff 224px,#a900ff 232px,#b300ff 240px,#bd00ff 248px,#c700ff 256px,#d100ff 264px,#db00ff 272px,#e500ff 280px,#ef00ff 288px,#fa00ff 296px,#fe00ff 299px)"></i><i style="left:116px;top:316.0px;width:296px;background:linear-gradient(90deg,#0014ff 0px,#0012ff 8px,#0010ff 16px,#000eff 24px,#000dff 32px,#000bff 40px,#0009ff 48px,#0008ff 56px,#0206ff 64px,#0805ff 72px,#0e03ff 80px,#1402ff 88px,#1b00ff 96px,#2200ff 104px,#2900ff 112px,#3000ff 120px,#3800ff 128px,#4000ff 136px,#4800ff 144px,#5000ff 152px,#5800ff 160px,#6000ff 168px,#6900ff 176px,#7200ff 184px,#7b00ff 192px,#8300ff 200px,#8d00ff 208px,#9600ff 216px,#9f00ff 224px,#a900ff 232px,#b200ff 240px,#bc00ff 248px,#c600ff 256px,#d000ff 264px,#da00ff 272px,#e400ff 280px,#ee00ff 288px,#f900ff 296px)"></i><i style="left:118px;top:318.0px;width:292px;background:linear-gradient(90deg,#0013ff 0px,#0011ff 8px,#000fff 16px,#000dff 24px,#000cff 32px,#000aff 40px,#0008ff 48px,#0007ff 56px,#0305ff 64px,#0904ff 72px,#0f02ff 80px,#1501ff 88px,#1c00ff 96px,#2300ff 104px,#2a00ff 112px,#3200ff 120px,#3900ff 128px,#4100ff 136px,#4900ff 144px,#5100ff 152px,#5900ff 160px,#6100ff 168px,#6a00ff 176px,#7300ff 184px,#7b00ff 192px,#8400ff 200px,#8d00ff 208px,#9600ff 216px,#a000ff 224px,#a900ff 232px,#b300ff 240px,#bc00ff 248px,#c600ff 256px,#d000ff 264px,#da00ff 272px,#e400ff 280px,#ee00ff 288px,#f400ff 292px)"></i><i style="left:119px;top:320.0px;width:289px;background:linear-gradient(90deg,#0012ff 0px,#0010ff 8px,#000eff 16px,#000dff 24px,#000bff 32px,#0009ff 40px,#0008ff 48px,#0006ff 56px,#0405ff 64px,#0903ff 72px,#0f02ff 80px,#1601ff 88px,#1c00ff 96px,#2300ff 104px,#2a00ff 112px,#3200ff 120px,#3900ff 128px,#4100ff 136px,#4900ff 144px,#5100ff 152px,#5900ff 160px,#6100ff 168px,#6a00ff 176px,#7200ff 184px,#7b00ff 192px,#8400ff 200px,#8d00ff 208px,#9600ff 216px,#9f00ff 224px,#a900ff 232px,#b200ff 240px,#bc00ff 248px,#c500ff 256px,#cf00ff 264px,#d900ff 272px,#e300ff 280px,#ed00ff 288px,#ee00ff 289px)"></i><i style="left:120px;top:322.0px;width:286px;background:linear-gradient(90deg,#0011ff 0px,#000fff 8px,#000eff 16px,#000cff 24px,#000aff 32px,#0009ff 40px,#0007ff 48px,#0006ff 56px,#0404ff 64px,#0a03ff 72px,#1001ff 80px,#1600ff 88px,#1d00ff 96px,#2400ff 104px,#2b00ff 112px,#3200ff 120px,#3900ff 128px,#4100ff 136px,#4900ff 144px,#5100ff 152px,#5900ff 160px,#6100ff 168px,#6a00ff 176px,#7200ff 184px,#7b00ff 192px,#8400ff 200px,#8c00ff 208px,#9500ff 216px,#9f00ff 224px,#a800ff 232px,#b100ff 240px,#bb00ff 248px,#c400ff 256px,#ce00ff 264px,#d800ff 272px,#e200ff 280px,#ea00ff 286px)"></i><i style="left:122px;top:324.0px;width:282px;background:linear-gradient(90deg,#0010ff 0px,#000eff 8px,#000dff 16px,#000bff 24px,#0009ff 32px,#0008ff 40px,#0006ff 48px,#0105ff 56px,#0503ff 64px,#0b02ff 72px,#1101ff 80px,#1700ff 88px,#1e00ff 96px,#2500ff 104px,#2c00ff 112px,#3300ff 120px,#3b00ff 128px,#4200ff 136px,#4a00ff 144px,#5200ff 152px,#5a00ff 160px,#6200ff 168px,#6b00ff 176px,#7300ff 184px,#7c00ff 192px,#8400ff 200px,#8d00ff 208px,#9600ff 216px,#9f00ff 224px,#a800ff 232px,#b200ff 240px,#bb00ff 248px,#c500ff 256px,#ce00ff 264px,#d800ff 272px,#e200ff 280px,#e500ff 282px)"></i><i style="left:123px;top:326.0px;width:279px;background:linear-gradient(90deg,#000fff 0px,#000eff 8px,#000cff 16px,#000aff 24px,#0009ff 32px,#0007ff 40px,#0006ff 48px,#0104ff 56px,#0603ff 64px,#0b01ff 72px,#1100ff 80px,#1800ff 88px,#1e00ff 96px,#2500ff 104px,#2c00ff 112px,#3300ff 120px,#3b00ff 128px,#4200ff 136px,#4a00ff 144px,#5200ff 152px,#5a00ff 160px,#6200ff 168px,#6a00ff 176px,#7300ff 184px,#7b00ff 192px,#8400ff 200px,#8d00ff 208px,#9600ff 216px,#9f00ff 224px,#a800ff 232px,#b100ff 240px,#ba00ff 248px,#c400ff 256px,#ce00ff 264px,#d700ff 272px,#e000ff 279px)"></i><i style="left:124px;top:328.0px;width:276px;background:linear-gradient(90deg,#000eff 0px,#000dff 8px,#000bff 16px,#000aff 24px,#0008ff 32px,#0007ff 40px,#0005ff 48px,#0104ff 56px,#0602ff 64px,#0c01ff 72px,#1200ff 80px,#1800ff 88px,#1f00ff 96px,#2500ff 104px,#2c00ff 112px,#3400ff 120px,#3b00ff 128px,#4200ff 136px,#4a00ff 144px,#5200ff 152px,#5a00ff 160px,#6200ff 168px,#6a00ff 176px,#7300ff 184px,#7b00ff 192px,#8400ff 200px,#8c00ff 208px,#9500ff 216px,#9e00ff 224px,#a700ff 232px,#b000ff 240px,#ba00ff 248px,#c300ff 256px,#cd00ff 264px,#d600ff 272px,#db00ff 276px)"></i><i style="left:126px;top:330.0px;width:272px;background:linear-gradient(90deg,#000eff 0px,#000cff 8px,#000aff 16px,#0009ff 24px,#0007ff 32px,#0006ff 40px,#0004ff 48px,#0203ff 56px,#0702ff 64px,#0d00ff 72px,#1300ff 80px,#1900ff 88px,#2000ff 96px,#2700ff 104px,#2e00ff 112px,#3500ff 120px,#3c00ff 128px,#4400ff 136px,#4b00ff 144px,#5300ff 152px,#5b00ff 160px,#6300ff 168px,#6b00ff 176px,#7300ff 184px,#7c00ff 192px,#8400ff 200px,#8d00ff 208px,#9600ff 216px,#9f00ff 224px,#a800ff 232px,#b100ff 240px,#ba00ff 248px,#c400ff 256px,#cd00ff 264px,#d700ff 272px)"></i><i style="left:127px;top:332.0px;width:270px;background:linear-gradient(90deg,#000dff 0px,#000bff 8px,#000aff 16px,#0008ff 24px,#0007ff 32px,#0005ff 40px,#0004ff 48px,#0302ff 56px,#0801ff 64px,#0d00ff 72px,#1300ff 80px,#1a00ff 88px,#2000ff 96px,#2700ff 104px,#2e00ff 112px,#3500ff 120px,#3c00ff 128px,#4400ff 136px,#4b00ff 144px,#5300ff 152px,#5b00ff 160px,#6300ff 168px,#6b00ff 176px,#7300ff 184px,#7c00ff 192px,#8400ff 200px,#8d00ff 208px,#9500ff 216px,#9e00ff 224px,#a700ff 232px,#b000ff 240px,#b900ff 248px,#c300ff 256px,#cc00ff 264px,#d300ff 270px)"></i><i style="left:129px;top:334.0px;width:266px;background:linear-gradient(90deg,#000cff 0px,#000aff 8px,#0009ff 16px,#0007ff 24px,#0006ff 32px,#0004ff 40px,#0003ff 48px,#0402ff 56px,#0901ff 64px,#0e00ff 72px,#1400ff 80px,#1b00ff 88px,#2100ff 96px,#2800ff 104px,#2f00ff 112px,#3600ff 120px,#3d00ff 128px,#4500ff 136px,#4c00ff 144px,#5400ff 152px,#5c00ff 160px,#6400ff 168px,#6c00ff 176px,#7400ff 184px,#7c00ff 192px,#8500ff 200px,#8d00ff 208px,#9600ff 216px,#9f00ff 224px,#a800ff 232px,#b100ff 240px,#ba00ff 248px,#c300ff 256px,#cc00ff 264px,#cf00ff 266px)"></i><i style="left:130px;top:336.0px;width:263px;background:linear-gradient(90deg,#000bff 0px,#000aff 8px,#0008ff 16px,#0007ff 24px,#0005ff 32px,#0004ff 40px,#0003ff 48px,#0401ff 56px,#0900ff 64px,#0f00ff 72px,#1500ff 80px,#1b00ff 88px,#2200ff 96px,#2800ff 104px,#2f00ff 112px,#3600ff 120px,#3d00ff 128px,#4500ff 136px,#4c00ff 144px,#5400ff 152px,#5c00ff 160px,#6400ff 168px,#6c00ff 176px,#7400ff 184px,#7c00ff 192px,#8400ff 200px,#8d00ff 208px,#9600ff 216px,#9e00ff 224px,#a700ff 232px,#b000ff 240px,#b900ff 248px,#c200ff 256px,#ca00ff 263px)"></i><i style="left:132px;top:338.0px;width:259px;background:linear-gradient(90deg,#000aff 0px,#0009ff 8px,#0007ff 16px,#0006ff 24px,#0005ff 32px,#0003ff 40px,#0002ff 48px,#0501ff 56px,#0a00ff 64px,#1000ff 72px,#1600ff 80px,#1c00ff 88px,#2300ff 96px,#2900ff 104px,#3000ff 112px,#3700ff 120px,#3e00ff 128px,#4600ff 136px,#4d00ff 144px,#5500ff 152px,#5d00ff 160px,#6500ff 168px,#6c00ff 176px,#7500ff 184px,#7d00ff 192px,#8500ff 200px,#8e00ff 208px,#9600ff 216px,#9f00ff 224px,#a800ff 232px,#b100ff 240px,#ba00ff 248px,#c300ff 256px,#c600ff 259px)"></i><i style="left:133px;top:340.0px;width:256px;background:linear-gradient(90deg,#000aff 0px,#0008ff 8px,#0007ff 16px,#0005ff 24px,#0004ff 32px,#0003ff 40px,#0101ff 48px,#0500ff 56px,#0b00ff 64px,#1000ff 72px,#1600ff 80px,#1c00ff 88px,#2300ff 96px,#2a00ff 104px,#3000ff 112px,#3700ff 120px,#3f00ff 128px,#4600ff 136px,#4d00ff 144px,#5500ff 152px,#5d00ff 160px,#6400ff 168px,#6c00ff 176px,#7400ff 184px,#7d00ff 192px,#8500ff 200px,#8d00ff 208px,#9600ff 216px,#9e00ff 224px,#a700ff 232px,#b000ff 240px,#b900ff 248px,#c200ff 256px)"></i><i style="left:134px;top:342.0px;width:253px;background:linear-gradient(90deg,#0009ff 0px,#0008ff 8px,#0006ff 16px,#0005ff 24px,#0004ff 32px,#0002ff 40px,#0101ff 48px,#0600ff 56px,#0b00ff 64px,#1100ff 72px,#1700ff 80px,#1d00ff 88px,#2300ff 96px,#2a00ff 104px,#3100ff 112px,#3800ff 120px,#3f00ff 128px,#4600ff 136px,#4d00ff 144px,#5500ff 152px,#5d00ff 160px,#6400ff 168px,#6c00ff 176px,#7400ff 184px,#7c00ff 192px,#8500ff 200px,#8d00ff 208px,#9500ff 216px,#9e00ff 224px,#a700ff 232px,#af00ff 240px,#b800ff 248px,#be00ff 253px)"></i><i style="left:136px;top:344.0px;width:249px;background:linear-gradient(90deg,#0008ff 0px,#0007ff 8px,#0006ff 16px,#0004ff 24px,#0003ff 32px,#0002ff 40px,#0200ff 48px,#0700ff 56px,#0c00ff 64px,#1200ff 72px,#1800ff 80px,#1e00ff 88px,#2400ff 96px,#2b00ff 104px,#3200ff 112px,#3900ff 120px,#4000ff 128px,#4700ff 136px,#4e00ff 144px,#5600ff 152px,#5d00ff 160px,#6500ff 168px,#6d00ff 176px,#7500ff 184px,#7d00ff 192px,#8500ff 200px,#8e00ff 208px,#9600ff 216px,#9e00ff 224px,#a700ff 232px,#b000ff 240px,#b900ff 248px,#ba00ff 249px)"></i><i style="left:137px;top:346.0px;width:246px;background:linear-gradient(90deg,#0008ff 0px,#0006ff 8px,#0005ff 16px,#0004ff 24px,#0002ff 32px,#0001ff 40px,#0200ff 48px,#0700ff 56px,#0c00ff 64px,#1200ff 72px,#1800ff 80px,#1e00ff 88px,#2500ff 96px,#2b00ff 104px,#3200ff 112px,#3900ff 120px,#4000ff 128px,#4700ff 136px,#4e00ff 144px,#5600ff 152px,#5d00ff 160px,#6500ff 168px,#6d00ff 176px,#7500ff 184px,#7d00ff 192px,#8500ff 200px,#8d00ff 208px,#9500ff 216px,#9e00ff 224px,#a600ff 232px,#af00ff 240px,#b600ff 246px)"></i><i style="left:139px;top:348.0px;width:242px;background:linear-gradient(90deg,#0007ff 0px,#0006ff 8px,#0004ff 16px,#0003ff 24px,#0002ff 32px,#0001ff 40px,#0300ff 48px,#0800ff 56px,#0d00ff 64px,#1300ff 72px,#1900ff 80px,#1f00ff 88px,#2600ff 96px,#2c00ff 104px,#3300ff 112px,#3a00ff 120px,#4100ff 128px,#4800ff 136px,#4f00ff 144px,#5700ff 152px,#5e00ff 160px,#6600ff 168px,#6e00ff 176px,#7600ff 184px,#7e00ff 192px,#8600ff 200px,#8e00ff 208px,#9600ff 216px,#9f00ff 224px,#a700ff 232px,#b000ff 240px,#b200ff 242px)"></i><i style="left:140px;top:350.0px;width:239px;background:linear-gradient(90deg,#0006ff 0px,#0005ff 8px,#0004ff 16px,#0002ff 24px,#0001ff 32px,#0000ff 40px,#0400ff 48px,#0800ff 56px,#0e00ff 64px,#1400ff 72px,#1900ff 80px,#2000ff 88px,#2600ff 96px,#2c00ff 104px,#3300ff 112px,#3a00ff 120px,#4100ff 128px,#4800ff 136px,#4f00ff 144px,#5700ff 152px,#5e00ff 160px,#6600ff 168px,#6d00ff 176px,#7500ff 184px,#7d00ff 192px,#8500ff 200px,#8d00ff 208px,#9600ff 216px,#9e00ff 224px,#a600ff 232px,#ae00ff 239px)"></i><i style="left:142px;top:352.0px;width:235px;background:linear-gradient(90deg,#0006ff 0px,#0004ff 8px,#0003ff 16px,#0002ff 24px,#0001ff 32px,#0000ff 40px,#0400ff 48px,#0900ff 56px,#0f00ff 64px,#1500ff 72px,#1b00ff 80px,#2100ff 88px,#2700ff 96px,#2e00ff 104px,#3400ff 112px,#3b00ff 120px,#4200ff 128px,#4900ff 136px,#5000ff 144px,#5800ff 152px,#5f00ff 160px,#6700ff 168px,#6e00ff 176px,#7600ff 184px,#7e00ff 192px,#8600ff 200px,#8e00ff 208px,#9600ff 216px,#9f00ff 224px,#a700ff 232px,#aa00ff 235px)"></i><i style="left:143px;top:354.0px;width:232px;background:linear-gradient(90deg,#0005ff 0px,#0004ff 8px,#0003ff 16px,#0001ff 24px,#0000ff 32px,#0100ff 40px,#0500ff 48px,#0a00ff 56px,#0f00ff 64px,#1500ff 72px,#1b00ff 80px,#2100ff 88px,#2700ff 96px,#2e00ff 104px,#3400ff 112px,#3b00ff 120px,#4200ff 128px,#4900ff 136px,#5000ff 144px,#5800ff 152px,#5f00ff 160px,#6700ff 168px,#6e00ff 176px,#7600ff 184px,#7e00ff 192px,#8600ff 200px,#8e00ff 208px,#9600ff 216px,#9e00ff 224px,#a600ff 232px)"></i><i style="left:145px;top:356.0px;width:228px;background:linear-gradient(90deg,#0004ff 0px,#0003ff 8px,#0002ff 16px,#0001ff 24px,#0000ff 32px,#0100ff 40px,#0600ff 48px,#0b00ff 56px,#1000ff 64px,#1600ff 72px,#1c00ff 80px,#2200ff 88px,#2800ff 96px,#2f00ff 104px,#3500ff 112px,#3c00ff 120px,#4300ff 128px,#4a00ff 136px,#5100ff 144px,#5800ff 152px,#6000ff 160px,#6700ff 168px,#6f00ff 176px,#7700ff 184px,#7e00ff 192px,#8600ff 200px,#8e00ff 208px,#9600ff 216px,#9f00ff 224px,#a300ff 228px)"></i><i style="left:146px;top:358.0px;width:225px;background:linear-gradient(90deg,#0004ff 0px,#0003ff 8px,#0002ff 16px,#0000ff 24px,#0000ff 32px,#0200ff 40px,#0600ff 48px,#0b00ff 56px,#1100ff 64px,#1600ff 72px,#1c00ff 80px,#2200ff 88px,#2900ff 96px,#2f00ff 104px,#3600ff 112px,#3c00ff 120px,#4300ff 128px,#4a00ff 136px,#5100ff 144px,#5800ff 152px,#6000ff 160px,#6700ff 168px,#6f00ff 176px,#7600ff 184px,#7e00ff 192px,#8600ff 200px,#8e00ff 208px,#9600ff 216px,#9e00ff 224px,#9f00ff 225px)"></i><i style="left:148px;top:360.0px;width:221px;background:linear-gradient(90deg,#0003ff 0px,#0002ff 8px,#0001ff 16px,#0000ff 24px,#0000ff 32px,#0300ff 40px,#0700ff 48px,#0c00ff 56px,#1200ff 64px,#1700ff 72px,#1d00ff 80px,#2300ff 88px,#2a00ff 96px,#3000ff 104px,#3700ff 112px,#3d00ff 120px,#4400ff 128px,#4b00ff 136px,#5200ff 144px,#5900ff 152px,#6100ff 160px,#6800ff 168px,#7000ff 176px,#7700ff 184px,#7f00ff 192px,#8700ff 200px,#8f00ff 208px,#9700ff 216px,#9c00ff 221px)"></i><i style="left:149px;top:362.0px;width:218px;background:linear-gradient(90deg,#0003ff 0px,#0002ff 8px,#0001ff 16px,#0000ff 24px,#0000ff 32px,#0300ff 40px,#0800ff 48px,#0d00ff 56px,#1200ff 64px,#1800ff 72px,#1e00ff 80px,#2400ff 88px,#2a00ff 96px,#3000ff 104px,#3700ff 112px,#3d00ff 120px,#4400ff 128px,#4b00ff 136px,#5200ff 144px,#5900ff 152px,#6100ff 160px,#6800ff 168px,#6f00ff 176px,#7700ff 184px,#7f00ff 192px,#8600ff 200px,#8e00ff 208px,#9600ff 216px,#9800ff 218px)"></i><i style="left:151px;top:364.0px;width:214px;background:linear-gradient(90deg,#0002ff 0px,#0001ff 8px,#0000ff 16px,#0000ff 24px,#0000ff 32px,#0400ff 40px,#0900ff 48px,#0e00ff 56px,#1300ff 64px,#1900ff 72px,#1f00ff 80px,#2500ff 88px,#2b00ff 96px,#3100ff 104px,#3800ff 112px,#3e00ff 120px,#4500ff 128px,#4c00ff 136px,#5300ff 144px,#5a00ff 152px,#6100ff 160px,#6900ff 168px,#7000ff 176px,#7800ff 184px,#7f00ff 192px,#8700ff 200px,#8f00ff 208px,#9500ff 214px)"></i><i style="left:153px;top:366.0px;width:210px;background:linear-gradient(90deg,#0002ff 0px,#0001ff 8px,#0000ff 16px,#0000ff 24px,#0100ff 32px,#0500ff 40px,#0900ff 48px,#0f00ff 56px,#1400ff 64px,#1a00ff 72px,#2000ff 80px,#2600ff 88px,#2c00ff 96px,#3200ff 104px,#3900ff 112px,#3f00ff 120px,#4600ff 128px,#4d00ff 136px,#5400ff 144px,#5b00ff 152px,#6200ff 160px,#6a00ff 168px,#7100ff 176px,#7800ff 184px,#8000ff 192px,#8800ff 200px,#8f00ff 208px,#9100ff 210px)"></i><i style="left:154px;top:368.0px;width:208px;background:linear-gradient(90deg,#0001ff 0px,#0000ff 8px,#0000ff 16px,#0000ff 24px,#0100ff 32px,#0500ff 40px,#0a00ff 48px,#0f00ff 56px,#1400ff 64px,#1a00ff 72px,#2000ff 80px,#2600ff 88px,#2c00ff 96px,#3200ff 104px,#3900ff 112px,#3f00ff 120px,#4600ff 128px,#4d00ff 136px,#5400ff 144px,#5b00ff 152px,#6200ff 160px,#6900ff 168px,#7100ff 176px,#7800ff 184px,#8000ff 192px,#8700ff 200px,#8f00ff 208px)"></i><i style="left:156px;top:370.0px;width:204px;background:linear-gradient(90deg,#0001ff 0px,#0000ff 8px,#0000ff 16px,#0000ff 24px,#0200ff 32px,#0600ff 40px,#0b00ff 48px,#1000ff 56px,#1500ff 64px,#1b00ff 72px,#2100ff 80px,#2700ff 88px,#2d00ff 96px,#3300ff 104px,#3a00ff 112px,#4000ff 120px,#4700ff 128px,#4e00ff 136px,#5500ff 144px,#5c00ff 152px,#6300ff 160px,#6a00ff 168px,#7100ff 176px,#7900ff 184px,#8000ff 192px,#8800ff 200px,#8c00ff 204px)"></i><i style="left:157px;top:372.0px;width:201px;background:linear-gradient(90deg,#0000ff 0px,#0000ff 8px,#0000ff 16px,#0000ff 24px,#0200ff 32px,#0600ff 40px,#0b00ff 48px,#1000ff 56px,#1600ff 64px,#1b00ff 72px,#2100ff 80px,#2700ff 88px,#2d00ff 96px,#3400ff 104px,#3a00ff 112px,#4100ff 120px,#4700ff 128px,#4e00ff 136px,#5500ff 144px,#5c00ff 152px,#6300ff 160px,#6a00ff 168px,#7100ff 176px,#7900ff 184px,#8000ff 192px,#8800ff 200px,#8900ff 201px)"></i><i style="left:159px;top:374.0px;width:197px;background:linear-gradient(90deg,#0000ff 0px,#0000ff 8px,#0000ff 16px,#0000ff 24px,#0300ff 32px,#0700ff 40px,#0c00ff 48px,#1100ff 56px,#1700ff 64px,#1c00ff 72px,#2200ff 80px,#2800ff 88px,#2e00ff 96px,#3500ff 104px,#3b00ff 112px,#4100ff 120px,#4800ff 128px,#4f00ff 136px,#5600ff 144px,#5d00ff 152px,#6400ff 160px,#6b00ff 168px,#7200ff 176px,#7900ff 184px,#8100ff 192px,#8500ff 197px)"></i><i style="left:161px;top:376.0px;width:193px;background:linear-gradient(90deg,#0000ff 0px,#0000ff 8px,#0000ff 16px,#0000ff 24px,#0400ff 32px,#0800ff 40px,#0d00ff 48px,#1200ff 56px,#1800ff 64px,#1d00ff 72px,#2300ff 80px,#2900ff 88px,#2f00ff 96px,#3600ff 104px,#3c00ff 112px,#4200ff 120px,#4900ff 128px,#5000ff 136px,#5700ff 144px,#5d00ff 152px,#6400ff 160px,#6c00ff 168px,#7300ff 176px,#7a00ff 184px,#8100ff 192px,#8200ff 193px)"></i><i style="left:162px;top:378.0px;width:190px;background:linear-gradient(90deg,#0000ff 0px,#0000ff 8px,#0000ff 16px,#0000ff 24px,#0400ff 32px,#0900ff 40px,#0d00ff 48px,#1300ff 56px,#1800ff 64px,#1e00ff 72px,#2300ff 80px,#2900ff 88px,#3000ff 96px,#3600ff 104px,#3c00ff 112px,#4200ff 120px,#4900ff 128px,#5000ff 136px,#5600ff 144px,#5d00ff 152px,#6400ff 160px,#6b00ff 168px,#7300ff 176px,#7a00ff 184px,#7f00ff 190px)"></i><i style="left:164px;top:380.0px;width:186px;background:linear-gradient(90deg,#0000ff 0px,#0000ff 8px,#0000ff 16px,#0100ff 24px,#0500ff 32px,#0900ff 40px,#0e00ff 48px,#1400ff 56px,#1900ff 64px,#1f00ff 72px,#2400ff 80px,#2a00ff 88px,#3000ff 96px,#3700ff 104px,#3d00ff 112px,#4300ff 120px,#4a00ff 128px,#5100ff 136px,#5700ff 144px,#5e00ff 152px,#6500ff 160px,#6c00ff 168px,#7300ff 176px,#7b00ff 184px,#7c00ff 186px)"></i><i style="left:166px;top:382.0px;width:182px;background:linear-gradient(90deg,#0000ff 0px,#0000ff 8px,#0000ff 16px,#0200ff 24px,#0600ff 32px,#0a00ff 40px,#0f00ff 48px,#1500ff 56px,#1a00ff 64px,#2000ff 72px,#2500ff 80px,#2b00ff 88px,#3100ff 96px,#3800ff 104px,#3e00ff 112px,#4400ff 120px,#4b00ff 128px,#5100ff 136px,#5800ff 144px,#5f00ff 152px,#6600ff 160px,#6d00ff 168px,#7400ff 176px,#7900ff 182px)"></i><i style="left:168px;top:384.0px;width:178px;background:linear-gradient(90deg,#0000ff 0px,#0000ff 8px,#0000ff 16px,#0200ff 24px,#0700ff 32px,#0b00ff 40px,#1000ff 48px,#1600ff 56px,#1b00ff 64px,#2100ff 72px,#2600ff 80px,#2c00ff 88px,#3200ff 96px,#3900ff 104px,#3f00ff 112px,#4500ff 120px,#4c00ff 128px,#5200ff 136px,#5900ff 144px,#6000ff 152px,#6700ff 160px,#6e00ff 168px,#7500ff 176px,#7600ff 178px)"></i><i style="left:169px;top:386.0px;width:175px;background:linear-gradient(90deg,#0000ff 0px,#0000ff 8px,#0000ff 16px,#0300ff 24px,#0700ff 32px,#0c00ff 40px,#1100ff 48px,#1600ff 56px,#1b00ff 64px,#2100ff 72px,#2700ff 80px,#2d00ff 88px,#3300ff 96px,#3900ff 104px,#3f00ff 112px,#4500ff 120px,#4c00ff 128px,#5200ff 136px,#5900ff 144px,#6000ff 152px,#6700ff 160px,#6d00ff 168px,#7400ff 175px)"></i><i style="left:171px;top:388.0px;width:171px;background:linear-gradient(90deg,#0000ff 0px,#0000ff 8px,#0000ff 16px,#0400ff 24px,#0800ff 32px,#0d00ff 40px,#1200ff 48px,#1700ff 56px,#1c00ff 64px,#2200ff 72px,#2800ff 80px,#2d00ff 88px,#3300ff 96px,#3a00ff 104px,#4000ff 112px,#4600ff 120px,#4d00ff 128px,#5300ff 136px,#5a00ff 144px,#6000ff 152px,#6700ff 160px,#6e00ff 168px,#7100ff 171px)"></i><i style="left:173px;top:390.0px;width:167px;background:linear-gradient(90deg,#0000ff 0px,#0000ff 8px,#0100ff 16px,#0400ff 24px,#0900ff 32px,#0e00ff 40px,#1300ff 48px,#1800ff 56px,#1d00ff 64px,#2300ff 72px,#2900ff 80px,#2e00ff 88px,#3400ff 96px,#3b00ff 104px,#4100ff 112px,#4700ff 120px,#4d00ff 128px,#5400ff 136px,#5b00ff 144px,#6100ff 152px,#6800ff 160px,#6e00ff 167px)"></i><i style="left:175px;top:392.0px;width:163px;background:linear-gradient(90deg,#0000ff 0px,#0000ff 8px,#0100ff 16px,#0500ff 24px,#0a00ff 32px,#0f00ff 40px,#1400ff 48px,#1900ff 56px,#1e00ff 64px,#2400ff 72px,#2a00ff 80px,#2f00ff 88px,#3500ff 96px,#3b00ff 104px,#4200ff 112px,#4800ff 120px,#4e00ff 128px,#5500ff 136px,#5b00ff 144px,#6200ff 152px,#6900ff 160px,#6b00ff 163px)"></i><i style="left:177px;top:394.0px;width:159px;background:linear-gradient(90deg,#0000ff 0px,#0000ff 8px,#0200ff 16px,#0600ff 24px,#0b00ff 32px,#0f00ff 40px,#1500ff 48px,#1a00ff 56px,#1f00ff 64px,#2500ff 72px,#2a00ff 80px,#3000ff 88px,#3600ff 96px,#3c00ff 104px,#4200ff 112px,#4900ff 120px,#4f00ff 128px,#5600ff 136px,#5c00ff 144px,#6300ff 152px,#6900ff 159px)"></i><i style="left:178px;top:396.0px;width:156px;background:linear-gradient(90deg,#0000ff 0px,#0000ff 8px,#0200ff 16px,#0600ff 24px,#0b00ff 32px,#1000ff 40px,#1500ff 48px,#1a00ff 56px,#1f00ff 64px,#2500ff 72px,#2b00ff 80px,#3000ff 88px,#3600ff 96px,#3c00ff 104px,#4300ff 112px,#4900ff 120px,#4f00ff 128px,#5600ff 136px,#5c00ff 144px,#6300ff 152px,#6600ff 156px)"></i><i style="left:180px;top:398.0px;width:152px;background:linear-gradient(90deg,#0000ff 0px,#0000ff 8px,#0300ff 16px,#0700ff 24px,#0c00ff 32px,#1100ff 40px,#1600ff 48px,#1b00ff 56px,#2000ff 64px,#2600ff 72px,#2c00ff 80px,#3100ff 88px,#3700ff 96px,#3d00ff 104px,#4300ff 112px,#4a00ff 120px,#5000ff 128px,#5600ff 136px,#5d00ff 144px,#6300ff 152px)"></i><i style="left:182px;top:400.0px;width:148px;background:linear-gradient(90deg,#0000ff 0px,#0000ff 8px,#0400ff 16px,#0800ff 24px,#0d00ff 32px,#1200ff 40px,#1700ff 48px,#1c00ff 56px,#2100ff 64px,#2700ff 72px,#2d00ff 80px,#3200ff 88px,#3800ff 96px,#3e00ff 104px,#4400ff 112px,#4a00ff 120px,#5100ff 128px,#5700ff 136px,#5e00ff 144px,#6100ff 148px)"></i><i style="left:184px;top:402.0px;width:145px;background:linear-gradient(90deg,#0000ff 0px,#0100ff 8px,#0500ff 16px,#0900ff 24px,#0e00ff 32px,#1300ff 40px,#1800ff 48px,#1d00ff 56px,#2200ff 64px,#2800ff 72px,#2d00ff 80px,#3300ff 88px,#3900ff 96px,#3f00ff 104px,#4500ff 112px,#4b00ff 120px,#5200ff 128px,#5800ff 136px,#5e00ff 144px,#5f00ff 145px)"></i><i style="left:186px;top:404.0px;width:141px;background:linear-gradient(90deg,#0000ff 0px,#0200ff 8px,#0600ff 16px,#0a00ff 24px,#0f00ff 32px,#1400ff 40px,#1900ff 48px,#1e00ff 56px,#2300ff 64px,#2900ff 72px,#2e00ff 80px,#3400ff 88px,#3a00ff 96px,#4000ff 104px,#4600ff 112px,#4c00ff 120px,#5200ff 128px,#5900ff 136px,#5d00ff 141px)"></i><i style="left:188px;top:406.0px;width:137px;background:linear-gradient(90deg,#0000ff 0px,#0200ff 8px,#0600ff 16px,#0b00ff 24px,#1000ff 32px,#1400ff 40px,#1a00ff 48px,#1f00ff 56px,#2400ff 64px,#2a00ff 72px,#2f00ff 80px,#3500ff 88px,#3b00ff 96px,#4100ff 104px,#4700ff 112px,#4d00ff 120px,#5300ff 128px,#5900ff 136px,#5a00ff 137px)"></i><i style="left:191px;top:408.0px;width:132px;background:linear-gradient(90deg,#0000ff 0px,#0400ff 8px,#0800ff 16px,#0c00ff 24px,#1100ff 32px,#1600ff 40px,#1b00ff 48px,#2000ff 56px,#2600ff 64px,#2b00ff 72px,#3100ff 80px,#3700ff 88px,#3c00ff 96px,#4200ff 104px,#4800ff 112px,#4f00ff 120px,#5500ff 128px,#5800ff 132px)"></i><i style="left:193px;top:410.0px;width:128px;background:linear-gradient(90deg,#0100ff 0px,#0500ff 8px,#0900ff 16px,#0d00ff 24px,#1200ff 32px,#1700ff 40px,#1c00ff 48px,#2100ff 56px,#2700ff 64px,#2c00ff 72px,#3200ff 80px,#3700ff 88px,#3d00ff 96px,#4300ff 104px,#4900ff 112px,#4f00ff 120px,#5600ff 128px)"></i><i style="left:195px;top:412.0px;width:124px;background:linear-gradient(90deg,#0200ff 0px,#0500ff 8px,#0a00ff 16px,#0e00ff 24px,#1300ff 32px,#1800ff 40px,#1d00ff 48px,#2200ff 56px,#2800ff 64px,#2d00ff 72px,#3300ff 80px,#3800ff 88px,#3e00ff 96px,#4400ff 104px,#4a00ff 112px,#5000ff 120px,#5300ff 124px)"></i><i style="left:197px;top:414.0px;width:120px;background:linear-gradient(90deg,#0200ff 0px,#0600ff 8px,#0a00ff 16px,#0f00ff 24px,#1400ff 32px,#1900ff 40px,#1e00ff 48px,#2300ff 56px,#2800ff 64px,#2e00ff 72px,#3300ff 80px,#3900ff 88px,#3f00ff 96px,#4500ff 104px,#4b00ff 112px,#5100ff 120px)"></i><i style="left:199px;top:416.0px;width:116px;background:linear-gradient(90deg,#0300ff 0px,#0700ff 8px,#0b00ff 16px,#1000ff 24px,#1500ff 32px,#1a00ff 40px,#1f00ff 48px,#2400ff 56px,#2900ff 64px,#2f00ff 72px,#3400ff 80px,#3a00ff 88px,#4000ff 96px,#4600ff 104px,#4c00ff 112px,#4f00ff 116px)"></i><i style="left:201px;top:418.0px;width:112px;background:linear-gradient(90deg,#0400ff 0px,#0800ff 8px,#0c00ff 16px,#1100ff 24px,#1600ff 32px,#1b00ff 40px,#2000ff 48px,#2500ff 56px,#2a00ff 64px,#3000ff 72px,#3500ff 80px,#3b00ff 88px,#4100ff 96px,#4600ff 104px,#4c00ff 112px)"></i><i style="left:204px;top:420.0px;width:107px;background:linear-gradient(90deg,#0500ff 0px,#0900ff 8px,#0e00ff 16px,#1200ff 24px,#1700ff 32px,#1c00ff 40px,#2100ff 48px,#2600ff 56px,#2c00ff 64px,#3100ff 72px,#3700ff 80px,#3c00ff 88px,#4200ff 96px,#4800ff 104px,#4a00ff 107px)"></i><i style="left:206px;top:422.0px;width:103px;background:linear-gradient(90deg,#0600ff 0px,#0a00ff 8px,#0e00ff 16px,#1300ff 24px,#1800ff 32px,#1d00ff 40px,#2200ff 48px,#2700ff 56px,#2d00ff 64px,#3200ff 72px,#3800ff 80px,#3d00ff 88px,#4300ff 96px,#4800ff 103px)"></i><i style="left:208px;top:424.0px;width:99px;background:linear-gradient(90deg,#0700ff 0px,#0b00ff 8px,#0f00ff 16px,#1400ff 24px,#1900ff 32px,#1e00ff 40px,#2300ff 48px,#2800ff 56px,#2d00ff 64px,#3300ff 72px,#3800ff 80px,#3e00ff 88px,#4400ff 96px,#4600ff 99px)"></i><i style="left:211px;top:426.0px;width:94px;background:linear-gradient(90deg,#0800ff 0px,#0c00ff 8px,#1100ff 16px,#1500ff 24px,#1a00ff 32px,#1f00ff 40px,#2400ff 48px,#2a00ff 56px,#2f00ff 64px,#3400ff 72px,#3a00ff 80px,#4000ff 88px,#4400ff 94px)"></i><i style="left:213px;top:428.0px;width:90px;background:linear-gradient(90deg,#0900ff 0px,#0d00ff 8px,#1200ff 16px,#1600ff 24px,#1b00ff 32px,#2000ff 40px,#2500ff 48px,#2b00ff 56px,#3000ff 64px,#3500ff 72px,#3b00ff 80px,#4000ff 88px,#4200ff 90px)"></i><i style="left:216px;top:430.0px;width:85px;background:linear-gradient(90deg,#0a00ff 0px,#0f00ff 8px,#1300ff 16px,#1800ff 24px,#1d00ff 32px,#2200ff 40px,#2700ff 48px,#2c00ff 56px,#3100ff 64px,#3700ff 72px,#3c00ff 80px,#4000ff 85px)"></i><i style="left:218px;top:432.0px;width:81px;background:linear-gradient(90deg,#0b00ff 0px,#0f00ff 8px,#1400ff 16px,#1900ff 24px,#1e00ff 32px,#2300ff 40px,#2800ff 48px,#2d00ff 56px,#3200ff 64px,#3800ff 72px,#3d00ff 80px,#3e00ff 81px)"></i><i style="left:220px;top:434.0px;width:77px;background:linear-gradient(90deg,#0c00ff 0px,#1000ff 8px,#1500ff 16px,#1a00ff 24px,#1e00ff 32px,#2300ff 40px,#2800ff 48px,#2e00ff 56px,#3300ff 64px,#3800ff 72px,#3c00ff 77px)"></i><i style="left:223px;top:436.0px;width:72px;background:linear-gradient(90deg,#0d00ff 0px,#1200ff 8px,#1600ff 16px,#1b00ff 24px,#2000ff 32px,#2500ff 40px,#2a00ff 48px,#2f00ff 56px,#3500ff 64px,#3a00ff 72px)"></i><i style="left:225px;top:438.0px;width:69px;background:linear-gradient(90deg,#0e00ff 0px,#1200ff 8px,#1700ff 16px,#1c00ff 24px,#2100ff 32px,#2600ff 40px,#2b00ff 48px,#3000ff 56px,#3500ff 64px,#3900ff 69px)"></i><i style="left:228px;top:440.0px;width:64px;background:linear-gradient(90deg,#0f00ff 0px,#1400ff 8px,#1900ff 16px,#1d00ff 24px,#2200ff 32px,#2700ff 40px,#2c00ff 48px,#3100ff 56px,#3700ff 64px)"></i><i style="left:230px;top:442.0px;width:60px;background:linear-gradient(90deg,#1000ff 0px,#1500ff 8px,#1900ff 16px,#1e00ff 24px,#2300ff 32px,#2800ff 40px,#2d00ff 48px,#3200ff 56px,#3500ff 60px)"></i><i style="left:232px;top:444.0px;width:56px;background:linear-gradient(90deg,#1100ff 0px,#1600ff 8px,#1a00ff 16px,#1f00ff 24px,#2400ff 32px,#2900ff 40px,#2e00ff 48px,#3300ff 56px)"></i><i style="left:235px;top:446.0px;width:51px;background:linear-gradient(90deg,#1200ff 0px,#1700ff 8px,#1c00ff 16px,#2000ff 24px,#2500ff 32px,#2a00ff 40px,#2f00ff 48px,#3100ff 51px)"></i><i style="left:237px;top:448.0px;width:47px;background:linear-gradient(90deg,#1300ff 0px,#1800ff 8px,#1c00ff 16px,#2100ff 24px,#2600ff 32px,#2b00ff 40px,#3000ff 47px)"></i><i style="left:240px;top:450.0px;width:42px;background:linear-gradient(90deg,#1500ff 0px,#1900ff 8px,#1e00ff 16px,#2300ff 24px,#2800ff 32px,#2d00ff 40px,#2e00ff 42px)"></i><i style="left:242px;top:452.0px;width:38px;background:linear-gradient(90deg,#1500ff 0px,#1a00ff 8px,#1f00ff 16px,#2300ff 24px,#2800ff 32px,#2c00ff 38px)"></i><i style="left:244px;top:454.0px;width:34px;background:linear-gradient(90deg,#1600ff 0px,#1b00ff 8px,#2000ff 16px,#2400ff 24px,#2900ff 32px,#2a00ff 34px)"></i><i style="left:247px;top:456.0px;width:29px;background:linear-gradient(90deg,#1800ff 0px,#1c00ff 8px,#2100ff 16px,#2600ff 24px,#2900ff 29px)"></i><i style="left:249px;top:458.0px;width:25px;background:linear-gradient(90deg,#1900ff 0px,#1d00ff 8px,#2200ff 16px,#2700ff 24px,#2700ff 25px)"></i><i style="left:252px;top:460.0px;width:20px;background:linear-gradient(90deg,#1a00ff 0px,#1e00ff 8px,#2300ff 16px,#2600ff 20px)"></i><i style="left:254px;top:462.0px;width:16px;background:linear-gradient(90deg,#1b00ff 0px,#1f00ff 8px,#2400ff 16px)"></i><i style="left:257px;top:464.0px;width:11px;background:linear-gradient(90deg,#1c00ff 0px,#2100ff 8px,#2200ff 11px)"></i></div>
<svg width="1703" height="791" viewBox="0 0 1703 791"><defs><linearGradient id="ins" x1="0" y1="0" x2="1" y2="1"><stop offset="0" stop-color="#ff8c38"/><stop offset=".5" stop-color="#ff6c30"/><stop offset="1" stop-color="#ff4e28"/></linearGradient></defs>
<clipPath id="cc"><rect x="988.5" y="44.5" width="620.0" height="477.5"/></clipPath><path d="M1253.6 508.9 L1253.5 508.9 L1253.3 508.9 L1253.2 509.0 L1252.9 509.0 L1252.7 509.0 L1252.6 509.2 L1252.4 509.4 L1252.1 509.4 L1251.6 509.4 L1251.1 509.3 L1250.7 509.3 L1250.1 509.2 L1249.2 508.8 L1247.8 508.0 L1246.1 506.8 L1244.1 505.3 L1241.5 503.3 L1238.5 500.8 L1234.9 497.8 L1230.8 494.3 L1226.0 490.3 L1220.4 485.7 L1213.9 480.3 L1206.5 474.2 L1198.3 467.3 L1189.0 459.1 L1178.6 449.4 L1167.1 437.7 L1153.4 422.2 L1137.2 402.0 L1119.4 377.9 L1100.4 349.7 L1080.6 317.9 L1060.9 284.2 L1042.3 249.7 L1026.5 216.1 L1013.5 184.8 L1003.4 157.0 L996.4 133.6 L992.1 114.4 L990.1 98.9 L990.2 86.7 L992.2 76.8 L996.0 69.2 L1001.2 63.6 L1007.6 59.9 L1014.9 57.7 L1022.9 56.5 L1031.4 56.0 L1040.2 55.8 L1049.0 55.9 L1057.9 56.1 L1067.1 56.5 L1076.7 57.1 L1086.8 57.9 L1097.4 58.8 L1108.6 59.9 L1120.5 61.1 L1133.1 62.4 L1146.5 63.9 L1160.8 65.5 L1175.9 67.2 L1192.0 69.0 L1209.0 71.0 L1227.1 73.0 L1246.1 75.2 L1266.0 77.5 L1286.8 79.9 L1308.4 82.4 L1330.6 84.9 L1353.3 87.5 L1375.8 90.1 L1397.7 92.7 L1419.4 95.2 L1440.5 97.6 L1460.2 99.8 L1478.6 102.0 L1495.7 103.9 L1511.3 105.7 L1525.4 107.3 L1538.0 108.8 L1549.4 110.1 L1559.6 111.3 L1569.0 112.3 L1577.6 113.3 L1585.4 114.2 L1592.4 115.0 L1598.6 115.8 L1603.8 116.4 L1608.2 116.9 L1612.0 117.3 L1615.3 117.7 L1618.1 118.0 L1620.2 118.3 L1621.9 118.4 L1623.4 118.6 L1624.8 118.8 L1626.0 118.9 L1627.1 119.0 L1628.3 119.2 L1629.4 119.3 L1630.3 119.4 L1630.8 119.5 L1631.2 119.5 L1631.5 119.6 L1631.8 119.6Z M1453.6 106.6 L1117.5 75.1 L1169.5 396.5Z" fill="#000" fill-opacity="0.37" fill-rule="evenodd" clip-path="url(#cc)"/>
<line x1="988.5" y1="522.0" x2="988.5" y2="527.5" stroke="#d0d0d0" stroke-width="1.4"/>
<text x="984.6" y="543.0" font-size="12.6" textLength="7.8" lengthAdjust="spacingAndGlyphs" fill="#d2d2d2">0</text>
<line x1="983.0" y1="522.0" x2="988.5" y2="522.0" stroke="#d0d0d0" stroke-width="1.4"/>
<text x="974.2" y="527.3" font-size="12.6" textLength="7.8" lengthAdjust="spacingAndGlyphs" fill="#d2d2d2">0</text>
<line x1="1040.1" y1="522.0" x2="1040.1" y2="527.5" stroke="#d0d0d0" stroke-width="1.4"/>
<text x="1026.4" y="543.0" font-size="12.6" textLength="27.5" lengthAdjust="spacingAndGlyphs" fill="#d2d2d2">0.05</text>
<line x1="983.0" y1="482.3" x2="988.5" y2="482.3" stroke="#d0d0d0" stroke-width="1.4"/>
<text x="954.5" y="487.6" font-size="12.6" textLength="27.5" lengthAdjust="spacingAndGlyphs" fill="#d2d2d2">0.05</text>
<line x1="1091.7" y1="522.0" x2="1091.7" y2="527.5" stroke="#d0d0d0" stroke-width="1.4"/>
<text x="1081.9" y="543.0" font-size="12.6" textLength="19.6" lengthAdjust="spacingAndGlyphs" fill="#d2d2d2">0.1</text>
<line x1="983.0" y1="442.6" x2="988.5" y2="442.6" stroke="#d0d0d0" stroke-width="1.4"/>
<text x="962.4" y="447.9" font-size="12.6" textLength="19.6" lengthAdjust="spacingAndGlyphs" fill="#d2d2d2">0.1</text>
<line x1="1143.3" y1="522.0" x2="1143.3" y2="527.5" stroke="#d0d0d0" stroke-width="1.4"/>
<text x="1129.6" y="543.0" font-size="12.6" textLength="27.5" lengthAdjust="spacingAndGlyphs" fill="#d2d2d2">0.15</text>
<line x1="983.0" y1="402.8" x2="988.5" y2="402.8" stroke="#d0d0d0" stroke-width="1.4"/>
<text x="954.5" y="408.1" font-size="12.6" textLength="27.5" lengthAdjust="spacingAndGlyphs" fill="#d2d2d2">0.15</text>
<line x1="1194.9" y1="522.0" x2="1194.9" y2="527.5" stroke="#d0d0d0" stroke-width="1.4"/>
<text x="1185.1" y="543.0" font-size="12.6" textLength="19.6" lengthAdjust="spacingAndGlyphs" fill="#d2d2d2">0.2</text>
<line x1="983.0" y1="363.1" x2="988.5" y2="363.1" stroke="#d0d0d0" stroke-width="1.4"/>
<text x="962.4" y="368.4" font-size="12.6" textLength="19.6" lengthAdjust="spacingAndGlyphs" fill="#d2d2d2">0.2</text>
<line x1="1246.5" y1="522.0" x2="1246.5" y2="527.5" stroke="#d0d0d0" stroke-width="1.4"/>
<text x="1232.8" y="543.0" font-size="12.6" textLength="27.5" lengthAdjust="spacingAndGlyphs" fill="#d2d2d2">0.25</text>
<line x1="983.0" y1="323.4" x2="988.5" y2="323.4" stroke="#d0d0d0" stroke-width="1.4"/>
<text x="954.5" y="328.7" font-size="12.6" textLength="27.5" lengthAdjust="spacingAndGlyphs" fill="#d2d2d2">0.25</text>
<line x1="1298.1" y1="522.0" x2="1298.1" y2="527.5" stroke="#d0d0d0" stroke-width="1.4"/>
<text x="1288.3" y="543.0" font-size="12.6" textLength="19.6" lengthAdjust="spacingAndGlyphs" fill="#d2d2d2">0.3</text>
<line x1="983.0" y1="283.6" x2="988.5" y2="283.6" stroke="#d0d0d0" stroke-width="1.4"/>
<text x="962.4" y="288.9" font-size="12.6" textLength="19.6" lengthAdjust="spacingAndGlyphs" fill="#d2d2d2">0.3</text>
<line x1="1349.7" y1="522.0" x2="1349.7" y2="527.5" stroke="#d0d0d0" stroke-width="1.4"/>
<text x="1336.0" y="543.0" font-size="12.6" textLength="27.5" lengthAdjust="spacingAndGlyphs" fill="#d2d2d2">0.35</text>
<line x1="983.0" y1="243.9" x2="988.5" y2="243.9" stroke="#d0d0d0" stroke-width="1.4"/>
<text x="954.5" y="249.2" font-size="12.6" textLength="27.5" lengthAdjust="spacingAndGlyphs" fill="#d2d2d2">0.35</text>
<line x1="1401.3" y1="522.0" x2="1401.3" y2="527.5" stroke="#d0d0d0" stroke-width="1.4"/>
<text x="1391.5" y="543.0" font-size="12.6" textLength="19.6" lengthAdjust="spacingAndGlyphs" fill="#d2d2d2">0.4</text>
<line x1="983.0" y1="204.2" x2="988.5" y2="204.2" stroke="#d0d0d0" stroke-width="1.4"/>
<text x="962.4" y="209.5" font-size="12.6" textLength="19.6" lengthAdjust="spacingAndGlyphs" fill="#d2d2d2">0.4</text>
<line x1="1452.9" y1="522.0" x2="1452.9" y2="527.5" stroke="#d0d0d0" stroke-width="1.4"/>
<text x="1439.2" y="543.0" font-size="12.6" textLength="27.5" lengthAdjust="spacingAndGlyphs" fill="#d2d2d2">0.45</text>
<line x1="983.0" y1="164.5" x2="988.5" y2="164.5" stroke="#d0d0d0" stroke-width="1.4"/>
<text x="954.5" y="169.8" font-size="12.6" textLength="27.5" lengthAdjust="spacingAndGlyphs" fill="#d2d2d2">0.45</text>
<line x1="1504.5" y1="522.0" x2="1504.5" y2="527.5" stroke="#d0d0d0" stroke-width="1.4"/>
<text x="1494.7" y="543.0" font-size="12.6" textLength="19.6" lengthAdjust="spacingAndGlyphs" fill="#d2d2d2">0.5</text>
<line x1="983.0" y1="124.8" x2="988.5" y2="124.8" stroke="#d0d0d0" stroke-width="1.4"/>
<text x="962.4" y="130.1" font-size="12.6" textLength="19.6" lengthAdjust="spacingAndGlyphs" fill="#d2d2d2">0.5</text>
<line x1="1556.1" y1="522.0" x2="1556.1" y2="527.5" stroke="#d0d0d0" stroke-width="1.4"/>
<text x="1542.4" y="543.0" font-size="12.6" textLength="27.5" lengthAdjust="spacingAndGlyphs" fill="#d2d2d2">0.55</text>
<line x1="983.0" y1="85.0" x2="988.5" y2="85.0" stroke="#d0d0d0" stroke-width="1.4"/>
<text x="954.5" y="90.3" font-size="12.6" textLength="27.5" lengthAdjust="spacingAndGlyphs" fill="#d2d2d2">0.55</text>
<rect x="988.5" y="44.5" width="620.0" height="477.5" fill="none" stroke="#b4b4b4" stroke-width="1.4"/>
<rect x="1110.3" y="67.2" width="12.4" height="12.4" fill="none" stroke="#fff" stroke-width="1.5" stroke-opacity="0.85"/>
<rect x="1134.4" y="90.8" width="12.4" height="12.4" fill="none" stroke="#fff" stroke-width="1.5" stroke-opacity="0.85"/>
<rect x="1171.9" y="83.0" width="12.4" height="12.4" fill="none" stroke="#fff" stroke-width="1.5" stroke-opacity="0.85"/>
<rect x="1192.3" y="75.2" width="12.4" height="12.4" fill="none" stroke="#fff" stroke-width="1.5" stroke-opacity="0.85"/>
<rect x="1170.0" y="104.0" width="12.4" height="12.4" fill="none" stroke="#fff" stroke-width="1.5" stroke-opacity="0.85"/>
<rect x="1218.8" y="79.2" width="12.4" height="12.4" fill="none" stroke="#fff" stroke-width="1.5" stroke-opacity="0.85"/>
<rect x="1248.8" y="85.5" width="12.4" height="12.4" fill="none" stroke="#fff" stroke-width="1.5" stroke-opacity="0.85"/>
<rect x="1140.7" y="134.8" width="12.4" height="12.4" fill="none" stroke="#fff" stroke-width="1.5" stroke-opacity="0.85"/>
<rect x="1291.4" y="90.1" width="12.4" height="12.4" fill="none" stroke="#fff" stroke-width="1.5" stroke-opacity="0.85"/>
<rect x="1290.8" y="92.6" width="12.4" height="12.4" fill="none" stroke="#fff" stroke-width="1.5" stroke-opacity="0.85"/>
<rect x="1309.8" y="130.8" width="12.4" height="12.4" fill="none" stroke="#fff" stroke-width="1.5" stroke-opacity="0.85"/>
<rect x="1266.6" y="97.3" width="12.4" height="12.4" fill="none" stroke="#fff" stroke-width="1.5" stroke-opacity="0.85"/>
<rect x="1272.8" y="102.6" width="12.4" height="12.4" fill="none" stroke="#fff" stroke-width="1.5" stroke-opacity="0.85"/>
<rect x="1255.8" y="97.8" width="12.4" height="12.4" fill="none" stroke="#fff" stroke-width="1.5" stroke-opacity="0.85"/>
<rect x="1241.4" y="103.9" width="12.4" height="12.4" fill="none" stroke="#fff" stroke-width="1.5" stroke-opacity="0.85"/>
<rect x="1222.8" y="111.8" width="12.4" height="12.4" fill="none" stroke="#fff" stroke-width="1.5" stroke-opacity="0.85"/>
<rect x="1268.4" y="111.8" width="12.4" height="12.4" fill="none" stroke="#fff" stroke-width="1.5" stroke-opacity="0.85"/>
<rect x="1253.4" y="113.6" width="12.4" height="12.4" fill="none" stroke="#fff" stroke-width="1.5" stroke-opacity="0.85"/>
<rect x="1236.5" y="119.8" width="12.4" height="12.4" fill="none" stroke="#fff" stroke-width="1.5" stroke-opacity="0.85"/>
<rect x="1225.8" y="126.0" width="12.4" height="12.4" fill="none" stroke="#fff" stroke-width="1.5" stroke-opacity="0.85"/>
<rect x="1246.3" y="109.2" width="12.4" height="12.4" fill="none" stroke="#fff" stroke-width="1.5" stroke-opacity="0.85"/>
<rect x="1233.8" y="107.8" width="12.4" height="12.4" fill="none" stroke="#fff" stroke-width="1.5" stroke-opacity="0.85"/>
<rect x="1259.8" y="105.8" width="12.4" height="12.4" fill="none" stroke="#fff" stroke-width="1.5" stroke-opacity="0.85"/>
<rect x="1248.8" y="116.8" width="12.4" height="12.4" fill="none" stroke="#fff" stroke-width="1.5" stroke-opacity="0.85"/>
<rect x="1229.8" y="114.8" width="12.4" height="12.4" fill="none" stroke="#fff" stroke-width="1.5" stroke-opacity="0.85"/>
<rect x="1241.8" y="113.8" width="12.4" height="12.4" fill="none" stroke="#fff" stroke-width="1.5" stroke-opacity="0.85"/>
<rect x="1263.8" y="107.8" width="12.4" height="12.4" fill="none" stroke="#fff" stroke-width="1.5" stroke-opacity="0.85"/>
<rect x="1124.7" y="152.9" width="12.4" height="12.4" fill="none" stroke="#fff" stroke-width="1.5" stroke-opacity="0.85"/>
<rect x="1130.4" y="183.0" width="12.4" height="12.4" fill="none" stroke="#fff" stroke-width="1.5" stroke-opacity="0.85"/>
<rect x="1163.2" y="180.7" width="12.4" height="12.4" fill="none" stroke="#fff" stroke-width="1.5" stroke-opacity="0.85"/>
<rect x="1182.8" y="185.9" width="12.4" height="12.4" fill="none" stroke="#fff" stroke-width="1.5" stroke-opacity="0.85"/>
<rect x="1217.1" y="203.0" width="12.4" height="12.4" fill="none" stroke="#fff" stroke-width="1.5" stroke-opacity="0.85"/>
<rect x="1278.1" y="175.0" width="12.4" height="12.4" fill="none" stroke="#fff" stroke-width="1.5" stroke-opacity="0.85"/>
<rect x="1165.7" y="231.9" width="12.4" height="12.4" fill="none" stroke="#fff" stroke-width="1.5" stroke-opacity="0.85"/>
<rect x="1165.7" y="281.3" width="12.4" height="12.4" fill="none" stroke="#fff" stroke-width="1.5" stroke-opacity="0.85"/>
<rect x="1296.3" y="252.4" width="12.4" height="12.4" fill="none" stroke="#fff" stroke-width="1.5" stroke-opacity="0.85"/>
<rect x="1163.3" y="389.2" width="12.4" height="12.4" fill="none" stroke="#fff" stroke-width="1.5" stroke-opacity="0.85"/>
<rect x="1446.8" y="98.8" width="12.4" height="12.4" fill="none" stroke="#fff" stroke-width="1.5" stroke-opacity="0.85"/>
<rect x="1369.3" y="118.8" width="12.4" height="12.4" fill="none" stroke="#fff" stroke-width="1.5" stroke-opacity="0.85"/>
<rect x="1185.5" y="141.7" width="13" height="13" fill="none" stroke="#000" stroke-width="2.4" stroke-opacity="1"/>
<circle cx="1118.0" cy="76.0" r="4.2" fill="#28e628" stroke="#1a1010" stroke-width="1.2"/>
<circle cx="1141.5" cy="101.2" r="4.2" fill="#5a9664" stroke="#1a1010" stroke-width="1.2"/>
<circle cx="1176.0" cy="91.7" r="4.2" fill="#96aa5a" stroke="#1a1010" stroke-width="1.2"/>
<circle cx="1195.3" cy="82.2" r="4.2" fill="#f0eb32" stroke="#1a1010" stroke-width="1.2"/>
<circle cx="1174.5" cy="112.6" r="4.2" fill="#5a6946" stroke="#1a1010" stroke-width="1.2"/>
<circle cx="1220.8" cy="87.7" r="4.2" fill="#e1be46" stroke="#1a1010" stroke-width="1.2"/>
<circle cx="1251.4" cy="93.3" r="4.2" fill="#e1a05a" stroke="#1a1010" stroke-width="1.2"/>
<circle cx="1148.2" cy="145.7" r="4.2" fill="#78aa9b" stroke="#1a1010" stroke-width="1.2"/>
<circle cx="1290.5" cy="98.8" r="4.2" fill="#aa643c" stroke="#1a1010" stroke-width="1.2"/>
<circle cx="1309.6" cy="140.3" r="4.2" fill="#b9696e" stroke="#1a1010" stroke-width="1.2"/>
<circle cx="1224.6" cy="132.5" r="4.2" fill="#ebbeaf" stroke="#1a1010" stroke-width="1.2"/>
<circle cx="1227.3" cy="132.8" r="4.2" fill="#e1aa96" stroke="#1a1010" stroke-width="1.2"/>
<circle cx="1227.4" cy="123.4" r="4.2" fill="#f0bea5" stroke="#1a1010" stroke-width="1.2"/>
<circle cx="1236.1" cy="126.9" r="4.2" fill="#6e4b3c" stroke="#1a1010" stroke-width="1.2"/>
<circle cx="1236.5" cy="124.2" r="4.2" fill="#aa826e" stroke="#1a1010" stroke-width="1.2"/>
<circle cx="1238.3" cy="122.5" r="4.2" fill="#be967d" stroke="#1a1010" stroke-width="1.2"/>
<circle cx="1245.0" cy="123.4" r="4.2" fill="#e1a58c" stroke="#1a1010" stroke-width="1.2"/>
<circle cx="1250.3" cy="117.6" r="4.2" fill="#d29678" stroke="#1a1010" stroke-width="1.2"/>
<circle cx="1252.5" cy="122.5" r="4.2" fill="#d79673" stroke="#1a1010" stroke-width="1.2"/>
<circle cx="1243.5" cy="119.4" r="4.2" fill="#cda087" stroke="#1a1010" stroke-width="1.2"/>
<circle cx="1244.5" cy="114.0" r="4.2" fill="#c89678" stroke="#1a1010" stroke-width="1.2"/>
<circle cx="1265.8" cy="114.0" r="4.2" fill="#c88c6e" stroke="#1a1010" stroke-width="1.2"/>
<circle cx="1259.6" cy="114.5" r="4.2" fill="#d7966e" stroke="#1a1010" stroke-width="1.2"/>
<circle cx="1267.0" cy="119.6" r="4.2" fill="#e69682" stroke="#1a1010" stroke-width="1.2"/>
<circle cx="1256.5" cy="107.3" r="4.2" fill="#965a3c" stroke="#1a1010" stroke-width="1.2"/>
<circle cx="1267.0" cy="106.3" r="4.2" fill="#8c5037" stroke="#1a1010" stroke-width="1.2"/>
<circle cx="1273.7" cy="110.4" r="4.2" fill="#7d4632" stroke="#1a1010" stroke-width="1.2"/>
<circle cx="1133.4" cy="163.4" r="4.2" fill="#32e6f0" stroke="#1a1010" stroke-width="1.2"/>
<circle cx="1185.5" cy="156.6" r="4.2" fill="#000000" stroke="#1a1010" stroke-width="1.2"/>
<circle cx="1191.5" cy="152.1" r="4.2" fill="#8c8c8c" stroke="#1a1010" stroke-width="1.2"/>
<circle cx="1138.9" cy="193.5" r="4.2" fill="#328296" stroke="#1a1010" stroke-width="1.2"/>
<circle cx="1170.3" cy="190.8" r="4.2" fill="#6e7da0" stroke="#1a1010" stroke-width="1.2"/>
<circle cx="1189.2" cy="196.2" r="4.2" fill="#827daa" stroke="#1a1010" stroke-width="1.2"/>
<circle cx="1224.4" cy="214.4" r="4.2" fill="#5f416e" stroke="#1a1010" stroke-width="1.2"/>
<circle cx="1281.3" cy="185.3" r="4.2" fill="#b95596" stroke="#1a1010" stroke-width="1.2"/>
<circle cx="1174.4" cy="242.2" r="4.2" fill="#5a64a0" stroke="#1a1010" stroke-width="1.2"/>
<circle cx="1177.3" cy="291.1" r="4.2" fill="#3c4191" stroke="#1a1010" stroke-width="1.2"/>
<circle cx="1302.7" cy="266.5" r="4.2" fill="#fa32f0" stroke="#1a1010" stroke-width="1.2"/>
<circle cx="1177.0" cy="398.7" r="4.2" fill="#0a0ae6" stroke="#1a1010" stroke-width="1.2"/>
<circle cx="1450.7" cy="106.3" r="4.2" fill="#dc1e1e" stroke="#1a1010" stroke-width="1.2"/>
<circle cx="1368.2" cy="127.5" r="4.2" fill="#aa3c46" stroke="#1a1010" stroke-width="1.2"/>
<rect x="1410.3" y="354.5" width="192.4" height="126.0" fill="url(#ins)" stroke="#8a8078" stroke-width="1.4"/>
<rect x="1435.9" y="391.5" width="13" height="13" fill="none" stroke="#fff" stroke-width="1.5" stroke-opacity="0.9"/>
<rect x="1537.2" y="372.3" width="13" height="13" fill="none" stroke="#fff" stroke-width="1.5" stroke-opacity="0.9"/>
<rect x="1584.7" y="372.9" width="13" height="13" fill="none" stroke="#fff" stroke-width="1.5" stroke-opacity="0.9"/>
<rect x="1498.6" y="409.5" width="13" height="13" fill="none" stroke="#fff" stroke-width="1.5" stroke-opacity="0.9"/>
<rect x="1582.7" y="408.8" width="13" height="13" fill="none" stroke="#fff" stroke-width="1.5" stroke-opacity="0.9"/>
<rect x="1517.2" y="423.2" width="13" height="13" fill="none" stroke="#fff" stroke-width="1.5" stroke-opacity="0.9"/>
<rect x="1413.9" y="423.9" width="13" height="13" fill="none" stroke="#fff" stroke-width="1.5" stroke-opacity="0.9"/>
<rect x="1421.5" y="431.5" width="13" height="13" fill="none" stroke="#fff" stroke-width="1.5" stroke-opacity="0.9"/>
<rect x="1428.3" y="443.2" width="13" height="13" fill="none" stroke="#fff" stroke-width="1.5" stroke-opacity="0.9"/>
<rect x="1502.7" y="447.4" width="13" height="13" fill="none" stroke="#fff" stroke-width="1.5" stroke-opacity="0.9"/>
<circle cx="1503.0" cy="385.3" r="4.2" fill="#824b32" stroke="#301008" stroke-width="1.2"/>
<circle cx="1559.5" cy="387.7" r="4.2" fill="#824132" stroke="#301008" stroke-width="1.2"/>
<circle cx="1554.0" cy="422.2" r="4.2" fill="#a03c2d" stroke="#301008" stroke-width="1.2"/>
<circle cx="1467.2" cy="429.0" r="4.2" fill="#e18255" stroke="#301008" stroke-width="1.2"/>
<circle cx="1484.4" cy="444.2" r="4.2" fill="#f08264" stroke="#301008" stroke-width="1.2"/>
<circle cx="1472.0" cy="469.7" r="4.2" fill="#f5a58c" stroke="#301008" stroke-width="1.2"/>
<rect x="1360.9" y="491.3" width="244.6" height="26.4" fill="#343434"/>
<text x="1362.0" y="510.3" font-size="18" textLength="215.5" lengthAdjust="spacingAndGlyphs" fill="#f0f0ec">RGB Triplet: 217, 140, 94</text>
</svg>
</body></html>
